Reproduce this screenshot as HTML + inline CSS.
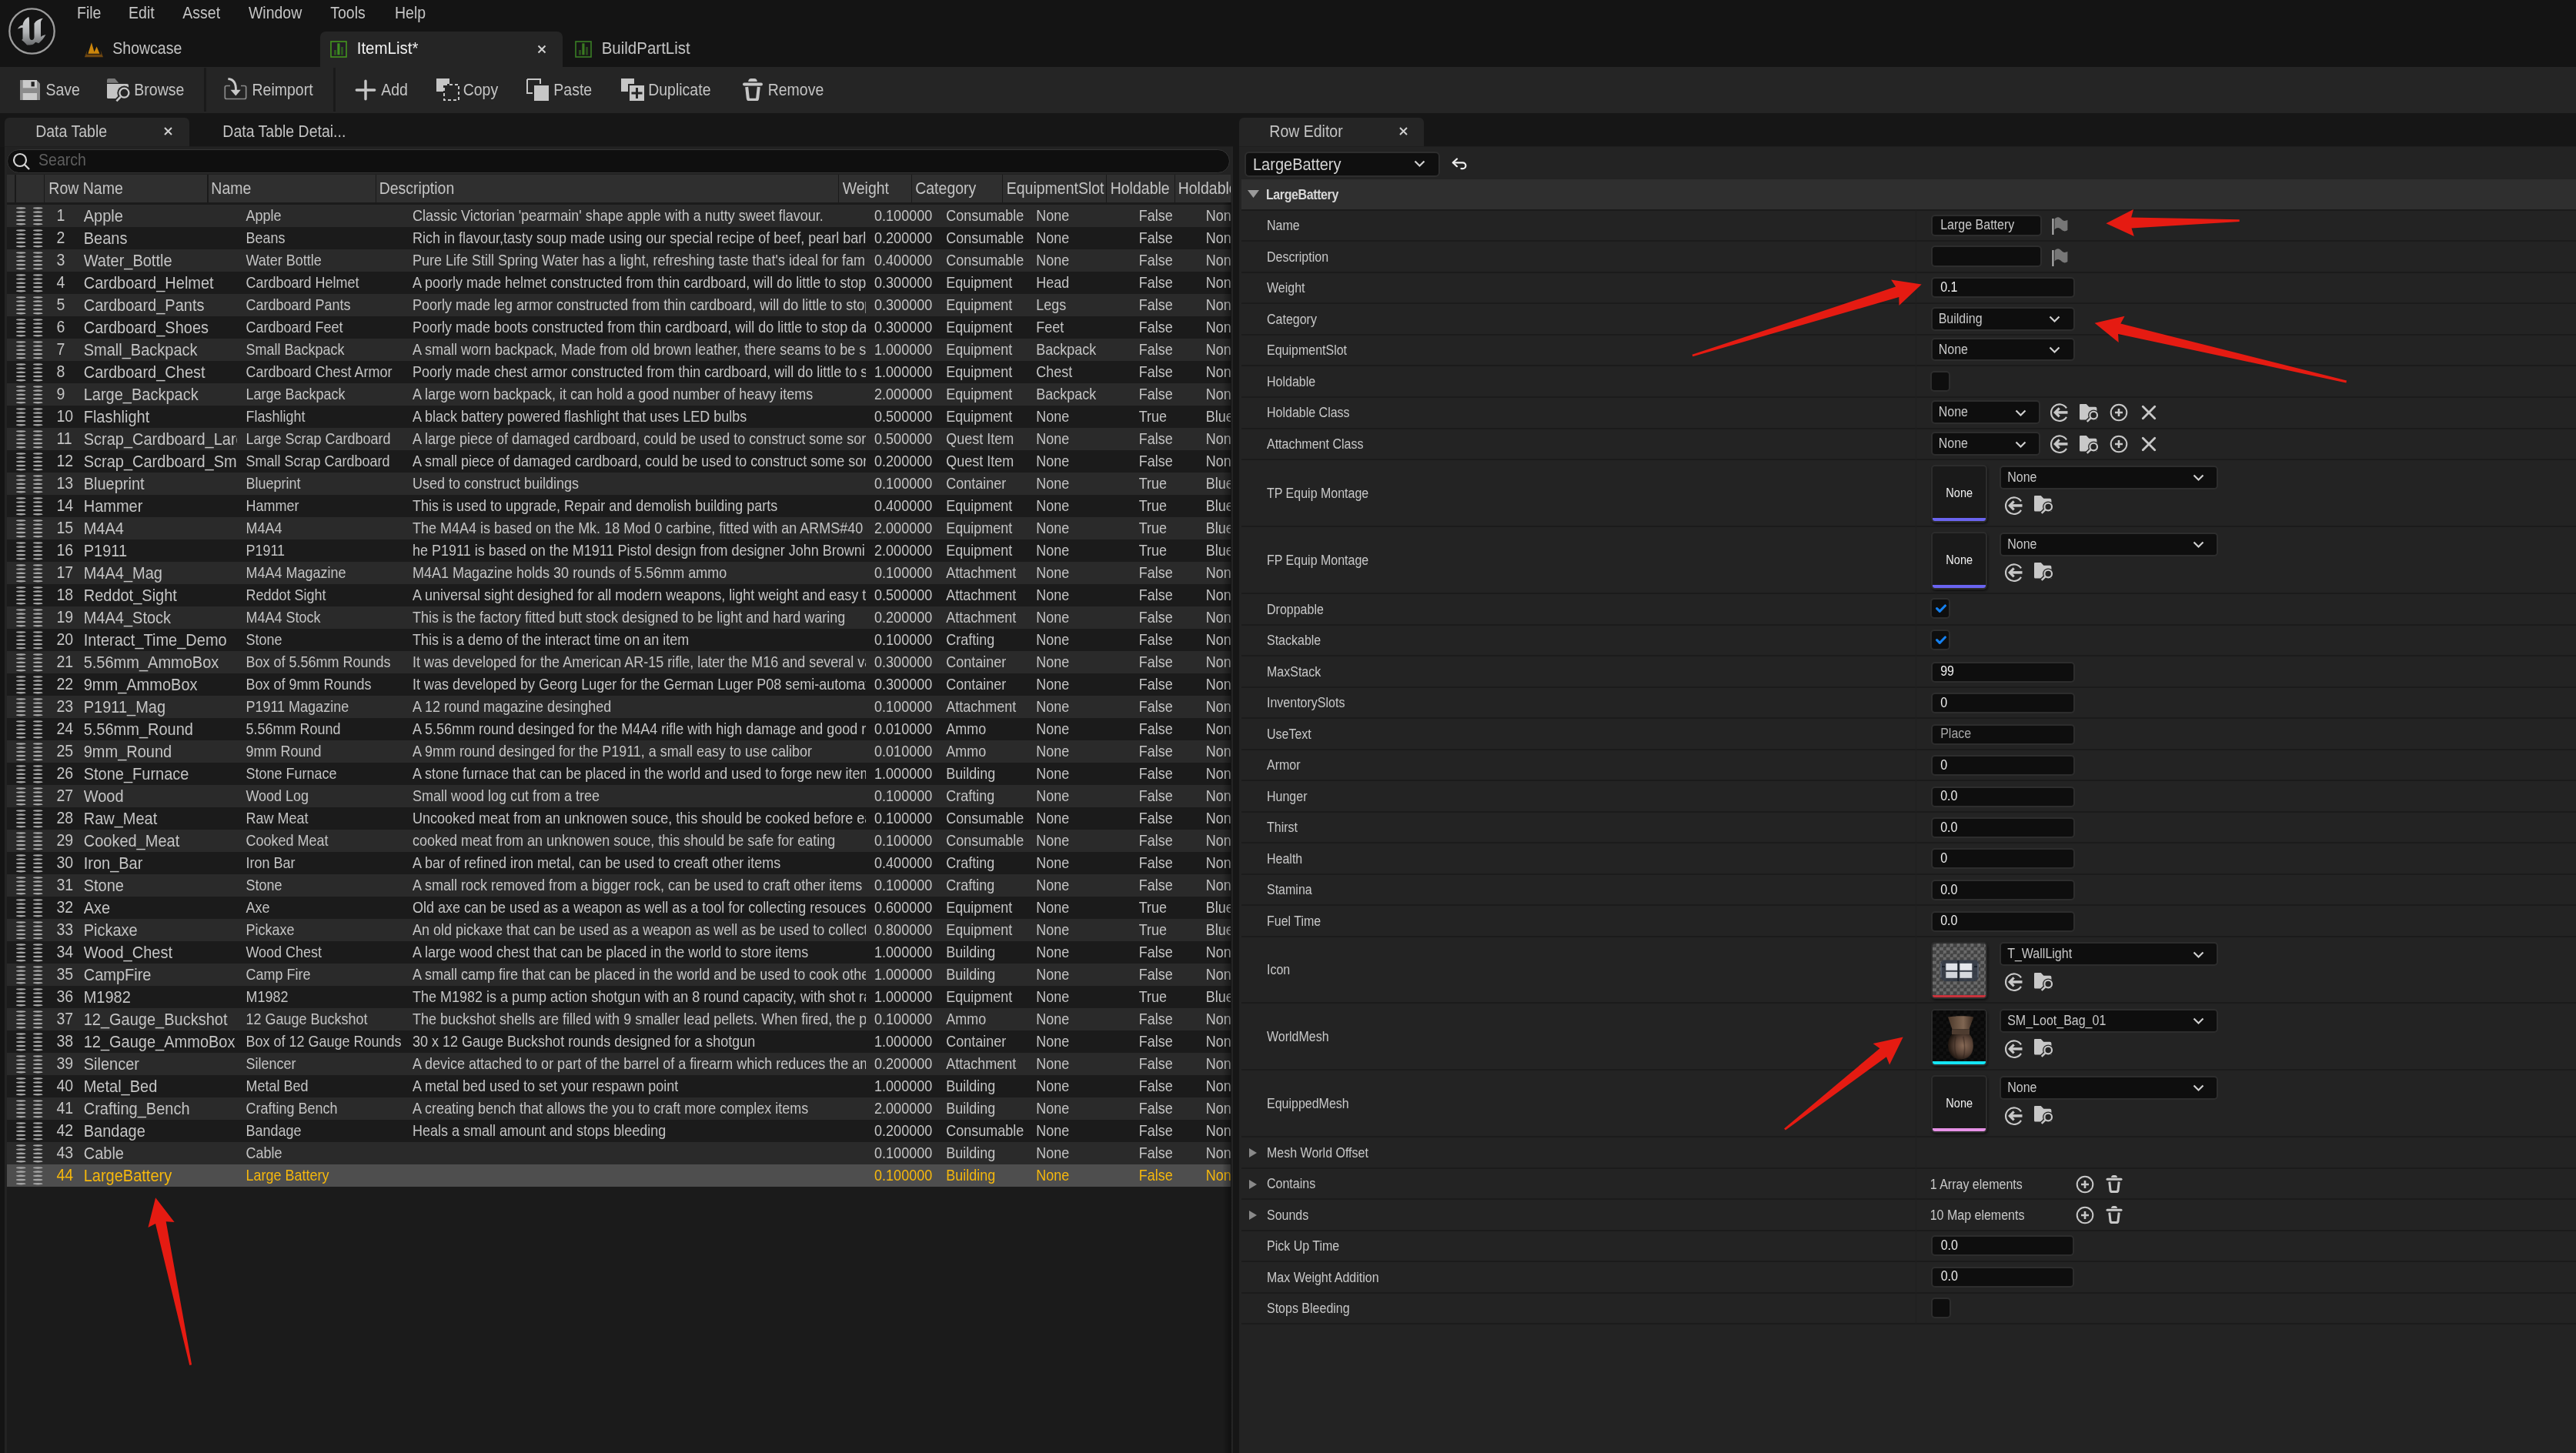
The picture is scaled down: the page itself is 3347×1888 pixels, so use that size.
<!DOCTYPE html>
<html><head><meta charset="utf-8"><title>ItemList - Data Table</title>
<style>
html,body{margin:0;padding:0;}
body{width:3347px;height:1888px;overflow:hidden;background:#141414;position:relative;font-family:"Liberation Sans", sans-serif;}
body div, body svg{position:absolute;box-sizing:content-box;}
.t{white-space:nowrap;line-height:1;}
body{will-change:transform;}
</style></head><body>
<div style="left:0px;top:0px;width:3347px;height:86px;background:#141414;"></div><svg style="left:10px;top:9px;" width="63" height="63" viewBox="0 0 63 63"><circle cx="31.5" cy="31.5" r="29.2" fill="none" stroke="#9c9c9c" stroke-width="2.3"/>
<defs><linearGradient id="ug" x1="0" y1="0" x2="0" y2="1"><stop offset="0" stop-color="#cfd0d2"/><stop offset="0.55" stop-color="#b0b2b4"/><stop offset="1" stop-color="#6a6c6e"/></linearGradient></defs>
<path fill="url(#ug)" d="M12.8 28.7 C15 25 17.5 23.5 19.5 23.8 C20 19 23 15 27.4 12.9 C27.8 14.5 28 16 28 17.3 L28.3 38.5 C28.3 41.5 29.8 43 31.3 43 C33 43 34.5 41.5 34.5 39 L34.5 21.4 C37 17.5 41 15.5 45.9 14.7 C44 16.5 43 18.5 43 20.3 L43 39 C45 37.5 47.5 36.5 49.4 36.1 C47 40.5 44 44.5 40.3 47.2 L36.2 45.7 C35 47 33.5 48.5 32.1 48.9 C30 49.5 27.5 49.5 25.1 49.5 C22.5 47 20.5 44.5 18.1 43.1 C19 42.5 19.5 41.8 19.5 41.3 L19.5 27 C17.5 27 15 27.5 12.8 28.7 Z"/></svg><div class="t" style="left:100.00px;top:8.29px;font-size:19.5px;color:#c4c4c4;font-weight:400;transform:scaleY(1.1);transform-origin:0 15.31px;">File</div><div class="t" style="left:167.10px;top:8.29px;font-size:19.5px;color:#c4c4c4;font-weight:400;transform:scaleY(1.1);transform-origin:0 15.31px;">Edit</div><div class="t" style="left:237.30px;top:8.29px;font-size:19.5px;color:#c4c4c4;font-weight:400;transform:scaleY(1.1);transform-origin:0 15.31px;">Asset</div><div class="t" style="left:322.90px;top:8.29px;font-size:19.5px;color:#c4c4c4;font-weight:400;transform:scaleY(1.1);transform-origin:0 15.31px;">Window</div><div class="t" style="left:429.20px;top:8.29px;font-size:19.5px;color:#c4c4c4;font-weight:400;transform:scaleY(1.1);transform-origin:0 15.31px;">Tools</div><div class="t" style="left:513.00px;top:8.29px;font-size:19.5px;color:#c4c4c4;font-weight:400;transform:scaleY(1.1);transform-origin:0 15.31px;">Help</div><div style="left:416px;top:41px;width:315px;height:46.5px;background:#252525;border-radius:7px 7px 0 0;"></div><svg style="left:108px;top:53px;" width="28" height="24" viewBox="0 0 28 24"><path d="M10.9 2.2 L6.4 16.8 L14.5 16.8 L14.5 14.4 Z M14.5 14.4 L17.6 7.5 L21.5 16.8 L14.5 16.8 Z" fill="#cc860c"/><path d="M5.4 11.9 L1.9 21.2 L26 21.2 L22.6 11.9 L23.5 17.8 L4.4 17.8 Z" fill="#6e4610"/></svg><div class="t" style="left:146.30px;top:53.69px;font-size:19.5px;color:#c4c4c4;font-weight:400;transform:scaleY(1.1);transform-origin:0 15.31px;">Showcase</div><svg style="left:429px;top:53px;" width="22" height="22" viewBox="0 0 22 22"><rect x="1" y="1" width="20" height="20" fill="#221e26" stroke="#44951f" stroke-width="1.6"/><rect x="5" y="12" width="3" height="6.5" fill="#2e5e1e"/><rect x="9.3" y="3.3" width="3.2" height="15" fill="#3f8f22"/><rect x="14.1" y="8" width="2.8" height="10.5" fill="#2d5a20"/></svg><div class="t" style="left:463.70px;top:52.85px;font-size:20.5px;color:#f0f0f0;font-weight:400;transform:scaleY(1.1);transform-origin:0 16.15px;">ItemList*</div><svg style="left:698px;top:58px;" width="12" height="12" viewBox="0 0 12 12"><path d="M1.5 1.5 L10.5 10.5 M10.5 1.5 L1.5 10.5" stroke="#d0d0d0" stroke-width="2"/></svg><svg style="left:747px;top:53px;" width="22" height="22" viewBox="0 0 22 22"><rect x="1" y="1" width="20" height="20" fill="#161616" stroke="#3a7f25" stroke-width="1.6"/><rect x="5" y="12" width="3" height="6.5" fill="#2a4f1c"/><rect x="9.3" y="3.3" width="3.2" height="15" fill="#3a7a22"/><rect x="14.1" y="8" width="2.8" height="10.5" fill="#2a4f1c"/></svg><div class="t" style="left:781.70px;top:52.85px;font-size:20.5px;color:#c4c4c4;font-weight:400;transform:scaleY(1.1);transform-origin:0 16.15px;">BuildPartList</div><div style="left:0px;top:86.5px;width:3347px;height:60.5px;background:#252525;"></div><div style="left:264.7px;top:88px;width:3px;height:57px;background:#1a1a1a;"></div><div style="left:433px;top:88px;width:3px;height:57px;background:#1a1a1a;"></div><svg style="left:26px;top:104px;" width="26" height="26" viewBox="0 0 26 26"><path d="M0 0 H21.5 L26 4.5 V26 H0 Z" fill="#8c8c8c"/><rect x="3.7" y="0" width="18.3" height="10.3" fill="#cbcbcb"/><rect x="14.5" y="2.2" width="4.3" height="6.2" fill="#222"/><rect x="3.7" y="17" width="18.3" height="9" fill="#cbcbcb"/></svg><div class="t" style="left:59.50px;top:107.69px;font-size:19.5px;color:#c4c4c4;font-weight:400;transform:scaleY(1.1);transform-origin:0 15.31px;">Save</div><svg style="left:139px;top:101px;" width="32" height="32" viewBox="0 0 32 32"><path d="M0 3 Q0 1 2 1 H10.2 L15.2 6.7 H0 Z" fill="#7a7a7a"/><path d="M0 8.1 H26 Q28 8.1 28 10 V27 H1.5 Q0 27 0 25.5 Z" fill="#c4c4c4"/><circle cx="22.4" cy="19.7" r="9.1" fill="#252525"/><path d="M17.2 25.4 L12.4 30.4" stroke="#252525" stroke-width="6.5"/><circle cx="22.4" cy="19.7" r="6" fill="none" stroke="#c8c8c8" stroke-width="2.3"/><path d="M17.6 24.8 L12.4 30.4" stroke="#c8c8c8" stroke-width="2.6"/></svg><div class="t" style="left:174.30px;top:107.69px;font-size:19.5px;color:#c4c4c4;font-weight:400;transform:scaleY(1.1);transform-origin:0 15.31px;">Browse</div><svg style="left:291px;top:101px;" width="31" height="30" viewBox="0 0 31 30"><path d="M8 10.5 H3.3 Q1.3 10.5 1.3 12.5 V25.5 Q1.3 27.5 3.3 27.5 H26.7 Q28.7 27.5 28.7 25.5 V12.5 Q28.7 10.5 26.7 10.5 H22" fill="none" stroke="#8a8a8a" stroke-width="1.7"/><path d="M5.4 1.5 C12 2 15.8 6.5 15.4 16.5" fill="none" stroke="#c8c8c8" stroke-width="2.8"/><path d="M8.5 15.7 L15.3 23.4 L21.8 15.7 Z" fill="#c8c8c8"/></svg><div class="t" style="left:327.50px;top:107.69px;font-size:19.5px;color:#c4c4c4;font-weight:400;transform:scaleY(1.1);transform-origin:0 15.31px;">Reimport</div><svg style="left:461px;top:103px;" width="28" height="28" viewBox="0 0 28 28"><path d="M14 2.3 V25.7 M2.3 14 H25.7" stroke="#c6c6c6" stroke-width="3.4" stroke-linecap="round"/></svg><div class="t" style="left:495.20px;top:107.69px;font-size:19.5px;color:#c4c4c4;font-weight:400;transform:scaleY(1.1);transform-origin:0 15.31px;">Add</div><svg style="left:567px;top:102px;" width="31" height="30" viewBox="0 0 31 30"><path d="M0 0 H17 V7 H9 V17 H0 Z" fill="#c6c6c6"/><rect x="10" y="8" width="19" height="20" fill="none" stroke="#c6c6c6" stroke-width="2" stroke-dasharray="4 3"/></svg><div class="t" style="left:601.70px;top:107.69px;font-size:19.5px;color:#c4c4c4;font-weight:400;transform:scaleY(1.1);transform-origin:0 15.31px;">Copy</div><svg style="left:684px;top:102px;" width="31" height="30" viewBox="0 0 31 30"><path d="M1 1 H18 V7 M1 1 V19 H8" fill="none" stroke="#c6c6c6" stroke-width="2"/><rect x="10" y="9" width="19" height="20" fill="#c6c6c6"/></svg><div class="t" style="left:719.30px;top:107.69px;font-size:19.5px;color:#c4c4c4;font-weight:400;transform:scaleY(1.1);transform-origin:0 15.31px;">Paste</div><svg style="left:807px;top:102px;" width="31" height="30" viewBox="0 0 31 30"><path d="M0 0 H17 V7 H9 V17 H0 Z" fill="#c6c6c6"/><rect x="11" y="9" width="19" height="20" fill="#c6c6c6"/><path d="M20.5 12 V26 M13.5 19 H27.5" stroke="#252525" stroke-width="3"/></svg><div class="t" style="left:842.20px;top:107.69px;font-size:19.5px;color:#c4c4c4;font-weight:400;transform:scaleY(1.1);transform-origin:0 15.31px;">Duplicate</div><svg style="left:964px;top:101px;" width="28" height="30" viewBox="0 0 28 30"><path d="M8.2 5 Q8.5 1 12 1 H16 Q19.5 1 19.8 5 Z" fill="#c6c6c6"/><path d="M3 8.5 H25" stroke="#c6c6c6" stroke-width="4" stroke-linecap="round"/><path d="M6.2 12 L7.8 26.5 Q8 28.7 10.2 28.7 H17.8 Q20 28.7 20.2 26.5 L21.8 12" fill="none" stroke="#c6c6c6" stroke-width="4" stroke-linejoin="round"/></svg><div class="t" style="left:997.70px;top:107.69px;font-size:19.5px;color:#c4c4c4;font-weight:400;transform:scaleY(1.1);transform-origin:0 15.31px;">Remove</div><div style="left:0px;top:147px;width:3347px;height:44px;background:#161616;"></div><div style="left:6px;top:191px;width:1596px;height:1697px;background:#222222;"></div><div style="left:6px;top:191px;width:3.3px;height:1697px;background:#232323;"></div><div style="left:6px;top:153px;width:240px;height:37px;background:#252525;border-radius:6px 6px 0 0;"></div><div class="t" style="left:46.20px;top:161.69px;font-size:19.5px;color:#c4c4c4;font-weight:400;transform:scaleY(1.1);transform-origin:0 15.31px;">Data Table</div><svg style="left:213px;top:165px;" width="11" height="11" viewBox="0 0 11 11"><path d="M1 1 L10 10 M10 1 L1 10" stroke="#d0d0d0" stroke-width="2"/></svg><div class="t" style="left:289.30px;top:161.69px;font-size:19.5px;color:#c4c4c4;font-weight:400;transform:scaleY(1.1);transform-origin:0 15.31px;">Data Table Detai...</div><div style="left:6px;top:190px;width:1596px;height:1.3px;background:#1e1e1e;"></div><div style="left:9px;top:194.3px;width:1586.6px;height:28.8px;background:#0f0f0f;border:1.6px solid #343434;border-radius:16px;"></div><svg style="left:16px;top:198px;" width="24" height="24" viewBox="0 0 24 24"><circle cx="10" cy="10" r="8" fill="none" stroke="#d4d4d4" stroke-width="2.2"/><path d="M15.5 15.5 L22 22" stroke="#d4d4d4" stroke-width="2.4"/></svg><div class="t" style="left:50.10px;top:199.39px;font-size:19.5px;color:#5e5e5e;font-weight:400;transform:scaleY(1.1);transform-origin:0 15.31px;">Search</div><div style="left:9.3px;top:227px;width:1589.5px;height:1661px;background:#1b1b1b;"></div><div style="left:1600.3px;top:191px;width:1.8px;height:1697px;background:#242424;"></div><div style="left:1602px;top:147px;width:8px;height:1741px;background:#161616;"></div><div style="left:9.3px;top:227px;width:1589.5px;height:36px;background:#2f2f2f;"></div><div style="left:19.4px;top:227px;width:1.3px;height:36px;background:#1a1a1a;"></div><div style="left:56.9px;top:227px;width:1.3px;height:36px;background:#1a1a1a;"></div><div style="left:269.4px;top:227px;width:1.3px;height:36px;background:#1a1a1a;"></div><div style="left:487.79999999999995px;top:227px;width:1.3px;height:36px;background:#1a1a1a;"></div><div style="left:1089.0px;top:227px;width:1.3px;height:36px;background:#1a1a1a;"></div><div style="left:1183.8000000000002px;top:227px;width:1.3px;height:36px;background:#1a1a1a;"></div><div style="left:1302.1000000000001px;top:227px;width:1.3px;height:36px;background:#1a1a1a;"></div><div style="left:1437.2px;top:227px;width:1.3px;height:36px;background:#1a1a1a;"></div><div style="left:1525.8000000000002px;top:227px;width:1.3px;height:36px;background:#1a1a1a;"></div><div class="t" style="left:63.30px;top:235.89px;font-size:19.5px;color:#c4c4c4;font-weight:400;transform:scaleY(1.1);transform-origin:0 15.31px;">Row Name</div><div class="t" style="left:274.30px;top:235.89px;font-size:19.5px;color:#c4c4c4;font-weight:400;transform:scaleY(1.1);transform-origin:0 15.31px;">Name</div><div class="t" style="left:492.70px;top:235.89px;font-size:19.5px;color:#c4c4c4;font-weight:400;transform:scaleY(1.1);transform-origin:0 15.31px;">Description</div><div class="t" style="left:1094.70px;top:235.89px;font-size:19.5px;color:#c4c4c4;font-weight:400;transform:scaleY(1.1);transform-origin:0 15.31px;">Weight</div><div class="t" style="left:1189.20px;top:235.89px;font-size:19.5px;color:#c4c4c4;font-weight:400;transform:scaleY(1.1);transform-origin:0 15.31px;">Category</div><div class="t" style="left:1307.70px;top:235.89px;font-size:19.5px;color:#c4c4c4;font-weight:400;transform:scaleY(1.1);transform-origin:0 15.31px;">EquipmentSlot</div><div class="t" style="left:1442.70px;top:235.89px;font-size:19.5px;color:#c4c4c4;font-weight:400;transform:scaleY(1.1);transform-origin:0 15.31px;">Holdable</div><div class="t" style="left:1530.70px;top:235.89px;font-size:19.5px;color:#c4c4c4;font-weight:400;width:67.90px;height:25.4px;overflow:hidden;transform:scaleY(1.1);transform-origin:0 15.31px;">Holdable</div><div style="left:9.3px;top:266.0px;width:1589.5px;height:29.0px;background:#2a2a2a;"></div><svg style="left:21.3px;top:269.0px;" width="13" height="27" viewBox="0 0 13 27"><ellipse cx="6.25" cy="1.4" rx="6.3" ry="1.25" fill="#a6a6a6"/><ellipse cx="6.25" cy="6.6" rx="6.3" ry="1.25" fill="#a6a6a6"/><ellipse cx="6.25" cy="11.8" rx="6.3" ry="1.25" fill="#a6a6a6"/><ellipse cx="6.25" cy="17.0" rx="6.3" ry="1.25" fill="#a6a6a6"/><ellipse cx="6.25" cy="22.2" rx="6.3" ry="1.25" fill="#a6a6a6"/></svg><svg style="left:42.9px;top:269.0px;" width="13" height="27" viewBox="0 0 13 27"><ellipse cx="6.25" cy="1.4" rx="6.3" ry="1.25" fill="#a6a6a6"/><ellipse cx="6.25" cy="6.6" rx="6.3" ry="1.25" fill="#a6a6a6"/><ellipse cx="6.25" cy="11.8" rx="6.3" ry="1.25" fill="#a6a6a6"/><ellipse cx="6.25" cy="17.0" rx="6.3" ry="1.25" fill="#a6a6a6"/><ellipse cx="6.25" cy="22.2" rx="6.3" ry="1.25" fill="#a6a6a6"/></svg><div class="t" style="left:73.40px;top:271.09px;font-size:19.5px;color:#c4c4c4;font-weight:400;transform:scaleY(1.1);transform-origin:0 15.31px;">1</div><div class="t" style="left:108.70px;top:270.67px;font-size:20px;color:#c4c4c4;font-weight:400;width:199.60px;height:26.0px;overflow:hidden;transform:scaleY(1.1);transform-origin:0 15.73px;">Apple</div><div class="t" style="left:319.40px;top:272.36px;font-size:18px;color:#c4c4c4;font-weight:400;width:210.60px;height:23.4px;overflow:hidden;transform:scaleY(1.1);transform-origin:0 14.04px;">Apple</div><div class="t" style="left:536.00px;top:272.36px;font-size:18px;color:#c4c4c4;font-weight:400;width:589.00px;height:23.4px;overflow:hidden;transform:scaleY(1.1);transform-origin:0 14.04px;">Classic Victorian &#x27;pearmain&#x27; shape apple with a nutty sweet flavour.</div><div class="t" style="left:1136.10px;top:272.36px;font-size:18px;color:#c4c4c4;font-weight:400;transform:scaleY(1.1);transform-origin:0 14.04px;">0.100000</div><div class="t" style="left:1229.20px;top:272.36px;font-size:18px;color:#c4c4c4;font-weight:400;transform:scaleY(1.1);transform-origin:0 14.04px;">Consumable</div><div class="t" style="left:1346.20px;top:272.36px;font-size:18px;color:#c4c4c4;font-weight:400;transform:scaleY(1.1);transform-origin:0 14.04px;">None</div><div class="t" style="left:1479.70px;top:272.36px;font-size:18px;color:#c4c4c4;font-weight:400;transform:scaleY(1.1);transform-origin:0 14.04px;">False</div><div class="t" style="left:1566.70px;top:272.36px;font-size:18px;color:#c4c4c4;font-weight:400;width:31.90px;height:23.4px;overflow:hidden;transform:scaleY(1.1);transform-origin:0 14.04px;">None</div><div style="left:9.3px;top:295.0px;width:1589.5px;height:29.0px;background:#1b1b1b;"></div><svg style="left:21.3px;top:298.0px;" width="13" height="27" viewBox="0 0 13 27"><ellipse cx="6.25" cy="1.4" rx="6.3" ry="1.25" fill="#a6a6a6"/><ellipse cx="6.25" cy="6.6" rx="6.3" ry="1.25" fill="#a6a6a6"/><ellipse cx="6.25" cy="11.8" rx="6.3" ry="1.25" fill="#a6a6a6"/><ellipse cx="6.25" cy="17.0" rx="6.3" ry="1.25" fill="#a6a6a6"/><ellipse cx="6.25" cy="22.2" rx="6.3" ry="1.25" fill="#a6a6a6"/></svg><svg style="left:42.9px;top:298.0px;" width="13" height="27" viewBox="0 0 13 27"><ellipse cx="6.25" cy="1.4" rx="6.3" ry="1.25" fill="#a6a6a6"/><ellipse cx="6.25" cy="6.6" rx="6.3" ry="1.25" fill="#a6a6a6"/><ellipse cx="6.25" cy="11.8" rx="6.3" ry="1.25" fill="#a6a6a6"/><ellipse cx="6.25" cy="17.0" rx="6.3" ry="1.25" fill="#a6a6a6"/><ellipse cx="6.25" cy="22.2" rx="6.3" ry="1.25" fill="#a6a6a6"/></svg><div class="t" style="left:73.40px;top:300.09px;font-size:19.5px;color:#c4c4c4;font-weight:400;transform:scaleY(1.1);transform-origin:0 15.31px;">2</div><div class="t" style="left:108.70px;top:299.67px;font-size:20px;color:#c4c4c4;font-weight:400;width:199.60px;height:26.0px;overflow:hidden;transform:scaleY(1.1);transform-origin:0 15.73px;">Beans</div><div class="t" style="left:319.40px;top:301.36px;font-size:18px;color:#c4c4c4;font-weight:400;width:210.60px;height:23.4px;overflow:hidden;transform:scaleY(1.1);transform-origin:0 14.04px;">Beans</div><div class="t" style="left:536.00px;top:301.36px;font-size:18px;color:#c4c4c4;font-weight:400;width:589.00px;height:23.4px;overflow:hidden;transform:scaleY(1.1);transform-origin:0 14.04px;">Rich in flavour,tasty soup made using our special recipe of beef, pearl barley and vegetables</div><div class="t" style="left:1136.10px;top:301.36px;font-size:18px;color:#c4c4c4;font-weight:400;transform:scaleY(1.1);transform-origin:0 14.04px;">0.200000</div><div class="t" style="left:1229.20px;top:301.36px;font-size:18px;color:#c4c4c4;font-weight:400;transform:scaleY(1.1);transform-origin:0 14.04px;">Consumable</div><div class="t" style="left:1346.20px;top:301.36px;font-size:18px;color:#c4c4c4;font-weight:400;transform:scaleY(1.1);transform-origin:0 14.04px;">None</div><div class="t" style="left:1479.70px;top:301.36px;font-size:18px;color:#c4c4c4;font-weight:400;transform:scaleY(1.1);transform-origin:0 14.04px;">False</div><div class="t" style="left:1566.70px;top:301.36px;font-size:18px;color:#c4c4c4;font-weight:400;width:31.90px;height:23.4px;overflow:hidden;transform:scaleY(1.1);transform-origin:0 14.04px;">None</div><div style="left:9.3px;top:324.0px;width:1589.5px;height:29.0px;background:#2a2a2a;"></div><svg style="left:21.3px;top:327.0px;" width="13" height="27" viewBox="0 0 13 27"><ellipse cx="6.25" cy="1.4" rx="6.3" ry="1.25" fill="#a6a6a6"/><ellipse cx="6.25" cy="6.6" rx="6.3" ry="1.25" fill="#a6a6a6"/><ellipse cx="6.25" cy="11.8" rx="6.3" ry="1.25" fill="#a6a6a6"/><ellipse cx="6.25" cy="17.0" rx="6.3" ry="1.25" fill="#a6a6a6"/><ellipse cx="6.25" cy="22.2" rx="6.3" ry="1.25" fill="#a6a6a6"/></svg><svg style="left:42.9px;top:327.0px;" width="13" height="27" viewBox="0 0 13 27"><ellipse cx="6.25" cy="1.4" rx="6.3" ry="1.25" fill="#a6a6a6"/><ellipse cx="6.25" cy="6.6" rx="6.3" ry="1.25" fill="#a6a6a6"/><ellipse cx="6.25" cy="11.8" rx="6.3" ry="1.25" fill="#a6a6a6"/><ellipse cx="6.25" cy="17.0" rx="6.3" ry="1.25" fill="#a6a6a6"/><ellipse cx="6.25" cy="22.2" rx="6.3" ry="1.25" fill="#a6a6a6"/></svg><div class="t" style="left:73.40px;top:329.09px;font-size:19.5px;color:#c4c4c4;font-weight:400;transform:scaleY(1.1);transform-origin:0 15.31px;">3</div><div class="t" style="left:108.70px;top:328.67px;font-size:20px;color:#c4c4c4;font-weight:400;width:199.60px;height:26.0px;overflow:hidden;transform:scaleY(1.1);transform-origin:0 15.73px;">Water_Bottle</div><div class="t" style="left:319.40px;top:330.36px;font-size:18px;color:#c4c4c4;font-weight:400;width:210.60px;height:23.4px;overflow:hidden;transform:scaleY(1.1);transform-origin:0 14.04px;">Water Bottle</div><div class="t" style="left:536.00px;top:330.36px;font-size:18px;color:#c4c4c4;font-weight:400;width:589.00px;height:23.4px;overflow:hidden;transform:scaleY(1.1);transform-origin:0 14.04px;">Pure Life Still Spring Water has a light, refreshing taste that&#x27;s ideal for families</div><div class="t" style="left:1136.10px;top:330.36px;font-size:18px;color:#c4c4c4;font-weight:400;transform:scaleY(1.1);transform-origin:0 14.04px;">0.400000</div><div class="t" style="left:1229.20px;top:330.36px;font-size:18px;color:#c4c4c4;font-weight:400;transform:scaleY(1.1);transform-origin:0 14.04px;">Consumable</div><div class="t" style="left:1346.20px;top:330.36px;font-size:18px;color:#c4c4c4;font-weight:400;transform:scaleY(1.1);transform-origin:0 14.04px;">None</div><div class="t" style="left:1479.70px;top:330.36px;font-size:18px;color:#c4c4c4;font-weight:400;transform:scaleY(1.1);transform-origin:0 14.04px;">False</div><div class="t" style="left:1566.70px;top:330.36px;font-size:18px;color:#c4c4c4;font-weight:400;width:31.90px;height:23.4px;overflow:hidden;transform:scaleY(1.1);transform-origin:0 14.04px;">None</div><div style="left:9.3px;top:353.0px;width:1589.5px;height:29.0px;background:#1b1b1b;"></div><svg style="left:21.3px;top:356.0px;" width="13" height="27" viewBox="0 0 13 27"><ellipse cx="6.25" cy="1.4" rx="6.3" ry="1.25" fill="#a6a6a6"/><ellipse cx="6.25" cy="6.6" rx="6.3" ry="1.25" fill="#a6a6a6"/><ellipse cx="6.25" cy="11.8" rx="6.3" ry="1.25" fill="#a6a6a6"/><ellipse cx="6.25" cy="17.0" rx="6.3" ry="1.25" fill="#a6a6a6"/><ellipse cx="6.25" cy="22.2" rx="6.3" ry="1.25" fill="#a6a6a6"/></svg><svg style="left:42.9px;top:356.0px;" width="13" height="27" viewBox="0 0 13 27"><ellipse cx="6.25" cy="1.4" rx="6.3" ry="1.25" fill="#a6a6a6"/><ellipse cx="6.25" cy="6.6" rx="6.3" ry="1.25" fill="#a6a6a6"/><ellipse cx="6.25" cy="11.8" rx="6.3" ry="1.25" fill="#a6a6a6"/><ellipse cx="6.25" cy="17.0" rx="6.3" ry="1.25" fill="#a6a6a6"/><ellipse cx="6.25" cy="22.2" rx="6.3" ry="1.25" fill="#a6a6a6"/></svg><div class="t" style="left:73.40px;top:358.09px;font-size:19.5px;color:#c4c4c4;font-weight:400;transform:scaleY(1.1);transform-origin:0 15.31px;">4</div><div class="t" style="left:108.70px;top:357.67px;font-size:20px;color:#c4c4c4;font-weight:400;width:199.60px;height:26.0px;overflow:hidden;transform:scaleY(1.1);transform-origin:0 15.73px;">Cardboard_Helmet</div><div class="t" style="left:319.40px;top:359.36px;font-size:18px;color:#c4c4c4;font-weight:400;width:210.60px;height:23.4px;overflow:hidden;transform:scaleY(1.1);transform-origin:0 14.04px;">Cardboard Helmet</div><div class="t" style="left:536.00px;top:359.36px;font-size:18px;color:#c4c4c4;font-weight:400;width:589.00px;height:23.4px;overflow:hidden;transform:scaleY(1.1);transform-origin:0 14.04px;">A poorly made helmet constructed from thin cardboard, will do little to stop damage</div><div class="t" style="left:1136.10px;top:359.36px;font-size:18px;color:#c4c4c4;font-weight:400;transform:scaleY(1.1);transform-origin:0 14.04px;">0.300000</div><div class="t" style="left:1229.20px;top:359.36px;font-size:18px;color:#c4c4c4;font-weight:400;transform:scaleY(1.1);transform-origin:0 14.04px;">Equipment</div><div class="t" style="left:1346.20px;top:359.36px;font-size:18px;color:#c4c4c4;font-weight:400;transform:scaleY(1.1);transform-origin:0 14.04px;">Head</div><div class="t" style="left:1479.70px;top:359.36px;font-size:18px;color:#c4c4c4;font-weight:400;transform:scaleY(1.1);transform-origin:0 14.04px;">False</div><div class="t" style="left:1566.70px;top:359.36px;font-size:18px;color:#c4c4c4;font-weight:400;width:31.90px;height:23.4px;overflow:hidden;transform:scaleY(1.1);transform-origin:0 14.04px;">None</div><div style="left:9.3px;top:382.0px;width:1589.5px;height:29.0px;background:#2a2a2a;"></div><svg style="left:21.3px;top:385.0px;" width="13" height="27" viewBox="0 0 13 27"><ellipse cx="6.25" cy="1.4" rx="6.3" ry="1.25" fill="#a6a6a6"/><ellipse cx="6.25" cy="6.6" rx="6.3" ry="1.25" fill="#a6a6a6"/><ellipse cx="6.25" cy="11.8" rx="6.3" ry="1.25" fill="#a6a6a6"/><ellipse cx="6.25" cy="17.0" rx="6.3" ry="1.25" fill="#a6a6a6"/><ellipse cx="6.25" cy="22.2" rx="6.3" ry="1.25" fill="#a6a6a6"/></svg><svg style="left:42.9px;top:385.0px;" width="13" height="27" viewBox="0 0 13 27"><ellipse cx="6.25" cy="1.4" rx="6.3" ry="1.25" fill="#a6a6a6"/><ellipse cx="6.25" cy="6.6" rx="6.3" ry="1.25" fill="#a6a6a6"/><ellipse cx="6.25" cy="11.8" rx="6.3" ry="1.25" fill="#a6a6a6"/><ellipse cx="6.25" cy="17.0" rx="6.3" ry="1.25" fill="#a6a6a6"/><ellipse cx="6.25" cy="22.2" rx="6.3" ry="1.25" fill="#a6a6a6"/></svg><div class="t" style="left:73.40px;top:387.09px;font-size:19.5px;color:#c4c4c4;font-weight:400;transform:scaleY(1.1);transform-origin:0 15.31px;">5</div><div class="t" style="left:108.70px;top:386.67px;font-size:20px;color:#c4c4c4;font-weight:400;width:199.60px;height:26.0px;overflow:hidden;transform:scaleY(1.1);transform-origin:0 15.73px;">Cardboard_Pants</div><div class="t" style="left:319.40px;top:388.36px;font-size:18px;color:#c4c4c4;font-weight:400;width:210.60px;height:23.4px;overflow:hidden;transform:scaleY(1.1);transform-origin:0 14.04px;">Cardboard Pants</div><div class="t" style="left:536.00px;top:388.36px;font-size:18px;color:#c4c4c4;font-weight:400;width:589.00px;height:23.4px;overflow:hidden;transform:scaleY(1.1);transform-origin:0 14.04px;">Poorly made leg armor constructed from thin cardboard, will do little to stop damage</div><div class="t" style="left:1136.10px;top:388.36px;font-size:18px;color:#c4c4c4;font-weight:400;transform:scaleY(1.1);transform-origin:0 14.04px;">0.300000</div><div class="t" style="left:1229.20px;top:388.36px;font-size:18px;color:#c4c4c4;font-weight:400;transform:scaleY(1.1);transform-origin:0 14.04px;">Equipment</div><div class="t" style="left:1346.20px;top:388.36px;font-size:18px;color:#c4c4c4;font-weight:400;transform:scaleY(1.1);transform-origin:0 14.04px;">Legs</div><div class="t" style="left:1479.70px;top:388.36px;font-size:18px;color:#c4c4c4;font-weight:400;transform:scaleY(1.1);transform-origin:0 14.04px;">False</div><div class="t" style="left:1566.70px;top:388.36px;font-size:18px;color:#c4c4c4;font-weight:400;width:31.90px;height:23.4px;overflow:hidden;transform:scaleY(1.1);transform-origin:0 14.04px;">None</div><div style="left:9.3px;top:411.0px;width:1589.5px;height:29.0px;background:#1b1b1b;"></div><svg style="left:21.3px;top:414.0px;" width="13" height="27" viewBox="0 0 13 27"><ellipse cx="6.25" cy="1.4" rx="6.3" ry="1.25" fill="#a6a6a6"/><ellipse cx="6.25" cy="6.6" rx="6.3" ry="1.25" fill="#a6a6a6"/><ellipse cx="6.25" cy="11.8" rx="6.3" ry="1.25" fill="#a6a6a6"/><ellipse cx="6.25" cy="17.0" rx="6.3" ry="1.25" fill="#a6a6a6"/><ellipse cx="6.25" cy="22.2" rx="6.3" ry="1.25" fill="#a6a6a6"/></svg><svg style="left:42.9px;top:414.0px;" width="13" height="27" viewBox="0 0 13 27"><ellipse cx="6.25" cy="1.4" rx="6.3" ry="1.25" fill="#a6a6a6"/><ellipse cx="6.25" cy="6.6" rx="6.3" ry="1.25" fill="#a6a6a6"/><ellipse cx="6.25" cy="11.8" rx="6.3" ry="1.25" fill="#a6a6a6"/><ellipse cx="6.25" cy="17.0" rx="6.3" ry="1.25" fill="#a6a6a6"/><ellipse cx="6.25" cy="22.2" rx="6.3" ry="1.25" fill="#a6a6a6"/></svg><div class="t" style="left:73.40px;top:416.09px;font-size:19.5px;color:#c4c4c4;font-weight:400;transform:scaleY(1.1);transform-origin:0 15.31px;">6</div><div class="t" style="left:108.70px;top:415.67px;font-size:20px;color:#c4c4c4;font-weight:400;width:199.60px;height:26.0px;overflow:hidden;transform:scaleY(1.1);transform-origin:0 15.73px;">Cardboard_Shoes</div><div class="t" style="left:319.40px;top:417.36px;font-size:18px;color:#c4c4c4;font-weight:400;width:210.60px;height:23.4px;overflow:hidden;transform:scaleY(1.1);transform-origin:0 14.04px;">Cardboard Feet</div><div class="t" style="left:536.00px;top:417.36px;font-size:18px;color:#c4c4c4;font-weight:400;width:589.00px;height:23.4px;overflow:hidden;transform:scaleY(1.1);transform-origin:0 14.04px;">Poorly made boots constructed from thin cardboard, will do little to stop damage</div><div class="t" style="left:1136.10px;top:417.36px;font-size:18px;color:#c4c4c4;font-weight:400;transform:scaleY(1.1);transform-origin:0 14.04px;">0.300000</div><div class="t" style="left:1229.20px;top:417.36px;font-size:18px;color:#c4c4c4;font-weight:400;transform:scaleY(1.1);transform-origin:0 14.04px;">Equipment</div><div class="t" style="left:1346.20px;top:417.36px;font-size:18px;color:#c4c4c4;font-weight:400;transform:scaleY(1.1);transform-origin:0 14.04px;">Feet</div><div class="t" style="left:1479.70px;top:417.36px;font-size:18px;color:#c4c4c4;font-weight:400;transform:scaleY(1.1);transform-origin:0 14.04px;">False</div><div class="t" style="left:1566.70px;top:417.36px;font-size:18px;color:#c4c4c4;font-weight:400;width:31.90px;height:23.4px;overflow:hidden;transform:scaleY(1.1);transform-origin:0 14.04px;">None</div><div style="left:9.3px;top:440.0px;width:1589.5px;height:29.0px;background:#2a2a2a;"></div><svg style="left:21.3px;top:443.0px;" width="13" height="27" viewBox="0 0 13 27"><ellipse cx="6.25" cy="1.4" rx="6.3" ry="1.25" fill="#a6a6a6"/><ellipse cx="6.25" cy="6.6" rx="6.3" ry="1.25" fill="#a6a6a6"/><ellipse cx="6.25" cy="11.8" rx="6.3" ry="1.25" fill="#a6a6a6"/><ellipse cx="6.25" cy="17.0" rx="6.3" ry="1.25" fill="#a6a6a6"/><ellipse cx="6.25" cy="22.2" rx="6.3" ry="1.25" fill="#a6a6a6"/></svg><svg style="left:42.9px;top:443.0px;" width="13" height="27" viewBox="0 0 13 27"><ellipse cx="6.25" cy="1.4" rx="6.3" ry="1.25" fill="#a6a6a6"/><ellipse cx="6.25" cy="6.6" rx="6.3" ry="1.25" fill="#a6a6a6"/><ellipse cx="6.25" cy="11.8" rx="6.3" ry="1.25" fill="#a6a6a6"/><ellipse cx="6.25" cy="17.0" rx="6.3" ry="1.25" fill="#a6a6a6"/><ellipse cx="6.25" cy="22.2" rx="6.3" ry="1.25" fill="#a6a6a6"/></svg><div class="t" style="left:73.40px;top:445.09px;font-size:19.5px;color:#c4c4c4;font-weight:400;transform:scaleY(1.1);transform-origin:0 15.31px;">7</div><div class="t" style="left:108.70px;top:444.67px;font-size:20px;color:#c4c4c4;font-weight:400;width:199.60px;height:26.0px;overflow:hidden;transform:scaleY(1.1);transform-origin:0 15.73px;">Small_Backpack</div><div class="t" style="left:319.40px;top:446.36px;font-size:18px;color:#c4c4c4;font-weight:400;width:210.60px;height:23.4px;overflow:hidden;transform:scaleY(1.1);transform-origin:0 14.04px;">Small Backpack</div><div class="t" style="left:536.00px;top:446.36px;font-size:18px;color:#c4c4c4;font-weight:400;width:589.00px;height:23.4px;overflow:hidden;transform:scaleY(1.1);transform-origin:0 14.04px;">A small worn backpack, Made from old brown leather, there seams to be space</div><div class="t" style="left:1136.10px;top:446.36px;font-size:18px;color:#c4c4c4;font-weight:400;transform:scaleY(1.1);transform-origin:0 14.04px;">1.000000</div><div class="t" style="left:1229.20px;top:446.36px;font-size:18px;color:#c4c4c4;font-weight:400;transform:scaleY(1.1);transform-origin:0 14.04px;">Equipment</div><div class="t" style="left:1346.20px;top:446.36px;font-size:18px;color:#c4c4c4;font-weight:400;transform:scaleY(1.1);transform-origin:0 14.04px;">Backpack</div><div class="t" style="left:1479.70px;top:446.36px;font-size:18px;color:#c4c4c4;font-weight:400;transform:scaleY(1.1);transform-origin:0 14.04px;">False</div><div class="t" style="left:1566.70px;top:446.36px;font-size:18px;color:#c4c4c4;font-weight:400;width:31.90px;height:23.4px;overflow:hidden;transform:scaleY(1.1);transform-origin:0 14.04px;">None</div><div style="left:9.3px;top:469.0px;width:1589.5px;height:29.0px;background:#1b1b1b;"></div><svg style="left:21.3px;top:472.0px;" width="13" height="27" viewBox="0 0 13 27"><ellipse cx="6.25" cy="1.4" rx="6.3" ry="1.25" fill="#a6a6a6"/><ellipse cx="6.25" cy="6.6" rx="6.3" ry="1.25" fill="#a6a6a6"/><ellipse cx="6.25" cy="11.8" rx="6.3" ry="1.25" fill="#a6a6a6"/><ellipse cx="6.25" cy="17.0" rx="6.3" ry="1.25" fill="#a6a6a6"/><ellipse cx="6.25" cy="22.2" rx="6.3" ry="1.25" fill="#a6a6a6"/></svg><svg style="left:42.9px;top:472.0px;" width="13" height="27" viewBox="0 0 13 27"><ellipse cx="6.25" cy="1.4" rx="6.3" ry="1.25" fill="#a6a6a6"/><ellipse cx="6.25" cy="6.6" rx="6.3" ry="1.25" fill="#a6a6a6"/><ellipse cx="6.25" cy="11.8" rx="6.3" ry="1.25" fill="#a6a6a6"/><ellipse cx="6.25" cy="17.0" rx="6.3" ry="1.25" fill="#a6a6a6"/><ellipse cx="6.25" cy="22.2" rx="6.3" ry="1.25" fill="#a6a6a6"/></svg><div class="t" style="left:73.40px;top:474.09px;font-size:19.5px;color:#c4c4c4;font-weight:400;transform:scaleY(1.1);transform-origin:0 15.31px;">8</div><div class="t" style="left:108.70px;top:473.67px;font-size:20px;color:#c4c4c4;font-weight:400;width:199.60px;height:26.0px;overflow:hidden;transform:scaleY(1.1);transform-origin:0 15.73px;">Cardboard_Chest</div><div class="t" style="left:319.40px;top:475.36px;font-size:18px;color:#c4c4c4;font-weight:400;width:210.60px;height:23.4px;overflow:hidden;transform:scaleY(1.1);transform-origin:0 14.04px;">Cardboard Chest Armor</div><div class="t" style="left:536.00px;top:475.36px;font-size:18px;color:#c4c4c4;font-weight:400;width:589.00px;height:23.4px;overflow:hidden;transform:scaleY(1.1);transform-origin:0 14.04px;">Poorly made chest armor constructed from thin cardboard, will do little to stop</div><div class="t" style="left:1136.10px;top:475.36px;font-size:18px;color:#c4c4c4;font-weight:400;transform:scaleY(1.1);transform-origin:0 14.04px;">1.000000</div><div class="t" style="left:1229.20px;top:475.36px;font-size:18px;color:#c4c4c4;font-weight:400;transform:scaleY(1.1);transform-origin:0 14.04px;">Equipment</div><div class="t" style="left:1346.20px;top:475.36px;font-size:18px;color:#c4c4c4;font-weight:400;transform:scaleY(1.1);transform-origin:0 14.04px;">Chest</div><div class="t" style="left:1479.70px;top:475.36px;font-size:18px;color:#c4c4c4;font-weight:400;transform:scaleY(1.1);transform-origin:0 14.04px;">False</div><div class="t" style="left:1566.70px;top:475.36px;font-size:18px;color:#c4c4c4;font-weight:400;width:31.90px;height:23.4px;overflow:hidden;transform:scaleY(1.1);transform-origin:0 14.04px;">None</div><div style="left:9.3px;top:498.0px;width:1589.5px;height:29.0px;background:#2a2a2a;"></div><svg style="left:21.3px;top:501.0px;" width="13" height="27" viewBox="0 0 13 27"><ellipse cx="6.25" cy="1.4" rx="6.3" ry="1.25" fill="#a6a6a6"/><ellipse cx="6.25" cy="6.6" rx="6.3" ry="1.25" fill="#a6a6a6"/><ellipse cx="6.25" cy="11.8" rx="6.3" ry="1.25" fill="#a6a6a6"/><ellipse cx="6.25" cy="17.0" rx="6.3" ry="1.25" fill="#a6a6a6"/><ellipse cx="6.25" cy="22.2" rx="6.3" ry="1.25" fill="#a6a6a6"/></svg><svg style="left:42.9px;top:501.0px;" width="13" height="27" viewBox="0 0 13 27"><ellipse cx="6.25" cy="1.4" rx="6.3" ry="1.25" fill="#a6a6a6"/><ellipse cx="6.25" cy="6.6" rx="6.3" ry="1.25" fill="#a6a6a6"/><ellipse cx="6.25" cy="11.8" rx="6.3" ry="1.25" fill="#a6a6a6"/><ellipse cx="6.25" cy="17.0" rx="6.3" ry="1.25" fill="#a6a6a6"/><ellipse cx="6.25" cy="22.2" rx="6.3" ry="1.25" fill="#a6a6a6"/></svg><div class="t" style="left:73.40px;top:503.09px;font-size:19.5px;color:#c4c4c4;font-weight:400;transform:scaleY(1.1);transform-origin:0 15.31px;">9</div><div class="t" style="left:108.70px;top:502.67px;font-size:20px;color:#c4c4c4;font-weight:400;width:199.60px;height:26.0px;overflow:hidden;transform:scaleY(1.1);transform-origin:0 15.73px;">Large_Backpack</div><div class="t" style="left:319.40px;top:504.36px;font-size:18px;color:#c4c4c4;font-weight:400;width:210.60px;height:23.4px;overflow:hidden;transform:scaleY(1.1);transform-origin:0 14.04px;">Large Backpack</div><div class="t" style="left:536.00px;top:504.36px;font-size:18px;color:#c4c4c4;font-weight:400;width:589.00px;height:23.4px;overflow:hidden;transform:scaleY(1.1);transform-origin:0 14.04px;">A large worn backpack, it can hold a good number of heavy items</div><div class="t" style="left:1136.10px;top:504.36px;font-size:18px;color:#c4c4c4;font-weight:400;transform:scaleY(1.1);transform-origin:0 14.04px;">2.000000</div><div class="t" style="left:1229.20px;top:504.36px;font-size:18px;color:#c4c4c4;font-weight:400;transform:scaleY(1.1);transform-origin:0 14.04px;">Equipment</div><div class="t" style="left:1346.20px;top:504.36px;font-size:18px;color:#c4c4c4;font-weight:400;transform:scaleY(1.1);transform-origin:0 14.04px;">Backpack</div><div class="t" style="left:1479.70px;top:504.36px;font-size:18px;color:#c4c4c4;font-weight:400;transform:scaleY(1.1);transform-origin:0 14.04px;">False</div><div class="t" style="left:1566.70px;top:504.36px;font-size:18px;color:#c4c4c4;font-weight:400;width:31.90px;height:23.4px;overflow:hidden;transform:scaleY(1.1);transform-origin:0 14.04px;">None</div><div style="left:9.3px;top:527.0px;width:1589.5px;height:29.0px;background:#1b1b1b;"></div><svg style="left:21.3px;top:530.0px;" width="13" height="27" viewBox="0 0 13 27"><ellipse cx="6.25" cy="1.4" rx="6.3" ry="1.25" fill="#a6a6a6"/><ellipse cx="6.25" cy="6.6" rx="6.3" ry="1.25" fill="#a6a6a6"/><ellipse cx="6.25" cy="11.8" rx="6.3" ry="1.25" fill="#a6a6a6"/><ellipse cx="6.25" cy="17.0" rx="6.3" ry="1.25" fill="#a6a6a6"/><ellipse cx="6.25" cy="22.2" rx="6.3" ry="1.25" fill="#a6a6a6"/></svg><svg style="left:42.9px;top:530.0px;" width="13" height="27" viewBox="0 0 13 27"><ellipse cx="6.25" cy="1.4" rx="6.3" ry="1.25" fill="#a6a6a6"/><ellipse cx="6.25" cy="6.6" rx="6.3" ry="1.25" fill="#a6a6a6"/><ellipse cx="6.25" cy="11.8" rx="6.3" ry="1.25" fill="#a6a6a6"/><ellipse cx="6.25" cy="17.0" rx="6.3" ry="1.25" fill="#a6a6a6"/><ellipse cx="6.25" cy="22.2" rx="6.3" ry="1.25" fill="#a6a6a6"/></svg><div class="t" style="left:73.40px;top:532.09px;font-size:19.5px;color:#c4c4c4;font-weight:400;transform:scaleY(1.1);transform-origin:0 15.31px;">10</div><div class="t" style="left:108.70px;top:531.67px;font-size:20px;color:#c4c4c4;font-weight:400;width:199.60px;height:26.0px;overflow:hidden;transform:scaleY(1.1);transform-origin:0 15.73px;">Flashlight</div><div class="t" style="left:319.40px;top:533.36px;font-size:18px;color:#c4c4c4;font-weight:400;width:210.60px;height:23.4px;overflow:hidden;transform:scaleY(1.1);transform-origin:0 14.04px;">Flashlight</div><div class="t" style="left:536.00px;top:533.36px;font-size:18px;color:#c4c4c4;font-weight:400;width:589.00px;height:23.4px;overflow:hidden;transform:scaleY(1.1);transform-origin:0 14.04px;">A black battery powered flashlight that uses LED bulbs</div><div class="t" style="left:1136.10px;top:533.36px;font-size:18px;color:#c4c4c4;font-weight:400;transform:scaleY(1.1);transform-origin:0 14.04px;">0.500000</div><div class="t" style="left:1229.20px;top:533.36px;font-size:18px;color:#c4c4c4;font-weight:400;transform:scaleY(1.1);transform-origin:0 14.04px;">Equipment</div><div class="t" style="left:1346.20px;top:533.36px;font-size:18px;color:#c4c4c4;font-weight:400;transform:scaleY(1.1);transform-origin:0 14.04px;">None</div><div class="t" style="left:1479.70px;top:533.36px;font-size:18px;color:#c4c4c4;font-weight:400;transform:scaleY(1.1);transform-origin:0 14.04px;">True</div><div class="t" style="left:1566.70px;top:533.36px;font-size:18px;color:#c4c4c4;font-weight:400;width:31.90px;height:23.4px;overflow:hidden;transform:scaleY(1.1);transform-origin:0 14.04px;">Blueprint</div><div style="left:9.3px;top:556.0px;width:1589.5px;height:29.0px;background:#2a2a2a;"></div><svg style="left:21.3px;top:559.0px;" width="13" height="27" viewBox="0 0 13 27"><ellipse cx="6.25" cy="1.4" rx="6.3" ry="1.25" fill="#a6a6a6"/><ellipse cx="6.25" cy="6.6" rx="6.3" ry="1.25" fill="#a6a6a6"/><ellipse cx="6.25" cy="11.8" rx="6.3" ry="1.25" fill="#a6a6a6"/><ellipse cx="6.25" cy="17.0" rx="6.3" ry="1.25" fill="#a6a6a6"/><ellipse cx="6.25" cy="22.2" rx="6.3" ry="1.25" fill="#a6a6a6"/></svg><svg style="left:42.9px;top:559.0px;" width="13" height="27" viewBox="0 0 13 27"><ellipse cx="6.25" cy="1.4" rx="6.3" ry="1.25" fill="#a6a6a6"/><ellipse cx="6.25" cy="6.6" rx="6.3" ry="1.25" fill="#a6a6a6"/><ellipse cx="6.25" cy="11.8" rx="6.3" ry="1.25" fill="#a6a6a6"/><ellipse cx="6.25" cy="17.0" rx="6.3" ry="1.25" fill="#a6a6a6"/><ellipse cx="6.25" cy="22.2" rx="6.3" ry="1.25" fill="#a6a6a6"/></svg><div class="t" style="left:73.40px;top:561.09px;font-size:19.5px;color:#c4c4c4;font-weight:400;transform:scaleY(1.1);transform-origin:0 15.31px;">11</div><div class="t" style="left:108.70px;top:560.67px;font-size:20px;color:#c4c4c4;font-weight:400;width:199.60px;height:26.0px;overflow:hidden;transform:scaleY(1.1);transform-origin:0 15.73px;">Scrap_Cardboard_Large</div><div class="t" style="left:319.40px;top:562.36px;font-size:18px;color:#c4c4c4;font-weight:400;width:210.60px;height:23.4px;overflow:hidden;transform:scaleY(1.1);transform-origin:0 14.04px;">Large Scrap Cardboard</div><div class="t" style="left:536.00px;top:562.36px;font-size:18px;color:#c4c4c4;font-weight:400;width:589.00px;height:23.4px;overflow:hidden;transform:scaleY(1.1);transform-origin:0 14.04px;">A large piece of damaged cardboard, could be used to construct some sort of</div><div class="t" style="left:1136.10px;top:562.36px;font-size:18px;color:#c4c4c4;font-weight:400;transform:scaleY(1.1);transform-origin:0 14.04px;">0.500000</div><div class="t" style="left:1229.20px;top:562.36px;font-size:18px;color:#c4c4c4;font-weight:400;transform:scaleY(1.1);transform-origin:0 14.04px;">Quest Item</div><div class="t" style="left:1346.20px;top:562.36px;font-size:18px;color:#c4c4c4;font-weight:400;transform:scaleY(1.1);transform-origin:0 14.04px;">None</div><div class="t" style="left:1479.70px;top:562.36px;font-size:18px;color:#c4c4c4;font-weight:400;transform:scaleY(1.1);transform-origin:0 14.04px;">False</div><div class="t" style="left:1566.70px;top:562.36px;font-size:18px;color:#c4c4c4;font-weight:400;width:31.90px;height:23.4px;overflow:hidden;transform:scaleY(1.1);transform-origin:0 14.04px;">None</div><div style="left:9.3px;top:585.0px;width:1589.5px;height:29.0px;background:#1b1b1b;"></div><svg style="left:21.3px;top:588.0px;" width="13" height="27" viewBox="0 0 13 27"><ellipse cx="6.25" cy="1.4" rx="6.3" ry="1.25" fill="#a6a6a6"/><ellipse cx="6.25" cy="6.6" rx="6.3" ry="1.25" fill="#a6a6a6"/><ellipse cx="6.25" cy="11.8" rx="6.3" ry="1.25" fill="#a6a6a6"/><ellipse cx="6.25" cy="17.0" rx="6.3" ry="1.25" fill="#a6a6a6"/><ellipse cx="6.25" cy="22.2" rx="6.3" ry="1.25" fill="#a6a6a6"/></svg><svg style="left:42.9px;top:588.0px;" width="13" height="27" viewBox="0 0 13 27"><ellipse cx="6.25" cy="1.4" rx="6.3" ry="1.25" fill="#a6a6a6"/><ellipse cx="6.25" cy="6.6" rx="6.3" ry="1.25" fill="#a6a6a6"/><ellipse cx="6.25" cy="11.8" rx="6.3" ry="1.25" fill="#a6a6a6"/><ellipse cx="6.25" cy="17.0" rx="6.3" ry="1.25" fill="#a6a6a6"/><ellipse cx="6.25" cy="22.2" rx="6.3" ry="1.25" fill="#a6a6a6"/></svg><div class="t" style="left:73.40px;top:590.09px;font-size:19.5px;color:#c4c4c4;font-weight:400;transform:scaleY(1.1);transform-origin:0 15.31px;">12</div><div class="t" style="left:108.70px;top:589.67px;font-size:20px;color:#c4c4c4;font-weight:400;width:199.60px;height:26.0px;overflow:hidden;transform:scaleY(1.1);transform-origin:0 15.73px;">Scrap_Cardboard_Small</div><div class="t" style="left:319.40px;top:591.36px;font-size:18px;color:#c4c4c4;font-weight:400;width:210.60px;height:23.4px;overflow:hidden;transform:scaleY(1.1);transform-origin:0 14.04px;">Small Scrap Cardboard</div><div class="t" style="left:536.00px;top:591.36px;font-size:18px;color:#c4c4c4;font-weight:400;width:589.00px;height:23.4px;overflow:hidden;transform:scaleY(1.1);transform-origin:0 14.04px;">A small piece of damaged cardboard, could be used to construct some sort of</div><div class="t" style="left:1136.10px;top:591.36px;font-size:18px;color:#c4c4c4;font-weight:400;transform:scaleY(1.1);transform-origin:0 14.04px;">0.200000</div><div class="t" style="left:1229.20px;top:591.36px;font-size:18px;color:#c4c4c4;font-weight:400;transform:scaleY(1.1);transform-origin:0 14.04px;">Quest Item</div><div class="t" style="left:1346.20px;top:591.36px;font-size:18px;color:#c4c4c4;font-weight:400;transform:scaleY(1.1);transform-origin:0 14.04px;">None</div><div class="t" style="left:1479.70px;top:591.36px;font-size:18px;color:#c4c4c4;font-weight:400;transform:scaleY(1.1);transform-origin:0 14.04px;">False</div><div class="t" style="left:1566.70px;top:591.36px;font-size:18px;color:#c4c4c4;font-weight:400;width:31.90px;height:23.4px;overflow:hidden;transform:scaleY(1.1);transform-origin:0 14.04px;">None</div><div style="left:9.3px;top:614.0px;width:1589.5px;height:29.0px;background:#2a2a2a;"></div><svg style="left:21.3px;top:617.0px;" width="13" height="27" viewBox="0 0 13 27"><ellipse cx="6.25" cy="1.4" rx="6.3" ry="1.25" fill="#a6a6a6"/><ellipse cx="6.25" cy="6.6" rx="6.3" ry="1.25" fill="#a6a6a6"/><ellipse cx="6.25" cy="11.8" rx="6.3" ry="1.25" fill="#a6a6a6"/><ellipse cx="6.25" cy="17.0" rx="6.3" ry="1.25" fill="#a6a6a6"/><ellipse cx="6.25" cy="22.2" rx="6.3" ry="1.25" fill="#a6a6a6"/></svg><svg style="left:42.9px;top:617.0px;" width="13" height="27" viewBox="0 0 13 27"><ellipse cx="6.25" cy="1.4" rx="6.3" ry="1.25" fill="#a6a6a6"/><ellipse cx="6.25" cy="6.6" rx="6.3" ry="1.25" fill="#a6a6a6"/><ellipse cx="6.25" cy="11.8" rx="6.3" ry="1.25" fill="#a6a6a6"/><ellipse cx="6.25" cy="17.0" rx="6.3" ry="1.25" fill="#a6a6a6"/><ellipse cx="6.25" cy="22.2" rx="6.3" ry="1.25" fill="#a6a6a6"/></svg><div class="t" style="left:73.40px;top:619.09px;font-size:19.5px;color:#c4c4c4;font-weight:400;transform:scaleY(1.1);transform-origin:0 15.31px;">13</div><div class="t" style="left:108.70px;top:618.67px;font-size:20px;color:#c4c4c4;font-weight:400;width:199.60px;height:26.0px;overflow:hidden;transform:scaleY(1.1);transform-origin:0 15.73px;">Blueprint</div><div class="t" style="left:319.40px;top:620.36px;font-size:18px;color:#c4c4c4;font-weight:400;width:210.60px;height:23.4px;overflow:hidden;transform:scaleY(1.1);transform-origin:0 14.04px;">Blueprint</div><div class="t" style="left:536.00px;top:620.36px;font-size:18px;color:#c4c4c4;font-weight:400;width:589.00px;height:23.4px;overflow:hidden;transform:scaleY(1.1);transform-origin:0 14.04px;">Used to construct buildings</div><div class="t" style="left:1136.10px;top:620.36px;font-size:18px;color:#c4c4c4;font-weight:400;transform:scaleY(1.1);transform-origin:0 14.04px;">0.100000</div><div class="t" style="left:1229.20px;top:620.36px;font-size:18px;color:#c4c4c4;font-weight:400;transform:scaleY(1.1);transform-origin:0 14.04px;">Container</div><div class="t" style="left:1346.20px;top:620.36px;font-size:18px;color:#c4c4c4;font-weight:400;transform:scaleY(1.1);transform-origin:0 14.04px;">None</div><div class="t" style="left:1479.70px;top:620.36px;font-size:18px;color:#c4c4c4;font-weight:400;transform:scaleY(1.1);transform-origin:0 14.04px;">True</div><div class="t" style="left:1566.70px;top:620.36px;font-size:18px;color:#c4c4c4;font-weight:400;width:31.90px;height:23.4px;overflow:hidden;transform:scaleY(1.1);transform-origin:0 14.04px;">Blueprint</div><div style="left:9.3px;top:643.0px;width:1589.5px;height:29.0px;background:#1b1b1b;"></div><svg style="left:21.3px;top:646.0px;" width="13" height="27" viewBox="0 0 13 27"><ellipse cx="6.25" cy="1.4" rx="6.3" ry="1.25" fill="#a6a6a6"/><ellipse cx="6.25" cy="6.6" rx="6.3" ry="1.25" fill="#a6a6a6"/><ellipse cx="6.25" cy="11.8" rx="6.3" ry="1.25" fill="#a6a6a6"/><ellipse cx="6.25" cy="17.0" rx="6.3" ry="1.25" fill="#a6a6a6"/><ellipse cx="6.25" cy="22.2" rx="6.3" ry="1.25" fill="#a6a6a6"/></svg><svg style="left:42.9px;top:646.0px;" width="13" height="27" viewBox="0 0 13 27"><ellipse cx="6.25" cy="1.4" rx="6.3" ry="1.25" fill="#a6a6a6"/><ellipse cx="6.25" cy="6.6" rx="6.3" ry="1.25" fill="#a6a6a6"/><ellipse cx="6.25" cy="11.8" rx="6.3" ry="1.25" fill="#a6a6a6"/><ellipse cx="6.25" cy="17.0" rx="6.3" ry="1.25" fill="#a6a6a6"/><ellipse cx="6.25" cy="22.2" rx="6.3" ry="1.25" fill="#a6a6a6"/></svg><div class="t" style="left:73.40px;top:648.09px;font-size:19.5px;color:#c4c4c4;font-weight:400;transform:scaleY(1.1);transform-origin:0 15.31px;">14</div><div class="t" style="left:108.70px;top:647.67px;font-size:20px;color:#c4c4c4;font-weight:400;width:199.60px;height:26.0px;overflow:hidden;transform:scaleY(1.1);transform-origin:0 15.73px;">Hammer</div><div class="t" style="left:319.40px;top:649.36px;font-size:18px;color:#c4c4c4;font-weight:400;width:210.60px;height:23.4px;overflow:hidden;transform:scaleY(1.1);transform-origin:0 14.04px;">Hammer</div><div class="t" style="left:536.00px;top:649.36px;font-size:18px;color:#c4c4c4;font-weight:400;width:589.00px;height:23.4px;overflow:hidden;transform:scaleY(1.1);transform-origin:0 14.04px;">This is used to upgrade, Repair and demolish building parts</div><div class="t" style="left:1136.10px;top:649.36px;font-size:18px;color:#c4c4c4;font-weight:400;transform:scaleY(1.1);transform-origin:0 14.04px;">0.400000</div><div class="t" style="left:1229.20px;top:649.36px;font-size:18px;color:#c4c4c4;font-weight:400;transform:scaleY(1.1);transform-origin:0 14.04px;">Equipment</div><div class="t" style="left:1346.20px;top:649.36px;font-size:18px;color:#c4c4c4;font-weight:400;transform:scaleY(1.1);transform-origin:0 14.04px;">None</div><div class="t" style="left:1479.70px;top:649.36px;font-size:18px;color:#c4c4c4;font-weight:400;transform:scaleY(1.1);transform-origin:0 14.04px;">True</div><div class="t" style="left:1566.70px;top:649.36px;font-size:18px;color:#c4c4c4;font-weight:400;width:31.90px;height:23.4px;overflow:hidden;transform:scaleY(1.1);transform-origin:0 14.04px;">Blueprint</div><div style="left:9.3px;top:672.0px;width:1589.5px;height:29.0px;background:#2a2a2a;"></div><svg style="left:21.3px;top:675.0px;" width="13" height="27" viewBox="0 0 13 27"><ellipse cx="6.25" cy="1.4" rx="6.3" ry="1.25" fill="#a6a6a6"/><ellipse cx="6.25" cy="6.6" rx="6.3" ry="1.25" fill="#a6a6a6"/><ellipse cx="6.25" cy="11.8" rx="6.3" ry="1.25" fill="#a6a6a6"/><ellipse cx="6.25" cy="17.0" rx="6.3" ry="1.25" fill="#a6a6a6"/><ellipse cx="6.25" cy="22.2" rx="6.3" ry="1.25" fill="#a6a6a6"/></svg><svg style="left:42.9px;top:675.0px;" width="13" height="27" viewBox="0 0 13 27"><ellipse cx="6.25" cy="1.4" rx="6.3" ry="1.25" fill="#a6a6a6"/><ellipse cx="6.25" cy="6.6" rx="6.3" ry="1.25" fill="#a6a6a6"/><ellipse cx="6.25" cy="11.8" rx="6.3" ry="1.25" fill="#a6a6a6"/><ellipse cx="6.25" cy="17.0" rx="6.3" ry="1.25" fill="#a6a6a6"/><ellipse cx="6.25" cy="22.2" rx="6.3" ry="1.25" fill="#a6a6a6"/></svg><div class="t" style="left:73.40px;top:677.09px;font-size:19.5px;color:#c4c4c4;font-weight:400;transform:scaleY(1.1);transform-origin:0 15.31px;">15</div><div class="t" style="left:108.70px;top:676.67px;font-size:20px;color:#c4c4c4;font-weight:400;width:199.60px;height:26.0px;overflow:hidden;transform:scaleY(1.1);transform-origin:0 15.73px;">M4A4</div><div class="t" style="left:319.40px;top:678.36px;font-size:18px;color:#c4c4c4;font-weight:400;width:210.60px;height:23.4px;overflow:hidden;transform:scaleY(1.1);transform-origin:0 14.04px;">M4A4</div><div class="t" style="left:536.00px;top:678.36px;font-size:18px;color:#c4c4c4;font-weight:400;width:589.00px;height:23.4px;overflow:hidden;transform:scaleY(1.1);transform-origin:0 14.04px;">The M4A4 is based on the Mk. 18 Mod 0 carbine, fitted with an ARMS#40 flip</div><div class="t" style="left:1136.10px;top:678.36px;font-size:18px;color:#c4c4c4;font-weight:400;transform:scaleY(1.1);transform-origin:0 14.04px;">2.000000</div><div class="t" style="left:1229.20px;top:678.36px;font-size:18px;color:#c4c4c4;font-weight:400;transform:scaleY(1.1);transform-origin:0 14.04px;">Equipment</div><div class="t" style="left:1346.20px;top:678.36px;font-size:18px;color:#c4c4c4;font-weight:400;transform:scaleY(1.1);transform-origin:0 14.04px;">None</div><div class="t" style="left:1479.70px;top:678.36px;font-size:18px;color:#c4c4c4;font-weight:400;transform:scaleY(1.1);transform-origin:0 14.04px;">True</div><div class="t" style="left:1566.70px;top:678.36px;font-size:18px;color:#c4c4c4;font-weight:400;width:31.90px;height:23.4px;overflow:hidden;transform:scaleY(1.1);transform-origin:0 14.04px;">Blueprint</div><div style="left:9.3px;top:701.0px;width:1589.5px;height:29.0px;background:#1b1b1b;"></div><svg style="left:21.3px;top:704.0px;" width="13" height="27" viewBox="0 0 13 27"><ellipse cx="6.25" cy="1.4" rx="6.3" ry="1.25" fill="#a6a6a6"/><ellipse cx="6.25" cy="6.6" rx="6.3" ry="1.25" fill="#a6a6a6"/><ellipse cx="6.25" cy="11.8" rx="6.3" ry="1.25" fill="#a6a6a6"/><ellipse cx="6.25" cy="17.0" rx="6.3" ry="1.25" fill="#a6a6a6"/><ellipse cx="6.25" cy="22.2" rx="6.3" ry="1.25" fill="#a6a6a6"/></svg><svg style="left:42.9px;top:704.0px;" width="13" height="27" viewBox="0 0 13 27"><ellipse cx="6.25" cy="1.4" rx="6.3" ry="1.25" fill="#a6a6a6"/><ellipse cx="6.25" cy="6.6" rx="6.3" ry="1.25" fill="#a6a6a6"/><ellipse cx="6.25" cy="11.8" rx="6.3" ry="1.25" fill="#a6a6a6"/><ellipse cx="6.25" cy="17.0" rx="6.3" ry="1.25" fill="#a6a6a6"/><ellipse cx="6.25" cy="22.2" rx="6.3" ry="1.25" fill="#a6a6a6"/></svg><div class="t" style="left:73.40px;top:706.09px;font-size:19.5px;color:#c4c4c4;font-weight:400;transform:scaleY(1.1);transform-origin:0 15.31px;">16</div><div class="t" style="left:108.70px;top:705.67px;font-size:20px;color:#c4c4c4;font-weight:400;width:199.60px;height:26.0px;overflow:hidden;transform:scaleY(1.1);transform-origin:0 15.73px;">P1911</div><div class="t" style="left:319.40px;top:707.36px;font-size:18px;color:#c4c4c4;font-weight:400;width:210.60px;height:23.4px;overflow:hidden;transform:scaleY(1.1);transform-origin:0 14.04px;">P1911</div><div class="t" style="left:536.00px;top:707.36px;font-size:18px;color:#c4c4c4;font-weight:400;width:589.00px;height:23.4px;overflow:hidden;transform:scaleY(1.1);transform-origin:0 14.04px;">he P1911 is based on the M1911 Pistol design from designer John Browning</div><div class="t" style="left:1136.10px;top:707.36px;font-size:18px;color:#c4c4c4;font-weight:400;transform:scaleY(1.1);transform-origin:0 14.04px;">2.000000</div><div class="t" style="left:1229.20px;top:707.36px;font-size:18px;color:#c4c4c4;font-weight:400;transform:scaleY(1.1);transform-origin:0 14.04px;">Equipment</div><div class="t" style="left:1346.20px;top:707.36px;font-size:18px;color:#c4c4c4;font-weight:400;transform:scaleY(1.1);transform-origin:0 14.04px;">None</div><div class="t" style="left:1479.70px;top:707.36px;font-size:18px;color:#c4c4c4;font-weight:400;transform:scaleY(1.1);transform-origin:0 14.04px;">True</div><div class="t" style="left:1566.70px;top:707.36px;font-size:18px;color:#c4c4c4;font-weight:400;width:31.90px;height:23.4px;overflow:hidden;transform:scaleY(1.1);transform-origin:0 14.04px;">Blueprint</div><div style="left:9.3px;top:730.0px;width:1589.5px;height:29.0px;background:#2a2a2a;"></div><svg style="left:21.3px;top:733.0px;" width="13" height="27" viewBox="0 0 13 27"><ellipse cx="6.25" cy="1.4" rx="6.3" ry="1.25" fill="#a6a6a6"/><ellipse cx="6.25" cy="6.6" rx="6.3" ry="1.25" fill="#a6a6a6"/><ellipse cx="6.25" cy="11.8" rx="6.3" ry="1.25" fill="#a6a6a6"/><ellipse cx="6.25" cy="17.0" rx="6.3" ry="1.25" fill="#a6a6a6"/><ellipse cx="6.25" cy="22.2" rx="6.3" ry="1.25" fill="#a6a6a6"/></svg><svg style="left:42.9px;top:733.0px;" width="13" height="27" viewBox="0 0 13 27"><ellipse cx="6.25" cy="1.4" rx="6.3" ry="1.25" fill="#a6a6a6"/><ellipse cx="6.25" cy="6.6" rx="6.3" ry="1.25" fill="#a6a6a6"/><ellipse cx="6.25" cy="11.8" rx="6.3" ry="1.25" fill="#a6a6a6"/><ellipse cx="6.25" cy="17.0" rx="6.3" ry="1.25" fill="#a6a6a6"/><ellipse cx="6.25" cy="22.2" rx="6.3" ry="1.25" fill="#a6a6a6"/></svg><div class="t" style="left:73.40px;top:735.09px;font-size:19.5px;color:#c4c4c4;font-weight:400;transform:scaleY(1.1);transform-origin:0 15.31px;">17</div><div class="t" style="left:108.70px;top:734.67px;font-size:20px;color:#c4c4c4;font-weight:400;width:199.60px;height:26.0px;overflow:hidden;transform:scaleY(1.1);transform-origin:0 15.73px;">M4A4_Mag</div><div class="t" style="left:319.40px;top:736.36px;font-size:18px;color:#c4c4c4;font-weight:400;width:210.60px;height:23.4px;overflow:hidden;transform:scaleY(1.1);transform-origin:0 14.04px;">M4A4 Magazine</div><div class="t" style="left:536.00px;top:736.36px;font-size:18px;color:#c4c4c4;font-weight:400;width:589.00px;height:23.4px;overflow:hidden;transform:scaleY(1.1);transform-origin:0 14.04px;">M4A1 Magazine holds 30 rounds of 5.56mm ammo</div><div class="t" style="left:1136.10px;top:736.36px;font-size:18px;color:#c4c4c4;font-weight:400;transform:scaleY(1.1);transform-origin:0 14.04px;">0.100000</div><div class="t" style="left:1229.20px;top:736.36px;font-size:18px;color:#c4c4c4;font-weight:400;transform:scaleY(1.1);transform-origin:0 14.04px;">Attachment</div><div class="t" style="left:1346.20px;top:736.36px;font-size:18px;color:#c4c4c4;font-weight:400;transform:scaleY(1.1);transform-origin:0 14.04px;">None</div><div class="t" style="left:1479.70px;top:736.36px;font-size:18px;color:#c4c4c4;font-weight:400;transform:scaleY(1.1);transform-origin:0 14.04px;">False</div><div class="t" style="left:1566.70px;top:736.36px;font-size:18px;color:#c4c4c4;font-weight:400;width:31.90px;height:23.4px;overflow:hidden;transform:scaleY(1.1);transform-origin:0 14.04px;">None</div><div style="left:9.3px;top:759.0px;width:1589.5px;height:29.0px;background:#1b1b1b;"></div><svg style="left:21.3px;top:762.0px;" width="13" height="27" viewBox="0 0 13 27"><ellipse cx="6.25" cy="1.4" rx="6.3" ry="1.25" fill="#a6a6a6"/><ellipse cx="6.25" cy="6.6" rx="6.3" ry="1.25" fill="#a6a6a6"/><ellipse cx="6.25" cy="11.8" rx="6.3" ry="1.25" fill="#a6a6a6"/><ellipse cx="6.25" cy="17.0" rx="6.3" ry="1.25" fill="#a6a6a6"/><ellipse cx="6.25" cy="22.2" rx="6.3" ry="1.25" fill="#a6a6a6"/></svg><svg style="left:42.9px;top:762.0px;" width="13" height="27" viewBox="0 0 13 27"><ellipse cx="6.25" cy="1.4" rx="6.3" ry="1.25" fill="#a6a6a6"/><ellipse cx="6.25" cy="6.6" rx="6.3" ry="1.25" fill="#a6a6a6"/><ellipse cx="6.25" cy="11.8" rx="6.3" ry="1.25" fill="#a6a6a6"/><ellipse cx="6.25" cy="17.0" rx="6.3" ry="1.25" fill="#a6a6a6"/><ellipse cx="6.25" cy="22.2" rx="6.3" ry="1.25" fill="#a6a6a6"/></svg><div class="t" style="left:73.40px;top:764.09px;font-size:19.5px;color:#c4c4c4;font-weight:400;transform:scaleY(1.1);transform-origin:0 15.31px;">18</div><div class="t" style="left:108.70px;top:763.67px;font-size:20px;color:#c4c4c4;font-weight:400;width:199.60px;height:26.0px;overflow:hidden;transform:scaleY(1.1);transform-origin:0 15.73px;">Reddot_Sight</div><div class="t" style="left:319.40px;top:765.36px;font-size:18px;color:#c4c4c4;font-weight:400;width:210.60px;height:23.4px;overflow:hidden;transform:scaleY(1.1);transform-origin:0 14.04px;">Reddot Sight</div><div class="t" style="left:536.00px;top:765.36px;font-size:18px;color:#c4c4c4;font-weight:400;width:589.00px;height:23.4px;overflow:hidden;transform:scaleY(1.1);transform-origin:0 14.04px;">A universal sight desighed for all modern weapons, light weight and easy to use</div><div class="t" style="left:1136.10px;top:765.36px;font-size:18px;color:#c4c4c4;font-weight:400;transform:scaleY(1.1);transform-origin:0 14.04px;">0.500000</div><div class="t" style="left:1229.20px;top:765.36px;font-size:18px;color:#c4c4c4;font-weight:400;transform:scaleY(1.1);transform-origin:0 14.04px;">Attachment</div><div class="t" style="left:1346.20px;top:765.36px;font-size:18px;color:#c4c4c4;font-weight:400;transform:scaleY(1.1);transform-origin:0 14.04px;">None</div><div class="t" style="left:1479.70px;top:765.36px;font-size:18px;color:#c4c4c4;font-weight:400;transform:scaleY(1.1);transform-origin:0 14.04px;">False</div><div class="t" style="left:1566.70px;top:765.36px;font-size:18px;color:#c4c4c4;font-weight:400;width:31.90px;height:23.4px;overflow:hidden;transform:scaleY(1.1);transform-origin:0 14.04px;">None</div><div style="left:9.3px;top:788.0px;width:1589.5px;height:29.0px;background:#2a2a2a;"></div><svg style="left:21.3px;top:791.0px;" width="13" height="27" viewBox="0 0 13 27"><ellipse cx="6.25" cy="1.4" rx="6.3" ry="1.25" fill="#a6a6a6"/><ellipse cx="6.25" cy="6.6" rx="6.3" ry="1.25" fill="#a6a6a6"/><ellipse cx="6.25" cy="11.8" rx="6.3" ry="1.25" fill="#a6a6a6"/><ellipse cx="6.25" cy="17.0" rx="6.3" ry="1.25" fill="#a6a6a6"/><ellipse cx="6.25" cy="22.2" rx="6.3" ry="1.25" fill="#a6a6a6"/></svg><svg style="left:42.9px;top:791.0px;" width="13" height="27" viewBox="0 0 13 27"><ellipse cx="6.25" cy="1.4" rx="6.3" ry="1.25" fill="#a6a6a6"/><ellipse cx="6.25" cy="6.6" rx="6.3" ry="1.25" fill="#a6a6a6"/><ellipse cx="6.25" cy="11.8" rx="6.3" ry="1.25" fill="#a6a6a6"/><ellipse cx="6.25" cy="17.0" rx="6.3" ry="1.25" fill="#a6a6a6"/><ellipse cx="6.25" cy="22.2" rx="6.3" ry="1.25" fill="#a6a6a6"/></svg><div class="t" style="left:73.40px;top:793.09px;font-size:19.5px;color:#c4c4c4;font-weight:400;transform:scaleY(1.1);transform-origin:0 15.31px;">19</div><div class="t" style="left:108.70px;top:792.67px;font-size:20px;color:#c4c4c4;font-weight:400;width:199.60px;height:26.0px;overflow:hidden;transform:scaleY(1.1);transform-origin:0 15.73px;">M4A4_Stock</div><div class="t" style="left:319.40px;top:794.36px;font-size:18px;color:#c4c4c4;font-weight:400;width:210.60px;height:23.4px;overflow:hidden;transform:scaleY(1.1);transform-origin:0 14.04px;">M4A4 Stock</div><div class="t" style="left:536.00px;top:794.36px;font-size:18px;color:#c4c4c4;font-weight:400;width:589.00px;height:23.4px;overflow:hidden;transform:scaleY(1.1);transform-origin:0 14.04px;">This is the factory fitted butt stock designed to be light and hard waring</div><div class="t" style="left:1136.10px;top:794.36px;font-size:18px;color:#c4c4c4;font-weight:400;transform:scaleY(1.1);transform-origin:0 14.04px;">0.200000</div><div class="t" style="left:1229.20px;top:794.36px;font-size:18px;color:#c4c4c4;font-weight:400;transform:scaleY(1.1);transform-origin:0 14.04px;">Attachment</div><div class="t" style="left:1346.20px;top:794.36px;font-size:18px;color:#c4c4c4;font-weight:400;transform:scaleY(1.1);transform-origin:0 14.04px;">None</div><div class="t" style="left:1479.70px;top:794.36px;font-size:18px;color:#c4c4c4;font-weight:400;transform:scaleY(1.1);transform-origin:0 14.04px;">False</div><div class="t" style="left:1566.70px;top:794.36px;font-size:18px;color:#c4c4c4;font-weight:400;width:31.90px;height:23.4px;overflow:hidden;transform:scaleY(1.1);transform-origin:0 14.04px;">None</div><div style="left:9.3px;top:817.0px;width:1589.5px;height:29.0px;background:#1b1b1b;"></div><svg style="left:21.3px;top:820.0px;" width="13" height="27" viewBox="0 0 13 27"><ellipse cx="6.25" cy="1.4" rx="6.3" ry="1.25" fill="#a6a6a6"/><ellipse cx="6.25" cy="6.6" rx="6.3" ry="1.25" fill="#a6a6a6"/><ellipse cx="6.25" cy="11.8" rx="6.3" ry="1.25" fill="#a6a6a6"/><ellipse cx="6.25" cy="17.0" rx="6.3" ry="1.25" fill="#a6a6a6"/><ellipse cx="6.25" cy="22.2" rx="6.3" ry="1.25" fill="#a6a6a6"/></svg><svg style="left:42.9px;top:820.0px;" width="13" height="27" viewBox="0 0 13 27"><ellipse cx="6.25" cy="1.4" rx="6.3" ry="1.25" fill="#a6a6a6"/><ellipse cx="6.25" cy="6.6" rx="6.3" ry="1.25" fill="#a6a6a6"/><ellipse cx="6.25" cy="11.8" rx="6.3" ry="1.25" fill="#a6a6a6"/><ellipse cx="6.25" cy="17.0" rx="6.3" ry="1.25" fill="#a6a6a6"/><ellipse cx="6.25" cy="22.2" rx="6.3" ry="1.25" fill="#a6a6a6"/></svg><div class="t" style="left:73.40px;top:822.09px;font-size:19.5px;color:#c4c4c4;font-weight:400;transform:scaleY(1.1);transform-origin:0 15.31px;">20</div><div class="t" style="left:108.70px;top:821.67px;font-size:20px;color:#c4c4c4;font-weight:400;width:199.60px;height:26.0px;overflow:hidden;transform:scaleY(1.1);transform-origin:0 15.73px;">Interact_Time_Demo</div><div class="t" style="left:319.40px;top:823.36px;font-size:18px;color:#c4c4c4;font-weight:400;width:210.60px;height:23.4px;overflow:hidden;transform:scaleY(1.1);transform-origin:0 14.04px;">Stone</div><div class="t" style="left:536.00px;top:823.36px;font-size:18px;color:#c4c4c4;font-weight:400;width:589.00px;height:23.4px;overflow:hidden;transform:scaleY(1.1);transform-origin:0 14.04px;">This is a demo of the interact time on an item</div><div class="t" style="left:1136.10px;top:823.36px;font-size:18px;color:#c4c4c4;font-weight:400;transform:scaleY(1.1);transform-origin:0 14.04px;">0.100000</div><div class="t" style="left:1229.20px;top:823.36px;font-size:18px;color:#c4c4c4;font-weight:400;transform:scaleY(1.1);transform-origin:0 14.04px;">Crafting</div><div class="t" style="left:1346.20px;top:823.36px;font-size:18px;color:#c4c4c4;font-weight:400;transform:scaleY(1.1);transform-origin:0 14.04px;">None</div><div class="t" style="left:1479.70px;top:823.36px;font-size:18px;color:#c4c4c4;font-weight:400;transform:scaleY(1.1);transform-origin:0 14.04px;">False</div><div class="t" style="left:1566.70px;top:823.36px;font-size:18px;color:#c4c4c4;font-weight:400;width:31.90px;height:23.4px;overflow:hidden;transform:scaleY(1.1);transform-origin:0 14.04px;">None</div><div style="left:9.3px;top:846.0px;width:1589.5px;height:29.0px;background:#2a2a2a;"></div><svg style="left:21.3px;top:849.0px;" width="13" height="27" viewBox="0 0 13 27"><ellipse cx="6.25" cy="1.4" rx="6.3" ry="1.25" fill="#a6a6a6"/><ellipse cx="6.25" cy="6.6" rx="6.3" ry="1.25" fill="#a6a6a6"/><ellipse cx="6.25" cy="11.8" rx="6.3" ry="1.25" fill="#a6a6a6"/><ellipse cx="6.25" cy="17.0" rx="6.3" ry="1.25" fill="#a6a6a6"/><ellipse cx="6.25" cy="22.2" rx="6.3" ry="1.25" fill="#a6a6a6"/></svg><svg style="left:42.9px;top:849.0px;" width="13" height="27" viewBox="0 0 13 27"><ellipse cx="6.25" cy="1.4" rx="6.3" ry="1.25" fill="#a6a6a6"/><ellipse cx="6.25" cy="6.6" rx="6.3" ry="1.25" fill="#a6a6a6"/><ellipse cx="6.25" cy="11.8" rx="6.3" ry="1.25" fill="#a6a6a6"/><ellipse cx="6.25" cy="17.0" rx="6.3" ry="1.25" fill="#a6a6a6"/><ellipse cx="6.25" cy="22.2" rx="6.3" ry="1.25" fill="#a6a6a6"/></svg><div class="t" style="left:73.40px;top:851.09px;font-size:19.5px;color:#c4c4c4;font-weight:400;transform:scaleY(1.1);transform-origin:0 15.31px;">21</div><div class="t" style="left:108.70px;top:850.67px;font-size:20px;color:#c4c4c4;font-weight:400;width:199.60px;height:26.0px;overflow:hidden;transform:scaleY(1.1);transform-origin:0 15.73px;">5.56mm_AmmoBox</div><div class="t" style="left:319.40px;top:852.36px;font-size:18px;color:#c4c4c4;font-weight:400;width:210.60px;height:23.4px;overflow:hidden;transform:scaleY(1.1);transform-origin:0 14.04px;">Box of 5.56mm Rounds</div><div class="t" style="left:536.00px;top:852.36px;font-size:18px;color:#c4c4c4;font-weight:400;width:589.00px;height:23.4px;overflow:hidden;transform:scaleY(1.1);transform-origin:0 14.04px;">It was developed for the American AR-15 rifle, later the M16 and several variants</div><div class="t" style="left:1136.10px;top:852.36px;font-size:18px;color:#c4c4c4;font-weight:400;transform:scaleY(1.1);transform-origin:0 14.04px;">0.300000</div><div class="t" style="left:1229.20px;top:852.36px;font-size:18px;color:#c4c4c4;font-weight:400;transform:scaleY(1.1);transform-origin:0 14.04px;">Container</div><div class="t" style="left:1346.20px;top:852.36px;font-size:18px;color:#c4c4c4;font-weight:400;transform:scaleY(1.1);transform-origin:0 14.04px;">None</div><div class="t" style="left:1479.70px;top:852.36px;font-size:18px;color:#c4c4c4;font-weight:400;transform:scaleY(1.1);transform-origin:0 14.04px;">False</div><div class="t" style="left:1566.70px;top:852.36px;font-size:18px;color:#c4c4c4;font-weight:400;width:31.90px;height:23.4px;overflow:hidden;transform:scaleY(1.1);transform-origin:0 14.04px;">None</div><div style="left:9.3px;top:875.0px;width:1589.5px;height:29.0px;background:#1b1b1b;"></div><svg style="left:21.3px;top:878.0px;" width="13" height="27" viewBox="0 0 13 27"><ellipse cx="6.25" cy="1.4" rx="6.3" ry="1.25" fill="#a6a6a6"/><ellipse cx="6.25" cy="6.6" rx="6.3" ry="1.25" fill="#a6a6a6"/><ellipse cx="6.25" cy="11.8" rx="6.3" ry="1.25" fill="#a6a6a6"/><ellipse cx="6.25" cy="17.0" rx="6.3" ry="1.25" fill="#a6a6a6"/><ellipse cx="6.25" cy="22.2" rx="6.3" ry="1.25" fill="#a6a6a6"/></svg><svg style="left:42.9px;top:878.0px;" width="13" height="27" viewBox="0 0 13 27"><ellipse cx="6.25" cy="1.4" rx="6.3" ry="1.25" fill="#a6a6a6"/><ellipse cx="6.25" cy="6.6" rx="6.3" ry="1.25" fill="#a6a6a6"/><ellipse cx="6.25" cy="11.8" rx="6.3" ry="1.25" fill="#a6a6a6"/><ellipse cx="6.25" cy="17.0" rx="6.3" ry="1.25" fill="#a6a6a6"/><ellipse cx="6.25" cy="22.2" rx="6.3" ry="1.25" fill="#a6a6a6"/></svg><div class="t" style="left:73.40px;top:880.09px;font-size:19.5px;color:#c4c4c4;font-weight:400;transform:scaleY(1.1);transform-origin:0 15.31px;">22</div><div class="t" style="left:108.70px;top:879.67px;font-size:20px;color:#c4c4c4;font-weight:400;width:199.60px;height:26.0px;overflow:hidden;transform:scaleY(1.1);transform-origin:0 15.73px;">9mm_AmmoBox</div><div class="t" style="left:319.40px;top:881.36px;font-size:18px;color:#c4c4c4;font-weight:400;width:210.60px;height:23.4px;overflow:hidden;transform:scaleY(1.1);transform-origin:0 14.04px;">Box of 9mm Rounds</div><div class="t" style="left:536.00px;top:881.36px;font-size:18px;color:#c4c4c4;font-weight:400;width:589.00px;height:23.4px;overflow:hidden;transform:scaleY(1.1);transform-origin:0 14.04px;">It was developed by Georg Luger for the German Luger P08 semi-automatic pistol</div><div class="t" style="left:1136.10px;top:881.36px;font-size:18px;color:#c4c4c4;font-weight:400;transform:scaleY(1.1);transform-origin:0 14.04px;">0.300000</div><div class="t" style="left:1229.20px;top:881.36px;font-size:18px;color:#c4c4c4;font-weight:400;transform:scaleY(1.1);transform-origin:0 14.04px;">Container</div><div class="t" style="left:1346.20px;top:881.36px;font-size:18px;color:#c4c4c4;font-weight:400;transform:scaleY(1.1);transform-origin:0 14.04px;">None</div><div class="t" style="left:1479.70px;top:881.36px;font-size:18px;color:#c4c4c4;font-weight:400;transform:scaleY(1.1);transform-origin:0 14.04px;">False</div><div class="t" style="left:1566.70px;top:881.36px;font-size:18px;color:#c4c4c4;font-weight:400;width:31.90px;height:23.4px;overflow:hidden;transform:scaleY(1.1);transform-origin:0 14.04px;">None</div><div style="left:9.3px;top:904.0px;width:1589.5px;height:29.0px;background:#2a2a2a;"></div><svg style="left:21.3px;top:907.0px;" width="13" height="27" viewBox="0 0 13 27"><ellipse cx="6.25" cy="1.4" rx="6.3" ry="1.25" fill="#a6a6a6"/><ellipse cx="6.25" cy="6.6" rx="6.3" ry="1.25" fill="#a6a6a6"/><ellipse cx="6.25" cy="11.8" rx="6.3" ry="1.25" fill="#a6a6a6"/><ellipse cx="6.25" cy="17.0" rx="6.3" ry="1.25" fill="#a6a6a6"/><ellipse cx="6.25" cy="22.2" rx="6.3" ry="1.25" fill="#a6a6a6"/></svg><svg style="left:42.9px;top:907.0px;" width="13" height="27" viewBox="0 0 13 27"><ellipse cx="6.25" cy="1.4" rx="6.3" ry="1.25" fill="#a6a6a6"/><ellipse cx="6.25" cy="6.6" rx="6.3" ry="1.25" fill="#a6a6a6"/><ellipse cx="6.25" cy="11.8" rx="6.3" ry="1.25" fill="#a6a6a6"/><ellipse cx="6.25" cy="17.0" rx="6.3" ry="1.25" fill="#a6a6a6"/><ellipse cx="6.25" cy="22.2" rx="6.3" ry="1.25" fill="#a6a6a6"/></svg><div class="t" style="left:73.40px;top:909.09px;font-size:19.5px;color:#c4c4c4;font-weight:400;transform:scaleY(1.1);transform-origin:0 15.31px;">23</div><div class="t" style="left:108.70px;top:908.67px;font-size:20px;color:#c4c4c4;font-weight:400;width:199.60px;height:26.0px;overflow:hidden;transform:scaleY(1.1);transform-origin:0 15.73px;">P1911_Mag</div><div class="t" style="left:319.40px;top:910.36px;font-size:18px;color:#c4c4c4;font-weight:400;width:210.60px;height:23.4px;overflow:hidden;transform:scaleY(1.1);transform-origin:0 14.04px;">P1911 Magazine</div><div class="t" style="left:536.00px;top:910.36px;font-size:18px;color:#c4c4c4;font-weight:400;width:589.00px;height:23.4px;overflow:hidden;transform:scaleY(1.1);transform-origin:0 14.04px;">A 12 round magazine desinghed</div><div class="t" style="left:1136.10px;top:910.36px;font-size:18px;color:#c4c4c4;font-weight:400;transform:scaleY(1.1);transform-origin:0 14.04px;">0.100000</div><div class="t" style="left:1229.20px;top:910.36px;font-size:18px;color:#c4c4c4;font-weight:400;transform:scaleY(1.1);transform-origin:0 14.04px;">Attachment</div><div class="t" style="left:1346.20px;top:910.36px;font-size:18px;color:#c4c4c4;font-weight:400;transform:scaleY(1.1);transform-origin:0 14.04px;">None</div><div class="t" style="left:1479.70px;top:910.36px;font-size:18px;color:#c4c4c4;font-weight:400;transform:scaleY(1.1);transform-origin:0 14.04px;">False</div><div class="t" style="left:1566.70px;top:910.36px;font-size:18px;color:#c4c4c4;font-weight:400;width:31.90px;height:23.4px;overflow:hidden;transform:scaleY(1.1);transform-origin:0 14.04px;">None</div><div style="left:9.3px;top:933.0px;width:1589.5px;height:29.0px;background:#1b1b1b;"></div><svg style="left:21.3px;top:936.0px;" width="13" height="27" viewBox="0 0 13 27"><ellipse cx="6.25" cy="1.4" rx="6.3" ry="1.25" fill="#a6a6a6"/><ellipse cx="6.25" cy="6.6" rx="6.3" ry="1.25" fill="#a6a6a6"/><ellipse cx="6.25" cy="11.8" rx="6.3" ry="1.25" fill="#a6a6a6"/><ellipse cx="6.25" cy="17.0" rx="6.3" ry="1.25" fill="#a6a6a6"/><ellipse cx="6.25" cy="22.2" rx="6.3" ry="1.25" fill="#a6a6a6"/></svg><svg style="left:42.9px;top:936.0px;" width="13" height="27" viewBox="0 0 13 27"><ellipse cx="6.25" cy="1.4" rx="6.3" ry="1.25" fill="#a6a6a6"/><ellipse cx="6.25" cy="6.6" rx="6.3" ry="1.25" fill="#a6a6a6"/><ellipse cx="6.25" cy="11.8" rx="6.3" ry="1.25" fill="#a6a6a6"/><ellipse cx="6.25" cy="17.0" rx="6.3" ry="1.25" fill="#a6a6a6"/><ellipse cx="6.25" cy="22.2" rx="6.3" ry="1.25" fill="#a6a6a6"/></svg><div class="t" style="left:73.40px;top:938.09px;font-size:19.5px;color:#c4c4c4;font-weight:400;transform:scaleY(1.1);transform-origin:0 15.31px;">24</div><div class="t" style="left:108.70px;top:937.67px;font-size:20px;color:#c4c4c4;font-weight:400;width:199.60px;height:26.0px;overflow:hidden;transform:scaleY(1.1);transform-origin:0 15.73px;">5.56mm_Round</div><div class="t" style="left:319.40px;top:939.36px;font-size:18px;color:#c4c4c4;font-weight:400;width:210.60px;height:23.4px;overflow:hidden;transform:scaleY(1.1);transform-origin:0 14.04px;">5.56mm Round</div><div class="t" style="left:536.00px;top:939.36px;font-size:18px;color:#c4c4c4;font-weight:400;width:589.00px;height:23.4px;overflow:hidden;transform:scaleY(1.1);transform-origin:0 14.04px;">A 5.56mm round desinged for the M4A4 rifle with high damage and good range</div><div class="t" style="left:1136.10px;top:939.36px;font-size:18px;color:#c4c4c4;font-weight:400;transform:scaleY(1.1);transform-origin:0 14.04px;">0.010000</div><div class="t" style="left:1229.20px;top:939.36px;font-size:18px;color:#c4c4c4;font-weight:400;transform:scaleY(1.1);transform-origin:0 14.04px;">Ammo</div><div class="t" style="left:1346.20px;top:939.36px;font-size:18px;color:#c4c4c4;font-weight:400;transform:scaleY(1.1);transform-origin:0 14.04px;">None</div><div class="t" style="left:1479.70px;top:939.36px;font-size:18px;color:#c4c4c4;font-weight:400;transform:scaleY(1.1);transform-origin:0 14.04px;">False</div><div class="t" style="left:1566.70px;top:939.36px;font-size:18px;color:#c4c4c4;font-weight:400;width:31.90px;height:23.4px;overflow:hidden;transform:scaleY(1.1);transform-origin:0 14.04px;">None</div><div style="left:9.3px;top:962.0px;width:1589.5px;height:29.0px;background:#2a2a2a;"></div><svg style="left:21.3px;top:965.0px;" width="13" height="27" viewBox="0 0 13 27"><ellipse cx="6.25" cy="1.4" rx="6.3" ry="1.25" fill="#a6a6a6"/><ellipse cx="6.25" cy="6.6" rx="6.3" ry="1.25" fill="#a6a6a6"/><ellipse cx="6.25" cy="11.8" rx="6.3" ry="1.25" fill="#a6a6a6"/><ellipse cx="6.25" cy="17.0" rx="6.3" ry="1.25" fill="#a6a6a6"/><ellipse cx="6.25" cy="22.2" rx="6.3" ry="1.25" fill="#a6a6a6"/></svg><svg style="left:42.9px;top:965.0px;" width="13" height="27" viewBox="0 0 13 27"><ellipse cx="6.25" cy="1.4" rx="6.3" ry="1.25" fill="#a6a6a6"/><ellipse cx="6.25" cy="6.6" rx="6.3" ry="1.25" fill="#a6a6a6"/><ellipse cx="6.25" cy="11.8" rx="6.3" ry="1.25" fill="#a6a6a6"/><ellipse cx="6.25" cy="17.0" rx="6.3" ry="1.25" fill="#a6a6a6"/><ellipse cx="6.25" cy="22.2" rx="6.3" ry="1.25" fill="#a6a6a6"/></svg><div class="t" style="left:73.40px;top:967.09px;font-size:19.5px;color:#c4c4c4;font-weight:400;transform:scaleY(1.1);transform-origin:0 15.31px;">25</div><div class="t" style="left:108.70px;top:966.67px;font-size:20px;color:#c4c4c4;font-weight:400;width:199.60px;height:26.0px;overflow:hidden;transform:scaleY(1.1);transform-origin:0 15.73px;">9mm_Round</div><div class="t" style="left:319.40px;top:968.36px;font-size:18px;color:#c4c4c4;font-weight:400;width:210.60px;height:23.4px;overflow:hidden;transform:scaleY(1.1);transform-origin:0 14.04px;">9mm Round</div><div class="t" style="left:536.00px;top:968.36px;font-size:18px;color:#c4c4c4;font-weight:400;width:589.00px;height:23.4px;overflow:hidden;transform:scaleY(1.1);transform-origin:0 14.04px;">A 9mm round desinged for the P1911, a small easy to use calibor</div><div class="t" style="left:1136.10px;top:968.36px;font-size:18px;color:#c4c4c4;font-weight:400;transform:scaleY(1.1);transform-origin:0 14.04px;">0.010000</div><div class="t" style="left:1229.20px;top:968.36px;font-size:18px;color:#c4c4c4;font-weight:400;transform:scaleY(1.1);transform-origin:0 14.04px;">Ammo</div><div class="t" style="left:1346.20px;top:968.36px;font-size:18px;color:#c4c4c4;font-weight:400;transform:scaleY(1.1);transform-origin:0 14.04px;">None</div><div class="t" style="left:1479.70px;top:968.36px;font-size:18px;color:#c4c4c4;font-weight:400;transform:scaleY(1.1);transform-origin:0 14.04px;">False</div><div class="t" style="left:1566.70px;top:968.36px;font-size:18px;color:#c4c4c4;font-weight:400;width:31.90px;height:23.4px;overflow:hidden;transform:scaleY(1.1);transform-origin:0 14.04px;">None</div><div style="left:9.3px;top:991.0px;width:1589.5px;height:29.0px;background:#1b1b1b;"></div><svg style="left:21.3px;top:994.0px;" width="13" height="27" viewBox="0 0 13 27"><ellipse cx="6.25" cy="1.4" rx="6.3" ry="1.25" fill="#a6a6a6"/><ellipse cx="6.25" cy="6.6" rx="6.3" ry="1.25" fill="#a6a6a6"/><ellipse cx="6.25" cy="11.8" rx="6.3" ry="1.25" fill="#a6a6a6"/><ellipse cx="6.25" cy="17.0" rx="6.3" ry="1.25" fill="#a6a6a6"/><ellipse cx="6.25" cy="22.2" rx="6.3" ry="1.25" fill="#a6a6a6"/></svg><svg style="left:42.9px;top:994.0px;" width="13" height="27" viewBox="0 0 13 27"><ellipse cx="6.25" cy="1.4" rx="6.3" ry="1.25" fill="#a6a6a6"/><ellipse cx="6.25" cy="6.6" rx="6.3" ry="1.25" fill="#a6a6a6"/><ellipse cx="6.25" cy="11.8" rx="6.3" ry="1.25" fill="#a6a6a6"/><ellipse cx="6.25" cy="17.0" rx="6.3" ry="1.25" fill="#a6a6a6"/><ellipse cx="6.25" cy="22.2" rx="6.3" ry="1.25" fill="#a6a6a6"/></svg><div class="t" style="left:73.40px;top:996.09px;font-size:19.5px;color:#c4c4c4;font-weight:400;transform:scaleY(1.1);transform-origin:0 15.31px;">26</div><div class="t" style="left:108.70px;top:995.67px;font-size:20px;color:#c4c4c4;font-weight:400;width:199.60px;height:26.0px;overflow:hidden;transform:scaleY(1.1);transform-origin:0 15.73px;">Stone_Furnace</div><div class="t" style="left:319.40px;top:997.36px;font-size:18px;color:#c4c4c4;font-weight:400;width:210.60px;height:23.4px;overflow:hidden;transform:scaleY(1.1);transform-origin:0 14.04px;">Stone Furnace</div><div class="t" style="left:536.00px;top:997.36px;font-size:18px;color:#c4c4c4;font-weight:400;width:589.00px;height:23.4px;overflow:hidden;transform:scaleY(1.1);transform-origin:0 14.04px;">A stone furnace that can be placed in the world and used to forge new items</div><div class="t" style="left:1136.10px;top:997.36px;font-size:18px;color:#c4c4c4;font-weight:400;transform:scaleY(1.1);transform-origin:0 14.04px;">1.000000</div><div class="t" style="left:1229.20px;top:997.36px;font-size:18px;color:#c4c4c4;font-weight:400;transform:scaleY(1.1);transform-origin:0 14.04px;">Building</div><div class="t" style="left:1346.20px;top:997.36px;font-size:18px;color:#c4c4c4;font-weight:400;transform:scaleY(1.1);transform-origin:0 14.04px;">None</div><div class="t" style="left:1479.70px;top:997.36px;font-size:18px;color:#c4c4c4;font-weight:400;transform:scaleY(1.1);transform-origin:0 14.04px;">False</div><div class="t" style="left:1566.70px;top:997.36px;font-size:18px;color:#c4c4c4;font-weight:400;width:31.90px;height:23.4px;overflow:hidden;transform:scaleY(1.1);transform-origin:0 14.04px;">None</div><div style="left:9.3px;top:1020.0px;width:1589.5px;height:29.0px;background:#2a2a2a;"></div><svg style="left:21.3px;top:1023.0px;" width="13" height="27" viewBox="0 0 13 27"><ellipse cx="6.25" cy="1.4" rx="6.3" ry="1.25" fill="#a6a6a6"/><ellipse cx="6.25" cy="6.6" rx="6.3" ry="1.25" fill="#a6a6a6"/><ellipse cx="6.25" cy="11.8" rx="6.3" ry="1.25" fill="#a6a6a6"/><ellipse cx="6.25" cy="17.0" rx="6.3" ry="1.25" fill="#a6a6a6"/><ellipse cx="6.25" cy="22.2" rx="6.3" ry="1.25" fill="#a6a6a6"/></svg><svg style="left:42.9px;top:1023.0px;" width="13" height="27" viewBox="0 0 13 27"><ellipse cx="6.25" cy="1.4" rx="6.3" ry="1.25" fill="#a6a6a6"/><ellipse cx="6.25" cy="6.6" rx="6.3" ry="1.25" fill="#a6a6a6"/><ellipse cx="6.25" cy="11.8" rx="6.3" ry="1.25" fill="#a6a6a6"/><ellipse cx="6.25" cy="17.0" rx="6.3" ry="1.25" fill="#a6a6a6"/><ellipse cx="6.25" cy="22.2" rx="6.3" ry="1.25" fill="#a6a6a6"/></svg><div class="t" style="left:73.40px;top:1025.09px;font-size:19.5px;color:#c4c4c4;font-weight:400;transform:scaleY(1.1);transform-origin:0 15.31px;">27</div><div class="t" style="left:108.70px;top:1024.67px;font-size:20px;color:#c4c4c4;font-weight:400;width:199.60px;height:26.0px;overflow:hidden;transform:scaleY(1.1);transform-origin:0 15.73px;">Wood</div><div class="t" style="left:319.40px;top:1026.36px;font-size:18px;color:#c4c4c4;font-weight:400;width:210.60px;height:23.4px;overflow:hidden;transform:scaleY(1.1);transform-origin:0 14.04px;">Wood Log</div><div class="t" style="left:536.00px;top:1026.36px;font-size:18px;color:#c4c4c4;font-weight:400;width:589.00px;height:23.4px;overflow:hidden;transform:scaleY(1.1);transform-origin:0 14.04px;">Small wood log cut from a tree</div><div class="t" style="left:1136.10px;top:1026.36px;font-size:18px;color:#c4c4c4;font-weight:400;transform:scaleY(1.1);transform-origin:0 14.04px;">0.100000</div><div class="t" style="left:1229.20px;top:1026.36px;font-size:18px;color:#c4c4c4;font-weight:400;transform:scaleY(1.1);transform-origin:0 14.04px;">Crafting</div><div class="t" style="left:1346.20px;top:1026.36px;font-size:18px;color:#c4c4c4;font-weight:400;transform:scaleY(1.1);transform-origin:0 14.04px;">None</div><div class="t" style="left:1479.70px;top:1026.36px;font-size:18px;color:#c4c4c4;font-weight:400;transform:scaleY(1.1);transform-origin:0 14.04px;">False</div><div class="t" style="left:1566.70px;top:1026.36px;font-size:18px;color:#c4c4c4;font-weight:400;width:31.90px;height:23.4px;overflow:hidden;transform:scaleY(1.1);transform-origin:0 14.04px;">None</div><div style="left:9.3px;top:1049.0px;width:1589.5px;height:29.0px;background:#1b1b1b;"></div><svg style="left:21.3px;top:1052.0px;" width="13" height="27" viewBox="0 0 13 27"><ellipse cx="6.25" cy="1.4" rx="6.3" ry="1.25" fill="#a6a6a6"/><ellipse cx="6.25" cy="6.6" rx="6.3" ry="1.25" fill="#a6a6a6"/><ellipse cx="6.25" cy="11.8" rx="6.3" ry="1.25" fill="#a6a6a6"/><ellipse cx="6.25" cy="17.0" rx="6.3" ry="1.25" fill="#a6a6a6"/><ellipse cx="6.25" cy="22.2" rx="6.3" ry="1.25" fill="#a6a6a6"/></svg><svg style="left:42.9px;top:1052.0px;" width="13" height="27" viewBox="0 0 13 27"><ellipse cx="6.25" cy="1.4" rx="6.3" ry="1.25" fill="#a6a6a6"/><ellipse cx="6.25" cy="6.6" rx="6.3" ry="1.25" fill="#a6a6a6"/><ellipse cx="6.25" cy="11.8" rx="6.3" ry="1.25" fill="#a6a6a6"/><ellipse cx="6.25" cy="17.0" rx="6.3" ry="1.25" fill="#a6a6a6"/><ellipse cx="6.25" cy="22.2" rx="6.3" ry="1.25" fill="#a6a6a6"/></svg><div class="t" style="left:73.40px;top:1054.09px;font-size:19.5px;color:#c4c4c4;font-weight:400;transform:scaleY(1.1);transform-origin:0 15.31px;">28</div><div class="t" style="left:108.70px;top:1053.67px;font-size:20px;color:#c4c4c4;font-weight:400;width:199.60px;height:26.0px;overflow:hidden;transform:scaleY(1.1);transform-origin:0 15.73px;">Raw_Meat</div><div class="t" style="left:319.40px;top:1055.36px;font-size:18px;color:#c4c4c4;font-weight:400;width:210.60px;height:23.4px;overflow:hidden;transform:scaleY(1.1);transform-origin:0 14.04px;">Raw Meat</div><div class="t" style="left:536.00px;top:1055.36px;font-size:18px;color:#c4c4c4;font-weight:400;width:589.00px;height:23.4px;overflow:hidden;transform:scaleY(1.1);transform-origin:0 14.04px;">Uncooked meat from an unknowen souce, this should be cooked before eating</div><div class="t" style="left:1136.10px;top:1055.36px;font-size:18px;color:#c4c4c4;font-weight:400;transform:scaleY(1.1);transform-origin:0 14.04px;">0.100000</div><div class="t" style="left:1229.20px;top:1055.36px;font-size:18px;color:#c4c4c4;font-weight:400;transform:scaleY(1.1);transform-origin:0 14.04px;">Consumable</div><div class="t" style="left:1346.20px;top:1055.36px;font-size:18px;color:#c4c4c4;font-weight:400;transform:scaleY(1.1);transform-origin:0 14.04px;">None</div><div class="t" style="left:1479.70px;top:1055.36px;font-size:18px;color:#c4c4c4;font-weight:400;transform:scaleY(1.1);transform-origin:0 14.04px;">False</div><div class="t" style="left:1566.70px;top:1055.36px;font-size:18px;color:#c4c4c4;font-weight:400;width:31.90px;height:23.4px;overflow:hidden;transform:scaleY(1.1);transform-origin:0 14.04px;">None</div><div style="left:9.3px;top:1078.0px;width:1589.5px;height:29.0px;background:#2a2a2a;"></div><svg style="left:21.3px;top:1081.0px;" width="13" height="27" viewBox="0 0 13 27"><ellipse cx="6.25" cy="1.4" rx="6.3" ry="1.25" fill="#a6a6a6"/><ellipse cx="6.25" cy="6.6" rx="6.3" ry="1.25" fill="#a6a6a6"/><ellipse cx="6.25" cy="11.8" rx="6.3" ry="1.25" fill="#a6a6a6"/><ellipse cx="6.25" cy="17.0" rx="6.3" ry="1.25" fill="#a6a6a6"/><ellipse cx="6.25" cy="22.2" rx="6.3" ry="1.25" fill="#a6a6a6"/></svg><svg style="left:42.9px;top:1081.0px;" width="13" height="27" viewBox="0 0 13 27"><ellipse cx="6.25" cy="1.4" rx="6.3" ry="1.25" fill="#a6a6a6"/><ellipse cx="6.25" cy="6.6" rx="6.3" ry="1.25" fill="#a6a6a6"/><ellipse cx="6.25" cy="11.8" rx="6.3" ry="1.25" fill="#a6a6a6"/><ellipse cx="6.25" cy="17.0" rx="6.3" ry="1.25" fill="#a6a6a6"/><ellipse cx="6.25" cy="22.2" rx="6.3" ry="1.25" fill="#a6a6a6"/></svg><div class="t" style="left:73.40px;top:1083.09px;font-size:19.5px;color:#c4c4c4;font-weight:400;transform:scaleY(1.1);transform-origin:0 15.31px;">29</div><div class="t" style="left:108.70px;top:1082.67px;font-size:20px;color:#c4c4c4;font-weight:400;width:199.60px;height:26.0px;overflow:hidden;transform:scaleY(1.1);transform-origin:0 15.73px;">Cooked_Meat</div><div class="t" style="left:319.40px;top:1084.36px;font-size:18px;color:#c4c4c4;font-weight:400;width:210.60px;height:23.4px;overflow:hidden;transform:scaleY(1.1);transform-origin:0 14.04px;">Cooked Meat</div><div class="t" style="left:536.00px;top:1084.36px;font-size:18px;color:#c4c4c4;font-weight:400;width:589.00px;height:23.4px;overflow:hidden;transform:scaleY(1.1);transform-origin:0 14.04px;">cooked meat from an unknowen souce, this should be safe for eating</div><div class="t" style="left:1136.10px;top:1084.36px;font-size:18px;color:#c4c4c4;font-weight:400;transform:scaleY(1.1);transform-origin:0 14.04px;">0.100000</div><div class="t" style="left:1229.20px;top:1084.36px;font-size:18px;color:#c4c4c4;font-weight:400;transform:scaleY(1.1);transform-origin:0 14.04px;">Consumable</div><div class="t" style="left:1346.20px;top:1084.36px;font-size:18px;color:#c4c4c4;font-weight:400;transform:scaleY(1.1);transform-origin:0 14.04px;">None</div><div class="t" style="left:1479.70px;top:1084.36px;font-size:18px;color:#c4c4c4;font-weight:400;transform:scaleY(1.1);transform-origin:0 14.04px;">False</div><div class="t" style="left:1566.70px;top:1084.36px;font-size:18px;color:#c4c4c4;font-weight:400;width:31.90px;height:23.4px;overflow:hidden;transform:scaleY(1.1);transform-origin:0 14.04px;">None</div><div style="left:9.3px;top:1107.0px;width:1589.5px;height:29.0px;background:#1b1b1b;"></div><svg style="left:21.3px;top:1110.0px;" width="13" height="27" viewBox="0 0 13 27"><ellipse cx="6.25" cy="1.4" rx="6.3" ry="1.25" fill="#a6a6a6"/><ellipse cx="6.25" cy="6.6" rx="6.3" ry="1.25" fill="#a6a6a6"/><ellipse cx="6.25" cy="11.8" rx="6.3" ry="1.25" fill="#a6a6a6"/><ellipse cx="6.25" cy="17.0" rx="6.3" ry="1.25" fill="#a6a6a6"/><ellipse cx="6.25" cy="22.2" rx="6.3" ry="1.25" fill="#a6a6a6"/></svg><svg style="left:42.9px;top:1110.0px;" width="13" height="27" viewBox="0 0 13 27"><ellipse cx="6.25" cy="1.4" rx="6.3" ry="1.25" fill="#a6a6a6"/><ellipse cx="6.25" cy="6.6" rx="6.3" ry="1.25" fill="#a6a6a6"/><ellipse cx="6.25" cy="11.8" rx="6.3" ry="1.25" fill="#a6a6a6"/><ellipse cx="6.25" cy="17.0" rx="6.3" ry="1.25" fill="#a6a6a6"/><ellipse cx="6.25" cy="22.2" rx="6.3" ry="1.25" fill="#a6a6a6"/></svg><div class="t" style="left:73.40px;top:1112.09px;font-size:19.5px;color:#c4c4c4;font-weight:400;transform:scaleY(1.1);transform-origin:0 15.31px;">30</div><div class="t" style="left:108.70px;top:1111.67px;font-size:20px;color:#c4c4c4;font-weight:400;width:199.60px;height:26.0px;overflow:hidden;transform:scaleY(1.1);transform-origin:0 15.73px;">Iron_Bar</div><div class="t" style="left:319.40px;top:1113.36px;font-size:18px;color:#c4c4c4;font-weight:400;width:210.60px;height:23.4px;overflow:hidden;transform:scaleY(1.1);transform-origin:0 14.04px;">Iron Bar</div><div class="t" style="left:536.00px;top:1113.36px;font-size:18px;color:#c4c4c4;font-weight:400;width:589.00px;height:23.4px;overflow:hidden;transform:scaleY(1.1);transform-origin:0 14.04px;">A bar of refined iron metal, can be used to creaft other items</div><div class="t" style="left:1136.10px;top:1113.36px;font-size:18px;color:#c4c4c4;font-weight:400;transform:scaleY(1.1);transform-origin:0 14.04px;">0.400000</div><div class="t" style="left:1229.20px;top:1113.36px;font-size:18px;color:#c4c4c4;font-weight:400;transform:scaleY(1.1);transform-origin:0 14.04px;">Crafting</div><div class="t" style="left:1346.20px;top:1113.36px;font-size:18px;color:#c4c4c4;font-weight:400;transform:scaleY(1.1);transform-origin:0 14.04px;">None</div><div class="t" style="left:1479.70px;top:1113.36px;font-size:18px;color:#c4c4c4;font-weight:400;transform:scaleY(1.1);transform-origin:0 14.04px;">False</div><div class="t" style="left:1566.70px;top:1113.36px;font-size:18px;color:#c4c4c4;font-weight:400;width:31.90px;height:23.4px;overflow:hidden;transform:scaleY(1.1);transform-origin:0 14.04px;">None</div><div style="left:9.3px;top:1136.0px;width:1589.5px;height:29.0px;background:#2a2a2a;"></div><svg style="left:21.3px;top:1139.0px;" width="13" height="27" viewBox="0 0 13 27"><ellipse cx="6.25" cy="1.4" rx="6.3" ry="1.25" fill="#a6a6a6"/><ellipse cx="6.25" cy="6.6" rx="6.3" ry="1.25" fill="#a6a6a6"/><ellipse cx="6.25" cy="11.8" rx="6.3" ry="1.25" fill="#a6a6a6"/><ellipse cx="6.25" cy="17.0" rx="6.3" ry="1.25" fill="#a6a6a6"/><ellipse cx="6.25" cy="22.2" rx="6.3" ry="1.25" fill="#a6a6a6"/></svg><svg style="left:42.9px;top:1139.0px;" width="13" height="27" viewBox="0 0 13 27"><ellipse cx="6.25" cy="1.4" rx="6.3" ry="1.25" fill="#a6a6a6"/><ellipse cx="6.25" cy="6.6" rx="6.3" ry="1.25" fill="#a6a6a6"/><ellipse cx="6.25" cy="11.8" rx="6.3" ry="1.25" fill="#a6a6a6"/><ellipse cx="6.25" cy="17.0" rx="6.3" ry="1.25" fill="#a6a6a6"/><ellipse cx="6.25" cy="22.2" rx="6.3" ry="1.25" fill="#a6a6a6"/></svg><div class="t" style="left:73.40px;top:1141.09px;font-size:19.5px;color:#c4c4c4;font-weight:400;transform:scaleY(1.1);transform-origin:0 15.31px;">31</div><div class="t" style="left:108.70px;top:1140.67px;font-size:20px;color:#c4c4c4;font-weight:400;width:199.60px;height:26.0px;overflow:hidden;transform:scaleY(1.1);transform-origin:0 15.73px;">Stone</div><div class="t" style="left:319.40px;top:1142.36px;font-size:18px;color:#c4c4c4;font-weight:400;width:210.60px;height:23.4px;overflow:hidden;transform:scaleY(1.1);transform-origin:0 14.04px;">Stone</div><div class="t" style="left:536.00px;top:1142.36px;font-size:18px;color:#c4c4c4;font-weight:400;width:589.00px;height:23.4px;overflow:hidden;transform:scaleY(1.1);transform-origin:0 14.04px;">A small rock removed from a bigger rock, can be used to craft other items</div><div class="t" style="left:1136.10px;top:1142.36px;font-size:18px;color:#c4c4c4;font-weight:400;transform:scaleY(1.1);transform-origin:0 14.04px;">0.100000</div><div class="t" style="left:1229.20px;top:1142.36px;font-size:18px;color:#c4c4c4;font-weight:400;transform:scaleY(1.1);transform-origin:0 14.04px;">Crafting</div><div class="t" style="left:1346.20px;top:1142.36px;font-size:18px;color:#c4c4c4;font-weight:400;transform:scaleY(1.1);transform-origin:0 14.04px;">None</div><div class="t" style="left:1479.70px;top:1142.36px;font-size:18px;color:#c4c4c4;font-weight:400;transform:scaleY(1.1);transform-origin:0 14.04px;">False</div><div class="t" style="left:1566.70px;top:1142.36px;font-size:18px;color:#c4c4c4;font-weight:400;width:31.90px;height:23.4px;overflow:hidden;transform:scaleY(1.1);transform-origin:0 14.04px;">None</div><div style="left:9.3px;top:1165.0px;width:1589.5px;height:29.0px;background:#1b1b1b;"></div><svg style="left:21.3px;top:1168.0px;" width="13" height="27" viewBox="0 0 13 27"><ellipse cx="6.25" cy="1.4" rx="6.3" ry="1.25" fill="#a6a6a6"/><ellipse cx="6.25" cy="6.6" rx="6.3" ry="1.25" fill="#a6a6a6"/><ellipse cx="6.25" cy="11.8" rx="6.3" ry="1.25" fill="#a6a6a6"/><ellipse cx="6.25" cy="17.0" rx="6.3" ry="1.25" fill="#a6a6a6"/><ellipse cx="6.25" cy="22.2" rx="6.3" ry="1.25" fill="#a6a6a6"/></svg><svg style="left:42.9px;top:1168.0px;" width="13" height="27" viewBox="0 0 13 27"><ellipse cx="6.25" cy="1.4" rx="6.3" ry="1.25" fill="#a6a6a6"/><ellipse cx="6.25" cy="6.6" rx="6.3" ry="1.25" fill="#a6a6a6"/><ellipse cx="6.25" cy="11.8" rx="6.3" ry="1.25" fill="#a6a6a6"/><ellipse cx="6.25" cy="17.0" rx="6.3" ry="1.25" fill="#a6a6a6"/><ellipse cx="6.25" cy="22.2" rx="6.3" ry="1.25" fill="#a6a6a6"/></svg><div class="t" style="left:73.40px;top:1170.09px;font-size:19.5px;color:#c4c4c4;font-weight:400;transform:scaleY(1.1);transform-origin:0 15.31px;">32</div><div class="t" style="left:108.70px;top:1169.67px;font-size:20px;color:#c4c4c4;font-weight:400;width:199.60px;height:26.0px;overflow:hidden;transform:scaleY(1.1);transform-origin:0 15.73px;">Axe</div><div class="t" style="left:319.40px;top:1171.36px;font-size:18px;color:#c4c4c4;font-weight:400;width:210.60px;height:23.4px;overflow:hidden;transform:scaleY(1.1);transform-origin:0 14.04px;">Axe</div><div class="t" style="left:536.00px;top:1171.36px;font-size:18px;color:#c4c4c4;font-weight:400;width:589.00px;height:23.4px;overflow:hidden;transform:scaleY(1.1);transform-origin:0 14.04px;">Old axe can be used as a weapon as well as a tool for collecting resouces</div><div class="t" style="left:1136.10px;top:1171.36px;font-size:18px;color:#c4c4c4;font-weight:400;transform:scaleY(1.1);transform-origin:0 14.04px;">0.600000</div><div class="t" style="left:1229.20px;top:1171.36px;font-size:18px;color:#c4c4c4;font-weight:400;transform:scaleY(1.1);transform-origin:0 14.04px;">Equipment</div><div class="t" style="left:1346.20px;top:1171.36px;font-size:18px;color:#c4c4c4;font-weight:400;transform:scaleY(1.1);transform-origin:0 14.04px;">None</div><div class="t" style="left:1479.70px;top:1171.36px;font-size:18px;color:#c4c4c4;font-weight:400;transform:scaleY(1.1);transform-origin:0 14.04px;">True</div><div class="t" style="left:1566.70px;top:1171.36px;font-size:18px;color:#c4c4c4;font-weight:400;width:31.90px;height:23.4px;overflow:hidden;transform:scaleY(1.1);transform-origin:0 14.04px;">Blueprint</div><div style="left:9.3px;top:1194.0px;width:1589.5px;height:29.0px;background:#2a2a2a;"></div><svg style="left:21.3px;top:1197.0px;" width="13" height="27" viewBox="0 0 13 27"><ellipse cx="6.25" cy="1.4" rx="6.3" ry="1.25" fill="#a6a6a6"/><ellipse cx="6.25" cy="6.6" rx="6.3" ry="1.25" fill="#a6a6a6"/><ellipse cx="6.25" cy="11.8" rx="6.3" ry="1.25" fill="#a6a6a6"/><ellipse cx="6.25" cy="17.0" rx="6.3" ry="1.25" fill="#a6a6a6"/><ellipse cx="6.25" cy="22.2" rx="6.3" ry="1.25" fill="#a6a6a6"/></svg><svg style="left:42.9px;top:1197.0px;" width="13" height="27" viewBox="0 0 13 27"><ellipse cx="6.25" cy="1.4" rx="6.3" ry="1.25" fill="#a6a6a6"/><ellipse cx="6.25" cy="6.6" rx="6.3" ry="1.25" fill="#a6a6a6"/><ellipse cx="6.25" cy="11.8" rx="6.3" ry="1.25" fill="#a6a6a6"/><ellipse cx="6.25" cy="17.0" rx="6.3" ry="1.25" fill="#a6a6a6"/><ellipse cx="6.25" cy="22.2" rx="6.3" ry="1.25" fill="#a6a6a6"/></svg><div class="t" style="left:73.40px;top:1199.09px;font-size:19.5px;color:#c4c4c4;font-weight:400;transform:scaleY(1.1);transform-origin:0 15.31px;">33</div><div class="t" style="left:108.70px;top:1198.67px;font-size:20px;color:#c4c4c4;font-weight:400;width:199.60px;height:26.0px;overflow:hidden;transform:scaleY(1.1);transform-origin:0 15.73px;">Pickaxe</div><div class="t" style="left:319.40px;top:1200.36px;font-size:18px;color:#c4c4c4;font-weight:400;width:210.60px;height:23.4px;overflow:hidden;transform:scaleY(1.1);transform-origin:0 14.04px;">Pickaxe</div><div class="t" style="left:536.00px;top:1200.36px;font-size:18px;color:#c4c4c4;font-weight:400;width:589.00px;height:23.4px;overflow:hidden;transform:scaleY(1.1);transform-origin:0 14.04px;">An old pickaxe that can be used as a weapon as well as be used to collect resources</div><div class="t" style="left:1136.10px;top:1200.36px;font-size:18px;color:#c4c4c4;font-weight:400;transform:scaleY(1.1);transform-origin:0 14.04px;">0.800000</div><div class="t" style="left:1229.20px;top:1200.36px;font-size:18px;color:#c4c4c4;font-weight:400;transform:scaleY(1.1);transform-origin:0 14.04px;">Equipment</div><div class="t" style="left:1346.20px;top:1200.36px;font-size:18px;color:#c4c4c4;font-weight:400;transform:scaleY(1.1);transform-origin:0 14.04px;">None</div><div class="t" style="left:1479.70px;top:1200.36px;font-size:18px;color:#c4c4c4;font-weight:400;transform:scaleY(1.1);transform-origin:0 14.04px;">True</div><div class="t" style="left:1566.70px;top:1200.36px;font-size:18px;color:#c4c4c4;font-weight:400;width:31.90px;height:23.4px;overflow:hidden;transform:scaleY(1.1);transform-origin:0 14.04px;">Blueprint</div><div style="left:9.3px;top:1223.0px;width:1589.5px;height:29.0px;background:#1b1b1b;"></div><svg style="left:21.3px;top:1226.0px;" width="13" height="27" viewBox="0 0 13 27"><ellipse cx="6.25" cy="1.4" rx="6.3" ry="1.25" fill="#a6a6a6"/><ellipse cx="6.25" cy="6.6" rx="6.3" ry="1.25" fill="#a6a6a6"/><ellipse cx="6.25" cy="11.8" rx="6.3" ry="1.25" fill="#a6a6a6"/><ellipse cx="6.25" cy="17.0" rx="6.3" ry="1.25" fill="#a6a6a6"/><ellipse cx="6.25" cy="22.2" rx="6.3" ry="1.25" fill="#a6a6a6"/></svg><svg style="left:42.9px;top:1226.0px;" width="13" height="27" viewBox="0 0 13 27"><ellipse cx="6.25" cy="1.4" rx="6.3" ry="1.25" fill="#a6a6a6"/><ellipse cx="6.25" cy="6.6" rx="6.3" ry="1.25" fill="#a6a6a6"/><ellipse cx="6.25" cy="11.8" rx="6.3" ry="1.25" fill="#a6a6a6"/><ellipse cx="6.25" cy="17.0" rx="6.3" ry="1.25" fill="#a6a6a6"/><ellipse cx="6.25" cy="22.2" rx="6.3" ry="1.25" fill="#a6a6a6"/></svg><div class="t" style="left:73.40px;top:1228.09px;font-size:19.5px;color:#c4c4c4;font-weight:400;transform:scaleY(1.1);transform-origin:0 15.31px;">34</div><div class="t" style="left:108.70px;top:1227.67px;font-size:20px;color:#c4c4c4;font-weight:400;width:199.60px;height:26.0px;overflow:hidden;transform:scaleY(1.1);transform-origin:0 15.73px;">Wood_Chest</div><div class="t" style="left:319.40px;top:1229.36px;font-size:18px;color:#c4c4c4;font-weight:400;width:210.60px;height:23.4px;overflow:hidden;transform:scaleY(1.1);transform-origin:0 14.04px;">Wood Chest</div><div class="t" style="left:536.00px;top:1229.36px;font-size:18px;color:#c4c4c4;font-weight:400;width:589.00px;height:23.4px;overflow:hidden;transform:scaleY(1.1);transform-origin:0 14.04px;">A large wood chest that can be placed in the world to store items</div><div class="t" style="left:1136.10px;top:1229.36px;font-size:18px;color:#c4c4c4;font-weight:400;transform:scaleY(1.1);transform-origin:0 14.04px;">1.000000</div><div class="t" style="left:1229.20px;top:1229.36px;font-size:18px;color:#c4c4c4;font-weight:400;transform:scaleY(1.1);transform-origin:0 14.04px;">Building</div><div class="t" style="left:1346.20px;top:1229.36px;font-size:18px;color:#c4c4c4;font-weight:400;transform:scaleY(1.1);transform-origin:0 14.04px;">None</div><div class="t" style="left:1479.70px;top:1229.36px;font-size:18px;color:#c4c4c4;font-weight:400;transform:scaleY(1.1);transform-origin:0 14.04px;">False</div><div class="t" style="left:1566.70px;top:1229.36px;font-size:18px;color:#c4c4c4;font-weight:400;width:31.90px;height:23.4px;overflow:hidden;transform:scaleY(1.1);transform-origin:0 14.04px;">None</div><div style="left:9.3px;top:1252.0px;width:1589.5px;height:29.0px;background:#2a2a2a;"></div><svg style="left:21.3px;top:1255.0px;" width="13" height="27" viewBox="0 0 13 27"><ellipse cx="6.25" cy="1.4" rx="6.3" ry="1.25" fill="#a6a6a6"/><ellipse cx="6.25" cy="6.6" rx="6.3" ry="1.25" fill="#a6a6a6"/><ellipse cx="6.25" cy="11.8" rx="6.3" ry="1.25" fill="#a6a6a6"/><ellipse cx="6.25" cy="17.0" rx="6.3" ry="1.25" fill="#a6a6a6"/><ellipse cx="6.25" cy="22.2" rx="6.3" ry="1.25" fill="#a6a6a6"/></svg><svg style="left:42.9px;top:1255.0px;" width="13" height="27" viewBox="0 0 13 27"><ellipse cx="6.25" cy="1.4" rx="6.3" ry="1.25" fill="#a6a6a6"/><ellipse cx="6.25" cy="6.6" rx="6.3" ry="1.25" fill="#a6a6a6"/><ellipse cx="6.25" cy="11.8" rx="6.3" ry="1.25" fill="#a6a6a6"/><ellipse cx="6.25" cy="17.0" rx="6.3" ry="1.25" fill="#a6a6a6"/><ellipse cx="6.25" cy="22.2" rx="6.3" ry="1.25" fill="#a6a6a6"/></svg><div class="t" style="left:73.40px;top:1257.09px;font-size:19.5px;color:#c4c4c4;font-weight:400;transform:scaleY(1.1);transform-origin:0 15.31px;">35</div><div class="t" style="left:108.70px;top:1256.67px;font-size:20px;color:#c4c4c4;font-weight:400;width:199.60px;height:26.0px;overflow:hidden;transform:scaleY(1.1);transform-origin:0 15.73px;">CampFire</div><div class="t" style="left:319.40px;top:1258.36px;font-size:18px;color:#c4c4c4;font-weight:400;width:210.60px;height:23.4px;overflow:hidden;transform:scaleY(1.1);transform-origin:0 14.04px;">Camp Fire</div><div class="t" style="left:536.00px;top:1258.36px;font-size:18px;color:#c4c4c4;font-weight:400;width:589.00px;height:23.4px;overflow:hidden;transform:scaleY(1.1);transform-origin:0 14.04px;">A small camp fire that can be placed in the world and be used to cook other</div><div class="t" style="left:1136.10px;top:1258.36px;font-size:18px;color:#c4c4c4;font-weight:400;transform:scaleY(1.1);transform-origin:0 14.04px;">1.000000</div><div class="t" style="left:1229.20px;top:1258.36px;font-size:18px;color:#c4c4c4;font-weight:400;transform:scaleY(1.1);transform-origin:0 14.04px;">Building</div><div class="t" style="left:1346.20px;top:1258.36px;font-size:18px;color:#c4c4c4;font-weight:400;transform:scaleY(1.1);transform-origin:0 14.04px;">None</div><div class="t" style="left:1479.70px;top:1258.36px;font-size:18px;color:#c4c4c4;font-weight:400;transform:scaleY(1.1);transform-origin:0 14.04px;">False</div><div class="t" style="left:1566.70px;top:1258.36px;font-size:18px;color:#c4c4c4;font-weight:400;width:31.90px;height:23.4px;overflow:hidden;transform:scaleY(1.1);transform-origin:0 14.04px;">None</div><div style="left:9.3px;top:1281.0px;width:1589.5px;height:29.0px;background:#1b1b1b;"></div><svg style="left:21.3px;top:1284.0px;" width="13" height="27" viewBox="0 0 13 27"><ellipse cx="6.25" cy="1.4" rx="6.3" ry="1.25" fill="#a6a6a6"/><ellipse cx="6.25" cy="6.6" rx="6.3" ry="1.25" fill="#a6a6a6"/><ellipse cx="6.25" cy="11.8" rx="6.3" ry="1.25" fill="#a6a6a6"/><ellipse cx="6.25" cy="17.0" rx="6.3" ry="1.25" fill="#a6a6a6"/><ellipse cx="6.25" cy="22.2" rx="6.3" ry="1.25" fill="#a6a6a6"/></svg><svg style="left:42.9px;top:1284.0px;" width="13" height="27" viewBox="0 0 13 27"><ellipse cx="6.25" cy="1.4" rx="6.3" ry="1.25" fill="#a6a6a6"/><ellipse cx="6.25" cy="6.6" rx="6.3" ry="1.25" fill="#a6a6a6"/><ellipse cx="6.25" cy="11.8" rx="6.3" ry="1.25" fill="#a6a6a6"/><ellipse cx="6.25" cy="17.0" rx="6.3" ry="1.25" fill="#a6a6a6"/><ellipse cx="6.25" cy="22.2" rx="6.3" ry="1.25" fill="#a6a6a6"/></svg><div class="t" style="left:73.40px;top:1286.09px;font-size:19.5px;color:#c4c4c4;font-weight:400;transform:scaleY(1.1);transform-origin:0 15.31px;">36</div><div class="t" style="left:108.70px;top:1285.67px;font-size:20px;color:#c4c4c4;font-weight:400;width:199.60px;height:26.0px;overflow:hidden;transform:scaleY(1.1);transform-origin:0 15.73px;">M1982</div><div class="t" style="left:319.40px;top:1287.36px;font-size:18px;color:#c4c4c4;font-weight:400;width:210.60px;height:23.4px;overflow:hidden;transform:scaleY(1.1);transform-origin:0 14.04px;">M1982</div><div class="t" style="left:536.00px;top:1287.36px;font-size:18px;color:#c4c4c4;font-weight:400;width:589.00px;height:23.4px;overflow:hidden;transform:scaleY(1.1);transform-origin:0 14.04px;">The M1982 is a pump action shotgun with an 8 round capacity, with shot range</div><div class="t" style="left:1136.10px;top:1287.36px;font-size:18px;color:#c4c4c4;font-weight:400;transform:scaleY(1.1);transform-origin:0 14.04px;">1.000000</div><div class="t" style="left:1229.20px;top:1287.36px;font-size:18px;color:#c4c4c4;font-weight:400;transform:scaleY(1.1);transform-origin:0 14.04px;">Equipment</div><div class="t" style="left:1346.20px;top:1287.36px;font-size:18px;color:#c4c4c4;font-weight:400;transform:scaleY(1.1);transform-origin:0 14.04px;">None</div><div class="t" style="left:1479.70px;top:1287.36px;font-size:18px;color:#c4c4c4;font-weight:400;transform:scaleY(1.1);transform-origin:0 14.04px;">True</div><div class="t" style="left:1566.70px;top:1287.36px;font-size:18px;color:#c4c4c4;font-weight:400;width:31.90px;height:23.4px;overflow:hidden;transform:scaleY(1.1);transform-origin:0 14.04px;">Blueprint</div><div style="left:9.3px;top:1310.0px;width:1589.5px;height:29.0px;background:#2a2a2a;"></div><svg style="left:21.3px;top:1313.0px;" width="13" height="27" viewBox="0 0 13 27"><ellipse cx="6.25" cy="1.4" rx="6.3" ry="1.25" fill="#a6a6a6"/><ellipse cx="6.25" cy="6.6" rx="6.3" ry="1.25" fill="#a6a6a6"/><ellipse cx="6.25" cy="11.8" rx="6.3" ry="1.25" fill="#a6a6a6"/><ellipse cx="6.25" cy="17.0" rx="6.3" ry="1.25" fill="#a6a6a6"/><ellipse cx="6.25" cy="22.2" rx="6.3" ry="1.25" fill="#a6a6a6"/></svg><svg style="left:42.9px;top:1313.0px;" width="13" height="27" viewBox="0 0 13 27"><ellipse cx="6.25" cy="1.4" rx="6.3" ry="1.25" fill="#a6a6a6"/><ellipse cx="6.25" cy="6.6" rx="6.3" ry="1.25" fill="#a6a6a6"/><ellipse cx="6.25" cy="11.8" rx="6.3" ry="1.25" fill="#a6a6a6"/><ellipse cx="6.25" cy="17.0" rx="6.3" ry="1.25" fill="#a6a6a6"/><ellipse cx="6.25" cy="22.2" rx="6.3" ry="1.25" fill="#a6a6a6"/></svg><div class="t" style="left:73.40px;top:1315.09px;font-size:19.5px;color:#c4c4c4;font-weight:400;transform:scaleY(1.1);transform-origin:0 15.31px;">37</div><div class="t" style="left:108.70px;top:1314.67px;font-size:20px;color:#c4c4c4;font-weight:400;width:199.60px;height:26.0px;overflow:hidden;transform:scaleY(1.1);transform-origin:0 15.73px;">12_Gauge_Buckshot</div><div class="t" style="left:319.40px;top:1316.36px;font-size:18px;color:#c4c4c4;font-weight:400;width:210.60px;height:23.4px;overflow:hidden;transform:scaleY(1.1);transform-origin:0 14.04px;">12 Gauge Buckshot</div><div class="t" style="left:536.00px;top:1316.36px;font-size:18px;color:#c4c4c4;font-weight:400;width:589.00px;height:23.4px;overflow:hidden;transform:scaleY(1.1);transform-origin:0 14.04px;">The buckshot shells are filled with 9 smaller lead pellets. When fired, the pellets</div><div class="t" style="left:1136.10px;top:1316.36px;font-size:18px;color:#c4c4c4;font-weight:400;transform:scaleY(1.1);transform-origin:0 14.04px;">0.100000</div><div class="t" style="left:1229.20px;top:1316.36px;font-size:18px;color:#c4c4c4;font-weight:400;transform:scaleY(1.1);transform-origin:0 14.04px;">Ammo</div><div class="t" style="left:1346.20px;top:1316.36px;font-size:18px;color:#c4c4c4;font-weight:400;transform:scaleY(1.1);transform-origin:0 14.04px;">None</div><div class="t" style="left:1479.70px;top:1316.36px;font-size:18px;color:#c4c4c4;font-weight:400;transform:scaleY(1.1);transform-origin:0 14.04px;">False</div><div class="t" style="left:1566.70px;top:1316.36px;font-size:18px;color:#c4c4c4;font-weight:400;width:31.90px;height:23.4px;overflow:hidden;transform:scaleY(1.1);transform-origin:0 14.04px;">None</div><div style="left:9.3px;top:1339.0px;width:1589.5px;height:29.0px;background:#1b1b1b;"></div><svg style="left:21.3px;top:1342.0px;" width="13" height="27" viewBox="0 0 13 27"><ellipse cx="6.25" cy="1.4" rx="6.3" ry="1.25" fill="#a6a6a6"/><ellipse cx="6.25" cy="6.6" rx="6.3" ry="1.25" fill="#a6a6a6"/><ellipse cx="6.25" cy="11.8" rx="6.3" ry="1.25" fill="#a6a6a6"/><ellipse cx="6.25" cy="17.0" rx="6.3" ry="1.25" fill="#a6a6a6"/><ellipse cx="6.25" cy="22.2" rx="6.3" ry="1.25" fill="#a6a6a6"/></svg><svg style="left:42.9px;top:1342.0px;" width="13" height="27" viewBox="0 0 13 27"><ellipse cx="6.25" cy="1.4" rx="6.3" ry="1.25" fill="#a6a6a6"/><ellipse cx="6.25" cy="6.6" rx="6.3" ry="1.25" fill="#a6a6a6"/><ellipse cx="6.25" cy="11.8" rx="6.3" ry="1.25" fill="#a6a6a6"/><ellipse cx="6.25" cy="17.0" rx="6.3" ry="1.25" fill="#a6a6a6"/><ellipse cx="6.25" cy="22.2" rx="6.3" ry="1.25" fill="#a6a6a6"/></svg><div class="t" style="left:73.40px;top:1344.09px;font-size:19.5px;color:#c4c4c4;font-weight:400;transform:scaleY(1.1);transform-origin:0 15.31px;">38</div><div class="t" style="left:108.70px;top:1343.67px;font-size:20px;color:#c4c4c4;font-weight:400;width:199.60px;height:26.0px;overflow:hidden;transform:scaleY(1.1);transform-origin:0 15.73px;">12_Gauge_AmmoBox</div><div class="t" style="left:319.40px;top:1345.36px;font-size:18px;color:#c4c4c4;font-weight:400;width:210.60px;height:23.4px;overflow:hidden;transform:scaleY(1.1);transform-origin:0 14.04px;">Box of 12 Gauge Rounds</div><div class="t" style="left:536.00px;top:1345.36px;font-size:18px;color:#c4c4c4;font-weight:400;width:589.00px;height:23.4px;overflow:hidden;transform:scaleY(1.1);transform-origin:0 14.04px;">30 x 12 Gauge Buckshot rounds designed for a shotgun</div><div class="t" style="left:1136.10px;top:1345.36px;font-size:18px;color:#c4c4c4;font-weight:400;transform:scaleY(1.1);transform-origin:0 14.04px;">1.000000</div><div class="t" style="left:1229.20px;top:1345.36px;font-size:18px;color:#c4c4c4;font-weight:400;transform:scaleY(1.1);transform-origin:0 14.04px;">Container</div><div class="t" style="left:1346.20px;top:1345.36px;font-size:18px;color:#c4c4c4;font-weight:400;transform:scaleY(1.1);transform-origin:0 14.04px;">None</div><div class="t" style="left:1479.70px;top:1345.36px;font-size:18px;color:#c4c4c4;font-weight:400;transform:scaleY(1.1);transform-origin:0 14.04px;">False</div><div class="t" style="left:1566.70px;top:1345.36px;font-size:18px;color:#c4c4c4;font-weight:400;width:31.90px;height:23.4px;overflow:hidden;transform:scaleY(1.1);transform-origin:0 14.04px;">None</div><div style="left:9.3px;top:1368.0px;width:1589.5px;height:29.0px;background:#2a2a2a;"></div><svg style="left:21.3px;top:1371.0px;" width="13" height="27" viewBox="0 0 13 27"><ellipse cx="6.25" cy="1.4" rx="6.3" ry="1.25" fill="#a6a6a6"/><ellipse cx="6.25" cy="6.6" rx="6.3" ry="1.25" fill="#a6a6a6"/><ellipse cx="6.25" cy="11.8" rx="6.3" ry="1.25" fill="#a6a6a6"/><ellipse cx="6.25" cy="17.0" rx="6.3" ry="1.25" fill="#a6a6a6"/><ellipse cx="6.25" cy="22.2" rx="6.3" ry="1.25" fill="#a6a6a6"/></svg><svg style="left:42.9px;top:1371.0px;" width="13" height="27" viewBox="0 0 13 27"><ellipse cx="6.25" cy="1.4" rx="6.3" ry="1.25" fill="#a6a6a6"/><ellipse cx="6.25" cy="6.6" rx="6.3" ry="1.25" fill="#a6a6a6"/><ellipse cx="6.25" cy="11.8" rx="6.3" ry="1.25" fill="#a6a6a6"/><ellipse cx="6.25" cy="17.0" rx="6.3" ry="1.25" fill="#a6a6a6"/><ellipse cx="6.25" cy="22.2" rx="6.3" ry="1.25" fill="#a6a6a6"/></svg><div class="t" style="left:73.40px;top:1373.09px;font-size:19.5px;color:#c4c4c4;font-weight:400;transform:scaleY(1.1);transform-origin:0 15.31px;">39</div><div class="t" style="left:108.70px;top:1372.67px;font-size:20px;color:#c4c4c4;font-weight:400;width:199.60px;height:26.0px;overflow:hidden;transform:scaleY(1.1);transform-origin:0 15.73px;">Silencer</div><div class="t" style="left:319.40px;top:1374.36px;font-size:18px;color:#c4c4c4;font-weight:400;width:210.60px;height:23.4px;overflow:hidden;transform:scaleY(1.1);transform-origin:0 14.04px;">Silencer</div><div class="t" style="left:536.00px;top:1374.36px;font-size:18px;color:#c4c4c4;font-weight:400;width:589.00px;height:23.4px;overflow:hidden;transform:scaleY(1.1);transform-origin:0 14.04px;">A device attached to or part of the barrel of a firearm which reduces the amount</div><div class="t" style="left:1136.10px;top:1374.36px;font-size:18px;color:#c4c4c4;font-weight:400;transform:scaleY(1.1);transform-origin:0 14.04px;">0.200000</div><div class="t" style="left:1229.20px;top:1374.36px;font-size:18px;color:#c4c4c4;font-weight:400;transform:scaleY(1.1);transform-origin:0 14.04px;">Attachment</div><div class="t" style="left:1346.20px;top:1374.36px;font-size:18px;color:#c4c4c4;font-weight:400;transform:scaleY(1.1);transform-origin:0 14.04px;">None</div><div class="t" style="left:1479.70px;top:1374.36px;font-size:18px;color:#c4c4c4;font-weight:400;transform:scaleY(1.1);transform-origin:0 14.04px;">False</div><div class="t" style="left:1566.70px;top:1374.36px;font-size:18px;color:#c4c4c4;font-weight:400;width:31.90px;height:23.4px;overflow:hidden;transform:scaleY(1.1);transform-origin:0 14.04px;">None</div><div style="left:9.3px;top:1397.0px;width:1589.5px;height:29.0px;background:#1b1b1b;"></div><svg style="left:21.3px;top:1400.0px;" width="13" height="27" viewBox="0 0 13 27"><ellipse cx="6.25" cy="1.4" rx="6.3" ry="1.25" fill="#a6a6a6"/><ellipse cx="6.25" cy="6.6" rx="6.3" ry="1.25" fill="#a6a6a6"/><ellipse cx="6.25" cy="11.8" rx="6.3" ry="1.25" fill="#a6a6a6"/><ellipse cx="6.25" cy="17.0" rx="6.3" ry="1.25" fill="#a6a6a6"/><ellipse cx="6.25" cy="22.2" rx="6.3" ry="1.25" fill="#a6a6a6"/></svg><svg style="left:42.9px;top:1400.0px;" width="13" height="27" viewBox="0 0 13 27"><ellipse cx="6.25" cy="1.4" rx="6.3" ry="1.25" fill="#a6a6a6"/><ellipse cx="6.25" cy="6.6" rx="6.3" ry="1.25" fill="#a6a6a6"/><ellipse cx="6.25" cy="11.8" rx="6.3" ry="1.25" fill="#a6a6a6"/><ellipse cx="6.25" cy="17.0" rx="6.3" ry="1.25" fill="#a6a6a6"/><ellipse cx="6.25" cy="22.2" rx="6.3" ry="1.25" fill="#a6a6a6"/></svg><div class="t" style="left:73.40px;top:1402.09px;font-size:19.5px;color:#c4c4c4;font-weight:400;transform:scaleY(1.1);transform-origin:0 15.31px;">40</div><div class="t" style="left:108.70px;top:1401.67px;font-size:20px;color:#c4c4c4;font-weight:400;width:199.60px;height:26.0px;overflow:hidden;transform:scaleY(1.1);transform-origin:0 15.73px;">Metal_Bed</div><div class="t" style="left:319.40px;top:1403.36px;font-size:18px;color:#c4c4c4;font-weight:400;width:210.60px;height:23.4px;overflow:hidden;transform:scaleY(1.1);transform-origin:0 14.04px;">Metal Bed</div><div class="t" style="left:536.00px;top:1403.36px;font-size:18px;color:#c4c4c4;font-weight:400;width:589.00px;height:23.4px;overflow:hidden;transform:scaleY(1.1);transform-origin:0 14.04px;">A metal bed used to set your respawn point</div><div class="t" style="left:1136.10px;top:1403.36px;font-size:18px;color:#c4c4c4;font-weight:400;transform:scaleY(1.1);transform-origin:0 14.04px;">1.000000</div><div class="t" style="left:1229.20px;top:1403.36px;font-size:18px;color:#c4c4c4;font-weight:400;transform:scaleY(1.1);transform-origin:0 14.04px;">Building</div><div class="t" style="left:1346.20px;top:1403.36px;font-size:18px;color:#c4c4c4;font-weight:400;transform:scaleY(1.1);transform-origin:0 14.04px;">None</div><div class="t" style="left:1479.70px;top:1403.36px;font-size:18px;color:#c4c4c4;font-weight:400;transform:scaleY(1.1);transform-origin:0 14.04px;">False</div><div class="t" style="left:1566.70px;top:1403.36px;font-size:18px;color:#c4c4c4;font-weight:400;width:31.90px;height:23.4px;overflow:hidden;transform:scaleY(1.1);transform-origin:0 14.04px;">None</div><div style="left:9.3px;top:1426.0px;width:1589.5px;height:29.0px;background:#2a2a2a;"></div><svg style="left:21.3px;top:1429.0px;" width="13" height="27" viewBox="0 0 13 27"><ellipse cx="6.25" cy="1.4" rx="6.3" ry="1.25" fill="#a6a6a6"/><ellipse cx="6.25" cy="6.6" rx="6.3" ry="1.25" fill="#a6a6a6"/><ellipse cx="6.25" cy="11.8" rx="6.3" ry="1.25" fill="#a6a6a6"/><ellipse cx="6.25" cy="17.0" rx="6.3" ry="1.25" fill="#a6a6a6"/><ellipse cx="6.25" cy="22.2" rx="6.3" ry="1.25" fill="#a6a6a6"/></svg><svg style="left:42.9px;top:1429.0px;" width="13" height="27" viewBox="0 0 13 27"><ellipse cx="6.25" cy="1.4" rx="6.3" ry="1.25" fill="#a6a6a6"/><ellipse cx="6.25" cy="6.6" rx="6.3" ry="1.25" fill="#a6a6a6"/><ellipse cx="6.25" cy="11.8" rx="6.3" ry="1.25" fill="#a6a6a6"/><ellipse cx="6.25" cy="17.0" rx="6.3" ry="1.25" fill="#a6a6a6"/><ellipse cx="6.25" cy="22.2" rx="6.3" ry="1.25" fill="#a6a6a6"/></svg><div class="t" style="left:73.40px;top:1431.09px;font-size:19.5px;color:#c4c4c4;font-weight:400;transform:scaleY(1.1);transform-origin:0 15.31px;">41</div><div class="t" style="left:108.70px;top:1430.67px;font-size:20px;color:#c4c4c4;font-weight:400;width:199.60px;height:26.0px;overflow:hidden;transform:scaleY(1.1);transform-origin:0 15.73px;">Crafting_Bench</div><div class="t" style="left:319.40px;top:1432.36px;font-size:18px;color:#c4c4c4;font-weight:400;width:210.60px;height:23.4px;overflow:hidden;transform:scaleY(1.1);transform-origin:0 14.04px;">Crafting Bench</div><div class="t" style="left:536.00px;top:1432.36px;font-size:18px;color:#c4c4c4;font-weight:400;width:589.00px;height:23.4px;overflow:hidden;transform:scaleY(1.1);transform-origin:0 14.04px;">A creating bench that allows the you to craft more complex items</div><div class="t" style="left:1136.10px;top:1432.36px;font-size:18px;color:#c4c4c4;font-weight:400;transform:scaleY(1.1);transform-origin:0 14.04px;">2.000000</div><div class="t" style="left:1229.20px;top:1432.36px;font-size:18px;color:#c4c4c4;font-weight:400;transform:scaleY(1.1);transform-origin:0 14.04px;">Building</div><div class="t" style="left:1346.20px;top:1432.36px;font-size:18px;color:#c4c4c4;font-weight:400;transform:scaleY(1.1);transform-origin:0 14.04px;">None</div><div class="t" style="left:1479.70px;top:1432.36px;font-size:18px;color:#c4c4c4;font-weight:400;transform:scaleY(1.1);transform-origin:0 14.04px;">False</div><div class="t" style="left:1566.70px;top:1432.36px;font-size:18px;color:#c4c4c4;font-weight:400;width:31.90px;height:23.4px;overflow:hidden;transform:scaleY(1.1);transform-origin:0 14.04px;">None</div><div style="left:9.3px;top:1455.0px;width:1589.5px;height:29.0px;background:#1b1b1b;"></div><svg style="left:21.3px;top:1458.0px;" width="13" height="27" viewBox="0 0 13 27"><ellipse cx="6.25" cy="1.4" rx="6.3" ry="1.25" fill="#a6a6a6"/><ellipse cx="6.25" cy="6.6" rx="6.3" ry="1.25" fill="#a6a6a6"/><ellipse cx="6.25" cy="11.8" rx="6.3" ry="1.25" fill="#a6a6a6"/><ellipse cx="6.25" cy="17.0" rx="6.3" ry="1.25" fill="#a6a6a6"/><ellipse cx="6.25" cy="22.2" rx="6.3" ry="1.25" fill="#a6a6a6"/></svg><svg style="left:42.9px;top:1458.0px;" width="13" height="27" viewBox="0 0 13 27"><ellipse cx="6.25" cy="1.4" rx="6.3" ry="1.25" fill="#a6a6a6"/><ellipse cx="6.25" cy="6.6" rx="6.3" ry="1.25" fill="#a6a6a6"/><ellipse cx="6.25" cy="11.8" rx="6.3" ry="1.25" fill="#a6a6a6"/><ellipse cx="6.25" cy="17.0" rx="6.3" ry="1.25" fill="#a6a6a6"/><ellipse cx="6.25" cy="22.2" rx="6.3" ry="1.25" fill="#a6a6a6"/></svg><div class="t" style="left:73.40px;top:1460.09px;font-size:19.5px;color:#c4c4c4;font-weight:400;transform:scaleY(1.1);transform-origin:0 15.31px;">42</div><div class="t" style="left:108.70px;top:1459.67px;font-size:20px;color:#c4c4c4;font-weight:400;width:199.60px;height:26.0px;overflow:hidden;transform:scaleY(1.1);transform-origin:0 15.73px;">Bandage</div><div class="t" style="left:319.40px;top:1461.36px;font-size:18px;color:#c4c4c4;font-weight:400;width:210.60px;height:23.4px;overflow:hidden;transform:scaleY(1.1);transform-origin:0 14.04px;">Bandage</div><div class="t" style="left:536.00px;top:1461.36px;font-size:18px;color:#c4c4c4;font-weight:400;width:589.00px;height:23.4px;overflow:hidden;transform:scaleY(1.1);transform-origin:0 14.04px;">Heals a small amount and stops bleeding</div><div class="t" style="left:1136.10px;top:1461.36px;font-size:18px;color:#c4c4c4;font-weight:400;transform:scaleY(1.1);transform-origin:0 14.04px;">0.200000</div><div class="t" style="left:1229.20px;top:1461.36px;font-size:18px;color:#c4c4c4;font-weight:400;transform:scaleY(1.1);transform-origin:0 14.04px;">Consumable</div><div class="t" style="left:1346.20px;top:1461.36px;font-size:18px;color:#c4c4c4;font-weight:400;transform:scaleY(1.1);transform-origin:0 14.04px;">None</div><div class="t" style="left:1479.70px;top:1461.36px;font-size:18px;color:#c4c4c4;font-weight:400;transform:scaleY(1.1);transform-origin:0 14.04px;">False</div><div class="t" style="left:1566.70px;top:1461.36px;font-size:18px;color:#c4c4c4;font-weight:400;width:31.90px;height:23.4px;overflow:hidden;transform:scaleY(1.1);transform-origin:0 14.04px;">None</div><div style="left:9.3px;top:1484.0px;width:1589.5px;height:29.0px;background:#2a2a2a;"></div><svg style="left:21.3px;top:1487.0px;" width="13" height="27" viewBox="0 0 13 27"><ellipse cx="6.25" cy="1.4" rx="6.3" ry="1.25" fill="#a6a6a6"/><ellipse cx="6.25" cy="6.6" rx="6.3" ry="1.25" fill="#a6a6a6"/><ellipse cx="6.25" cy="11.8" rx="6.3" ry="1.25" fill="#a6a6a6"/><ellipse cx="6.25" cy="17.0" rx="6.3" ry="1.25" fill="#a6a6a6"/><ellipse cx="6.25" cy="22.2" rx="6.3" ry="1.25" fill="#a6a6a6"/></svg><svg style="left:42.9px;top:1487.0px;" width="13" height="27" viewBox="0 0 13 27"><ellipse cx="6.25" cy="1.4" rx="6.3" ry="1.25" fill="#a6a6a6"/><ellipse cx="6.25" cy="6.6" rx="6.3" ry="1.25" fill="#a6a6a6"/><ellipse cx="6.25" cy="11.8" rx="6.3" ry="1.25" fill="#a6a6a6"/><ellipse cx="6.25" cy="17.0" rx="6.3" ry="1.25" fill="#a6a6a6"/><ellipse cx="6.25" cy="22.2" rx="6.3" ry="1.25" fill="#a6a6a6"/></svg><div class="t" style="left:73.40px;top:1489.09px;font-size:19.5px;color:#c4c4c4;font-weight:400;transform:scaleY(1.1);transform-origin:0 15.31px;">43</div><div class="t" style="left:108.70px;top:1488.67px;font-size:20px;color:#c4c4c4;font-weight:400;width:199.60px;height:26.0px;overflow:hidden;transform:scaleY(1.1);transform-origin:0 15.73px;">Cable</div><div class="t" style="left:319.40px;top:1490.36px;font-size:18px;color:#c4c4c4;font-weight:400;width:210.60px;height:23.4px;overflow:hidden;transform:scaleY(1.1);transform-origin:0 14.04px;">Cable</div><div class="t" style="left:536.00px;top:1490.36px;font-size:18px;color:#c4c4c4;font-weight:400;width:589.00px;height:23.4px;overflow:hidden;transform:scaleY(1.1);transform-origin:0 14.04px;"></div><div class="t" style="left:1136.10px;top:1490.36px;font-size:18px;color:#c4c4c4;font-weight:400;transform:scaleY(1.1);transform-origin:0 14.04px;">0.100000</div><div class="t" style="left:1229.20px;top:1490.36px;font-size:18px;color:#c4c4c4;font-weight:400;transform:scaleY(1.1);transform-origin:0 14.04px;">Building</div><div class="t" style="left:1346.20px;top:1490.36px;font-size:18px;color:#c4c4c4;font-weight:400;transform:scaleY(1.1);transform-origin:0 14.04px;">None</div><div class="t" style="left:1479.70px;top:1490.36px;font-size:18px;color:#c4c4c4;font-weight:400;transform:scaleY(1.1);transform-origin:0 14.04px;">False</div><div class="t" style="left:1566.70px;top:1490.36px;font-size:18px;color:#c4c4c4;font-weight:400;width:31.90px;height:23.4px;overflow:hidden;transform:scaleY(1.1);transform-origin:0 14.04px;">None</div><div style="left:9.3px;top:1513.0px;width:1589.5px;height:29.0px;background:#4e4e4e;"></div><svg style="left:21.3px;top:1516.0px;" width="13" height="27" viewBox="0 0 13 27"><ellipse cx="6.25" cy="1.4" rx="6.3" ry="1.25" fill="#a6a6a6"/><ellipse cx="6.25" cy="6.6" rx="6.3" ry="1.25" fill="#a6a6a6"/><ellipse cx="6.25" cy="11.8" rx="6.3" ry="1.25" fill="#a6a6a6"/><ellipse cx="6.25" cy="17.0" rx="6.3" ry="1.25" fill="#a6a6a6"/><ellipse cx="6.25" cy="22.2" rx="6.3" ry="1.25" fill="#a6a6a6"/></svg><svg style="left:42.9px;top:1516.0px;" width="13" height="27" viewBox="0 0 13 27"><ellipse cx="6.25" cy="1.4" rx="6.3" ry="1.25" fill="#a6a6a6"/><ellipse cx="6.25" cy="6.6" rx="6.3" ry="1.25" fill="#a6a6a6"/><ellipse cx="6.25" cy="11.8" rx="6.3" ry="1.25" fill="#a6a6a6"/><ellipse cx="6.25" cy="17.0" rx="6.3" ry="1.25" fill="#a6a6a6"/><ellipse cx="6.25" cy="22.2" rx="6.3" ry="1.25" fill="#a6a6a6"/></svg><div class="t" style="left:73.40px;top:1518.09px;font-size:19.5px;color:#f6b80c;font-weight:400;transform:scaleY(1.1);transform-origin:0 15.31px;">44</div><div class="t" style="left:108.70px;top:1517.67px;font-size:20px;color:#f6b80c;font-weight:400;width:199.60px;height:26.0px;overflow:hidden;transform:scaleY(1.1);transform-origin:0 15.73px;">LargeBattery</div><div class="t" style="left:319.40px;top:1519.36px;font-size:18px;color:#f6b80c;font-weight:400;width:210.60px;height:23.4px;overflow:hidden;transform:scaleY(1.1);transform-origin:0 14.04px;">Large Battery</div><div class="t" style="left:536.00px;top:1519.36px;font-size:18px;color:#f6b80c;font-weight:400;width:589.00px;height:23.4px;overflow:hidden;transform:scaleY(1.1);transform-origin:0 14.04px;"></div><div class="t" style="left:1136.10px;top:1519.36px;font-size:18px;color:#f6b80c;font-weight:400;transform:scaleY(1.1);transform-origin:0 14.04px;">0.100000</div><div class="t" style="left:1229.20px;top:1519.36px;font-size:18px;color:#f6b80c;font-weight:400;transform:scaleY(1.1);transform-origin:0 14.04px;">Building</div><div class="t" style="left:1346.20px;top:1519.36px;font-size:18px;color:#f6b80c;font-weight:400;transform:scaleY(1.1);transform-origin:0 14.04px;">None</div><div class="t" style="left:1479.70px;top:1519.36px;font-size:18px;color:#f6b80c;font-weight:400;transform:scaleY(1.1);transform-origin:0 14.04px;">False</div><div class="t" style="left:1566.70px;top:1519.36px;font-size:18px;color:#f6b80c;font-weight:400;width:31.90px;height:23.4px;overflow:hidden;transform:scaleY(1.1);transform-origin:0 14.04px;">None</div><div style="left:1588px;top:263px;width:12px;height:1625px;background:linear-gradient(90deg, rgba(0,0,0,0), rgba(0,0,0,0.42));"></div><div style="left:1610px;top:191px;width:1737px;height:1697px;background:#232323;"></div><div style="left:1610px;top:153px;width:240px;height:37px;background:#252525;border-radius:6px 6px 0 0;"></div><div style="left:1610px;top:190px;width:1737px;height:1.3px;background:#1e1e1e;"></div><div class="t" style="left:1649.30px;top:161.69px;font-size:19.5px;color:#c4c4c4;font-weight:400;transform:scaleY(1.1);transform-origin:0 15.31px;">Row Editor</div><svg style="left:1818px;top:165px;" width="11" height="11" viewBox="0 0 11 11"><path d="M1 1 L10 10 M10 1 L1 10" stroke="#d0d0d0" stroke-width="2"/></svg><div style="left:1616.5px;top:197.3px;width:250px;height:28.5px;background:#0f0f0f;border:2px solid #2e2e2e;border-radius:6px;"></div><div class="t" style="left:1628.00px;top:204.27px;font-size:20px;color:#d4d4d4;font-weight:400;transform:scaleY(1.1);transform-origin:0 15.73px;">LargeBattery</div><svg style="left:1836.5px;top:207.7px;" width="15" height="10" viewBox="0 0 15 10"><path d="M1.5 1.5 L7.5 7.5 L13.5 1.5" fill="none" stroke="#d0d0d0" stroke-width="2.2"/></svg><svg style="left:1886px;top:205px;" width="20" height="17" viewBox="0 0 20 17"><path d="M7 1.5 L1.8 6.3 L7 11.2" fill="none" stroke="#f0f0f0" stroke-width="2.2" stroke-linecap="round" stroke-linejoin="round"/><path d="M2 6.3 H14.5 A3.9 3.9 0 0 1 14.5 14.1 H12.5" fill="none" stroke="#f0f0f0" stroke-width="2.2" stroke-linecap="round"/></svg><div style="left:1613px;top:233px;width:1734px;height:39px;background:#2f2f2f;"></div><svg style="left:1620.7px;top:247px;" width="15" height="10" viewBox="0 0 15 10"><path d="M0 0 H15 L7.5 10 Z" fill="#9a9a9a"/></svg><div class="t" style="left:1645.00px;top:245.86px;font-size:16px;color:#d8d8d8;font-weight:700;transform:scaleY(1.1);transform-origin:0 12.34px;letter-spacing:-0.4px;">LargeBattery</div><div style="left:1613px;top:271.5px;width:1734px;height:2px;background:#1b1b1b;"></div><div style="left:1613px;top:312.1px;width:1734px;height:2px;background:#1b1b1b;"></div><div style="left:1613px;top:352.7px;width:1734px;height:2px;background:#1b1b1b;"></div><div style="left:1613px;top:393.3px;width:1734px;height:2px;background:#1b1b1b;"></div><div style="left:1613px;top:433.9px;width:1734px;height:2px;background:#1b1b1b;"></div><div style="left:1613px;top:474.4px;width:1734px;height:2px;background:#1b1b1b;"></div><div style="left:1613px;top:514.9px;width:1734px;height:2px;background:#1b1b1b;"></div><div style="left:1613px;top:555.5px;width:1734px;height:2px;background:#1b1b1b;"></div><div style="left:1613px;top:596.2px;width:1734px;height:2px;background:#1b1b1b;"></div><div style="left:1613px;top:683.1px;width:1734px;height:2px;background:#1b1b1b;"></div><div style="left:1613px;top:770.0px;width:1734px;height:2px;background:#1b1b1b;"></div><div style="left:1613px;top:810.7px;width:1734px;height:2px;background:#1b1b1b;"></div><div style="left:1613px;top:851.4px;width:1734px;height:2px;background:#1b1b1b;"></div><div style="left:1613px;top:891.9px;width:1734px;height:2px;background:#1b1b1b;"></div><div style="left:1613px;top:932.4px;width:1734px;height:2px;background:#1b1b1b;"></div><div style="left:1613px;top:972.9px;width:1734px;height:2px;background:#1b1b1b;"></div><div style="left:1613px;top:1013.3px;width:1734px;height:2px;background:#1b1b1b;"></div><div style="left:1613px;top:1053.7px;width:1734px;height:2px;background:#1b1b1b;"></div><div style="left:1613px;top:1094.1px;width:1734px;height:2px;background:#1b1b1b;"></div><div style="left:1613px;top:1134.6px;width:1734px;height:2px;background:#1b1b1b;"></div><div style="left:1613px;top:1175.1px;width:1734px;height:2px;background:#1b1b1b;"></div><div style="left:1613px;top:1215.9px;width:1734px;height:2px;background:#1b1b1b;"></div><div style="left:1613px;top:1302.4px;width:1734px;height:2px;background:#1b1b1b;"></div><div style="left:1613px;top:1389.1px;width:1734px;height:2px;background:#1b1b1b;"></div><div style="left:1613px;top:1476.3px;width:1734px;height:2px;background:#1b1b1b;"></div><div style="left:1613px;top:1517.0px;width:1734px;height:2px;background:#1b1b1b;"></div><div style="left:1613px;top:1557.4px;width:1734px;height:2px;background:#1b1b1b;"></div><div style="left:1613px;top:1597.9px;width:1734px;height:2px;background:#1b1b1b;"></div><div style="left:1613px;top:1638.3px;width:1734px;height:2px;background:#1b1b1b;"></div><div style="left:1613px;top:1678.8px;width:1734px;height:2px;background:#1b1b1b;"></div><div style="left:1613px;top:1719.1px;width:1734px;height:2px;background:#1b1b1b;"></div><div style="left:2489px;top:273px;width:1px;height:1446.6px;background:#1e1e1e;"></div><div class="t" style="left:1646.00px;top:285.96px;font-size:16px;color:#c8c8c8;font-weight:400;transform:scaleY(1.1);transform-origin:0 12.34px;">Name</div><div class="t" style="left:1646.00px;top:326.56px;font-size:16px;color:#c8c8c8;font-weight:400;transform:scaleY(1.1);transform-origin:0 12.34px;">Description</div><div class="t" style="left:1646.00px;top:367.16px;font-size:16px;color:#c8c8c8;font-weight:400;transform:scaleY(1.1);transform-origin:0 12.34px;">Weight</div><div class="t" style="left:1646.00px;top:407.76px;font-size:16px;color:#c8c8c8;font-weight:400;transform:scaleY(1.1);transform-origin:0 12.34px;">Category</div><div class="t" style="left:1646.00px;top:448.31px;font-size:16px;color:#c8c8c8;font-weight:400;transform:scaleY(1.1);transform-origin:0 12.34px;">EquipmentSlot</div><div class="t" style="left:1646.00px;top:488.81px;font-size:16px;color:#c8c8c8;font-weight:400;transform:scaleY(1.1);transform-origin:0 12.34px;">Holdable</div><div class="t" style="left:1646.00px;top:529.36px;font-size:16px;color:#c8c8c8;font-weight:400;transform:scaleY(1.1);transform-origin:0 12.34px;">Holdable Class</div><div class="t" style="left:1646.00px;top:570.01px;font-size:16px;color:#c8c8c8;font-weight:400;transform:scaleY(1.1);transform-origin:0 12.34px;">Attachment Class</div><div class="t" style="left:1646.00px;top:633.81px;font-size:16px;color:#c8c8c8;font-weight:400;transform:scaleY(1.1);transform-origin:0 12.34px;">TP Equip Montage</div><div class="t" style="left:1646.00px;top:720.71px;font-size:16px;color:#c8c8c8;font-weight:400;transform:scaleY(1.1);transform-origin:0 12.34px;">FP Equip Montage</div><div class="t" style="left:1646.00px;top:784.51px;font-size:16px;color:#c8c8c8;font-weight:400;transform:scaleY(1.1);transform-origin:0 12.34px;">Droppable</div><div class="t" style="left:1646.00px;top:825.21px;font-size:16px;color:#c8c8c8;font-weight:400;transform:scaleY(1.1);transform-origin:0 12.34px;">Stackable</div><div class="t" style="left:1646.00px;top:865.81px;font-size:16px;color:#c8c8c8;font-weight:400;transform:scaleY(1.1);transform-origin:0 12.34px;">MaxStack</div><div class="t" style="left:1646.00px;top:906.31px;font-size:16px;color:#c8c8c8;font-weight:400;transform:scaleY(1.1);transform-origin:0 12.34px;">InventorySlots</div><div class="t" style="left:1646.00px;top:946.81px;font-size:16px;color:#c8c8c8;font-weight:400;transform:scaleY(1.1);transform-origin:0 12.34px;">UseText</div><div class="t" style="left:1646.00px;top:987.26px;font-size:16px;color:#c8c8c8;font-weight:400;transform:scaleY(1.1);transform-origin:0 12.34px;">Armor</div><div class="t" style="left:1646.00px;top:1027.66px;font-size:16px;color:#c8c8c8;font-weight:400;transform:scaleY(1.1);transform-origin:0 12.34px;">Hunger</div><div class="t" style="left:1646.00px;top:1068.06px;font-size:16px;color:#c8c8c8;font-weight:400;transform:scaleY(1.1);transform-origin:0 12.34px;">Thirst</div><div class="t" style="left:1646.00px;top:1108.51px;font-size:16px;color:#c8c8c8;font-weight:400;transform:scaleY(1.1);transform-origin:0 12.34px;">Health</div><div class="t" style="left:1646.00px;top:1149.01px;font-size:16px;color:#c8c8c8;font-weight:400;transform:scaleY(1.1);transform-origin:0 12.34px;">Stamina</div><div class="t" style="left:1646.00px;top:1189.66px;font-size:16px;color:#c8c8c8;font-weight:400;transform:scaleY(1.1);transform-origin:0 12.34px;">Fuel Time</div><div class="t" style="left:1646.00px;top:1253.31px;font-size:16px;color:#c8c8c8;font-weight:400;transform:scaleY(1.1);transform-origin:0 12.34px;">Icon</div><div class="t" style="left:1646.00px;top:1339.91px;font-size:16px;color:#c8c8c8;font-weight:400;transform:scaleY(1.1);transform-origin:0 12.34px;">WorldMesh</div><div class="t" style="left:1646.00px;top:1426.86px;font-size:16px;color:#c8c8c8;font-weight:400;transform:scaleY(1.1);transform-origin:0 12.34px;">EquippedMesh</div><div class="t" style="left:1646.00px;top:1490.81px;font-size:16px;color:#c8c8c8;font-weight:400;transform:scaleY(1.1);transform-origin:0 12.34px;">Mesh World Offset</div><svg style="left:1623px;top:1492.45px;" width="10" height="12" viewBox="0 0 10 12"><path d="M0 0 L10 6 L0 12 Z" fill="#8a8a8a"/></svg><div class="t" style="left:1646.00px;top:1531.36px;font-size:16px;color:#c8c8c8;font-weight:400;transform:scaleY(1.1);transform-origin:0 12.34px;">Contains</div><svg style="left:1623px;top:1533.0px;" width="10" height="12" viewBox="0 0 10 12"><path d="M0 0 L10 6 L0 12 Z" fill="#8a8a8a"/></svg><div class="t" style="left:1646.00px;top:1571.81px;font-size:16px;color:#c8c8c8;font-weight:400;transform:scaleY(1.1);transform-origin:0 12.34px;">Sounds</div><svg style="left:1623px;top:1573.45px;" width="10" height="12" viewBox="0 0 10 12"><path d="M0 0 L10 6 L0 12 Z" fill="#8a8a8a"/></svg><div class="t" style="left:1646.00px;top:1612.26px;font-size:16px;color:#c8c8c8;font-weight:400;transform:scaleY(1.1);transform-origin:0 12.34px;">Pick Up Time</div><div class="t" style="left:1646.00px;top:1652.71px;font-size:16px;color:#c8c8c8;font-weight:400;transform:scaleY(1.1);transform-origin:0 12.34px;">Max Weight Addition</div><div class="t" style="left:1646.00px;top:1693.11px;font-size:16px;color:#c8c8c8;font-weight:400;transform:scaleY(1.1);transform-origin:0 12.34px;">Stops Bleeding</div><div style="left:2508.5px;top:279px;width:140.5px;height:23.7px;background:#0e0e0e;border:2px solid #2d2d2d;border-radius:5px;"></div><div class="t" style="left:2521.20px;top:285.11px;font-size:16px;color:#c8c8c8;font-weight:400;transform:scaleY(1.1);transform-origin:0 12.34px;">Large Battery</div><svg style="left:2665.5px;top:282px;" width="22" height="25" viewBox="0 0 22 25"><path d="M1.4 2 V23" stroke="#c8c8c8" stroke-width="1.8"/><path d="M3.5 2.6 C5 0.8 6.8 0.3 8.4 0.3 C11 0.3 13.5 4.9 16.5 4.9 C18 4.9 19.3 4.2 20.4 3.7 V16.9 C19.3 17.6 18 18.4 16.5 18.4 C13.5 18.4 11 14.1 8.1 14.1 C6.5 14.1 5 14.9 3.5 16.4 Z" fill="#777"/></svg><div style="left:2508.5px;top:319.3px;width:140.5px;height:23.7px;background:#0e0e0e;border:2px solid #2d2d2d;border-radius:5px;"></div><svg style="left:2665.5px;top:322.5px;" width="22" height="25" viewBox="0 0 22 25"><path d="M1.4 2 V23" stroke="#c8c8c8" stroke-width="1.8"/><path d="M3.5 2.6 C5 0.8 6.8 0.3 8.4 0.3 C11 0.3 13.5 4.9 16.5 4.9 C18 4.9 19.3 4.2 20.4 3.7 V16.9 C19.3 17.6 18 18.4 16.5 18.4 C13.5 18.4 11 14.1 8.1 14.1 C6.5 14.1 5 14.9 3.5 16.4 Z" fill="#777"/></svg><div style="left:2508.5px;top:360px;width:183px;height:23px;background:#0e0e0e;border:2px solid #2d2d2d;border-radius:5px;"></div><div class="t" style="left:2521.20px;top:365.76px;font-size:16px;color:#f0f0f0;font-weight:400;transform:scaleY(1.1);transform-origin:0 12.34px;">0.1</div><div style="left:2508.5px;top:399.3px;width:183px;height:26.3px;background:#0e0e0e;border:2px solid #2d2d2d;border-radius:5px;"></div><div class="t" style="left:2518.70px;top:407.11px;font-size:16px;color:#c8c8c8;font-weight:400;transform:scaleY(1.1);transform-origin:0 12.34px;">Building</div><svg style="left:2662px;top:410.45px;" width="15" height="10" viewBox="0 0 15 10"><path d="M1.5 1.5 L7.5 7.5 L13.5 1.5" fill="none" stroke="#d0d0d0" stroke-width="2.2"/></svg><div style="left:2508.5px;top:439px;width:183px;height:26.3px;background:#0e0e0e;border:2px solid #2d2d2d;border-radius:5px;"></div><div class="t" style="left:2518.70px;top:446.81px;font-size:16px;color:#c8c8c8;font-weight:400;transform:scaleY(1.1);transform-origin:0 12.34px;">None</div><svg style="left:2662px;top:450.15px;" width="15" height="10" viewBox="0 0 15 10"><path d="M1.5 1.5 L7.5 7.5 L13.5 1.5" fill="none" stroke="#d0d0d0" stroke-width="2.2"/></svg><div style="left:2508.1px;top:482.1px;width:22.3px;height:22.5px;background:#0e0e0e;border:2px solid #2d2d2d;border-radius:5px;"></div><div style="left:2508.5px;top:520px;width:138.5px;height:27px;background:#0e0e0e;border:2px solid #2d2d2d;border-radius:5px;"></div><div class="t" style="left:2518.70px;top:528.16px;font-size:16px;color:#c8c8c8;font-weight:400;transform:scaleY(1.1);transform-origin:0 12.34px;">None</div><svg style="left:2618px;top:531.5px;" width="15" height="10" viewBox="0 0 15 10"><path d="M1.5 1.5 L7.5 7.5 L13.5 1.5" fill="none" stroke="#d0d0d0" stroke-width="2.2"/></svg><svg style="left:2662.5px;top:524px;" width="25" height="25" viewBox="0 0 25 25"><path d="M22.01 6.43 A10.8 10.8 0 1 0 22.01 17.87" fill="none" stroke="#c8c8c8" stroke-width="2.15"/><path d="M12.7 6.4 L7.2 11.9 L12.7 17.4" fill="none" stroke="#c8c8c8" stroke-width="3.1"/><path d="M7 11.9 H23.5" stroke="#c8c8c8" stroke-width="3.5"/></svg><svg style="left:2702px;top:524.5px;" width="25" height="25" viewBox="0 0 25 25"><path d="M0 1.5 Q0 -0.5 2 -0.5 H8.3 L12.3 3.8 H20.4 Q22.4 3.8 22.4 5.8 V20.5 H1.5 Q0 20.5 0 19 Z" fill="#c8c8c8"/><circle cx="18.2" cy="14.5" r="7.1" fill="#232323"/><path d="M13.7 19.1 L9.7 22.9" stroke="#232323" stroke-width="5.5"/><circle cx="18.2" cy="14.5" r="4.8" fill="none" stroke="#c8c8c8" stroke-width="2.15"/><path d="M14.6 18.2 L9.7 22.9" stroke="#c8c8c8" stroke-width="2.5"/></svg><svg style="left:2741px;top:524px;" width="24" height="24" viewBox="0 0 24 24"><circle cx="12" cy="12" r="10.3" fill="none" stroke="#c8c8c8" stroke-width="2"/><path d="M12 7 V17 M7 12 H17" stroke="#c8c8c8" stroke-width="2.6"/></svg><svg style="left:2782px;top:525.5px;" width="20" height="20" viewBox="0 0 20 20"><path d="M2.3 2.3 L17.7 17.7 M17.7 2.3 L2.3 17.7" stroke="#c8c8c8" stroke-width="2.8" stroke-linecap="round"/></svg><div style="left:2508.5px;top:561px;width:138.5px;height:27px;background:#0e0e0e;border:2px solid #2d2d2d;border-radius:5px;"></div><div class="t" style="left:2518.70px;top:569.16px;font-size:16px;color:#c8c8c8;font-weight:400;transform:scaleY(1.1);transform-origin:0 12.34px;">None</div><svg style="left:2618px;top:572.5px;" width="15" height="10" viewBox="0 0 15 10"><path d="M1.5 1.5 L7.5 7.5 L13.5 1.5" fill="none" stroke="#d0d0d0" stroke-width="2.2"/></svg><svg style="left:2662.5px;top:565px;" width="25" height="25" viewBox="0 0 25 25"><path d="M22.01 6.43 A10.8 10.8 0 1 0 22.01 17.87" fill="none" stroke="#c8c8c8" stroke-width="2.15"/><path d="M12.7 6.4 L7.2 11.9 L12.7 17.4" fill="none" stroke="#c8c8c8" stroke-width="3.1"/><path d="M7 11.9 H23.5" stroke="#c8c8c8" stroke-width="3.5"/></svg><svg style="left:2702px;top:565.5px;" width="25" height="25" viewBox="0 0 25 25"><path d="M0 1.5 Q0 -0.5 2 -0.5 H8.3 L12.3 3.8 H20.4 Q22.4 3.8 22.4 5.8 V20.5 H1.5 Q0 20.5 0 19 Z" fill="#c8c8c8"/><circle cx="18.2" cy="14.5" r="7.1" fill="#232323"/><path d="M13.7 19.1 L9.7 22.9" stroke="#232323" stroke-width="5.5"/><circle cx="18.2" cy="14.5" r="4.8" fill="none" stroke="#c8c8c8" stroke-width="2.15"/><path d="M14.6 18.2 L9.7 22.9" stroke="#c8c8c8" stroke-width="2.5"/></svg><svg style="left:2741px;top:565px;" width="24" height="24" viewBox="0 0 24 24"><circle cx="12" cy="12" r="10.3" fill="none" stroke="#c8c8c8" stroke-width="2"/><path d="M12 7 V17 M7 12 H17" stroke="#c8c8c8" stroke-width="2.6"/></svg><svg style="left:2782px;top:566.5px;" width="20" height="20" viewBox="0 0 20 20"><path d="M2.3 2.3 L17.7 17.7 M17.7 2.3 L2.3 17.7" stroke="#c8c8c8" stroke-width="2.8" stroke-linecap="round"/></svg><div style="left:2509px;top:604.3000000000001px;width:69.4px;height:70.4px;background:#1a1a1a;border:2px solid #2c2c2c;border-radius:5px;overflow:hidden;box-shadow:1px 2px 3px rgba(0,0,0,0.5);"><div class="t" style="left:0;top:28px;width:100%;text-align:center;font-size:14.5px;color:#f0f0f0;transform:scaleY(1.08);">None</div><div style="left:0;bottom:0;width:100%;height:3.5px;background:#6a64f0;"></div></div><div style="left:2598px;top:604.6px;width:280px;height:27px;background:#0e0e0e;border:2px solid #2d2d2d;border-radius:5px;"></div><div class="t" style="left:2608.20px;top:612.76px;font-size:16px;color:#c8c8c8;font-weight:400;transform:scaleY(1.1);transform-origin:0 12.34px;">None</div><svg style="left:2849px;top:616.1px;" width="15" height="10" viewBox="0 0 15 10"><path d="M1.5 1.5 L7.5 7.5 L13.5 1.5" fill="none" stroke="#d0d0d0" stroke-width="2.2"/></svg><svg style="left:2603.5px;top:644.7px;" width="25" height="25" viewBox="0 0 25 25"><path d="M22.01 6.43 A10.8 10.8 0 1 0 22.01 17.87" fill="none" stroke="#c8c8c8" stroke-width="2.15"/><path d="M12.7 6.4 L7.2 11.9 L12.7 17.4" fill="none" stroke="#c8c8c8" stroke-width="3.1"/><path d="M7 11.9 H23.5" stroke="#c8c8c8" stroke-width="3.5"/></svg><svg style="left:2642.5px;top:644.2px;" width="25" height="25" viewBox="0 0 25 25"><path d="M0 1.5 Q0 -0.5 2 -0.5 H8.3 L12.3 3.8 H20.4 Q22.4 3.8 22.4 5.8 V20.5 H1.5 Q0 20.5 0 19 Z" fill="#c8c8c8"/><circle cx="18.2" cy="14.5" r="7.1" fill="#232323"/><path d="M13.7 19.1 L9.7 22.9" stroke="#232323" stroke-width="5.5"/><circle cx="18.2" cy="14.5" r="4.8" fill="none" stroke="#c8c8c8" stroke-width="2.15"/><path d="M14.6 18.2 L9.7 22.9" stroke="#c8c8c8" stroke-width="2.5"/></svg><div style="left:2509px;top:691.2px;width:69.4px;height:70.4px;background:#1a1a1a;border:2px solid #2c2c2c;border-radius:5px;overflow:hidden;box-shadow:1px 2px 3px rgba(0,0,0,0.5);"><div class="t" style="left:0;top:28px;width:100%;text-align:center;font-size:14.5px;color:#f0f0f0;transform:scaleY(1.08);">None</div><div style="left:0;bottom:0;width:100%;height:3.5px;background:#6a64f0;"></div></div><div style="left:2598px;top:691.5px;width:280px;height:27px;background:#0e0e0e;border:2px solid #2d2d2d;border-radius:5px;"></div><div class="t" style="left:2608.20px;top:699.66px;font-size:16px;color:#c8c8c8;font-weight:400;transform:scaleY(1.1);transform-origin:0 12.34px;">None</div><svg style="left:2849px;top:703.0px;" width="15" height="10" viewBox="0 0 15 10"><path d="M1.5 1.5 L7.5 7.5 L13.5 1.5" fill="none" stroke="#d0d0d0" stroke-width="2.2"/></svg><svg style="left:2603.5px;top:731.6px;" width="25" height="25" viewBox="0 0 25 25"><path d="M22.01 6.43 A10.8 10.8 0 1 0 22.01 17.87" fill="none" stroke="#c8c8c8" stroke-width="2.15"/><path d="M12.7 6.4 L7.2 11.9 L12.7 17.4" fill="none" stroke="#c8c8c8" stroke-width="3.1"/><path d="M7 11.9 H23.5" stroke="#c8c8c8" stroke-width="3.5"/></svg><svg style="left:2642.5px;top:731.1px;" width="25" height="25" viewBox="0 0 25 25"><path d="M0 1.5 Q0 -0.5 2 -0.5 H8.3 L12.3 3.8 H20.4 Q22.4 3.8 22.4 5.8 V20.5 H1.5 Q0 20.5 0 19 Z" fill="#c8c8c8"/><circle cx="18.2" cy="14.5" r="7.1" fill="#232323"/><path d="M13.7 19.1 L9.7 22.9" stroke="#232323" stroke-width="5.5"/><circle cx="18.2" cy="14.5" r="4.8" fill="none" stroke="#c8c8c8" stroke-width="2.15"/><path d="M14.6 18.2 L9.7 22.9" stroke="#c8c8c8" stroke-width="2.5"/></svg><div style="left:2508.1px;top:777.1999999999999px;width:22.3px;height:22.5px;background:#0e0e0e;border:2px solid #2d2d2d;border-radius:5px;"></div><svg style="left:2513.5px;top:784.9px;" width="16" height="12" viewBox="0 0 16 12"><path d="M2.6 5.6 L6.3 9.4 L13.4 2" fill="none" stroke="#1480f0" stroke-width="3.1" stroke-linecap="round" stroke-linejoin="round"/></svg><div style="left:2508.1px;top:818.3px;width:22.3px;height:22.5px;background:#0e0e0e;border:2px solid #2d2d2d;border-radius:5px;"></div><svg style="left:2513.5px;top:826px;" width="16" height="12" viewBox="0 0 16 12"><path d="M2.6 5.6 L6.3 9.4 L13.4 2" fill="none" stroke="#1480f0" stroke-width="3.1" stroke-linecap="round" stroke-linejoin="round"/></svg><div style="left:2508.5px;top:859.65px;width:183px;height:23px;background:#0e0e0e;border:2px solid #2d2d2d;border-radius:5px;"></div><div class="t" style="left:2521.20px;top:865.41px;font-size:16px;color:#f0f0f0;font-weight:400;transform:scaleY(1.1);transform-origin:0 12.34px;">99</div><div style="left:2508.5px;top:900.15px;width:183px;height:23px;background:#0e0e0e;border:2px solid #2d2d2d;border-radius:5px;"></div><div class="t" style="left:2521.20px;top:905.91px;font-size:16px;color:#f0f0f0;font-weight:400;transform:scaleY(1.1);transform-origin:0 12.34px;">0</div><div style="left:2508.5px;top:940.65px;width:183px;height:23px;background:#0e0e0e;border:2px solid #2d2d2d;border-radius:5px;"></div><div class="t" style="left:2521.20px;top:946.41px;font-size:16px;color:#a8a8a8;font-weight:400;transform:scaleY(1.1);transform-origin:0 12.34px;">Place</div><div style="left:2508.5px;top:981.0999999999999px;width:183px;height:23px;background:#0e0e0e;border:2px solid #2d2d2d;border-radius:5px;"></div><div class="t" style="left:2521.20px;top:986.86px;font-size:16px;color:#f0f0f0;font-weight:400;transform:scaleY(1.1);transform-origin:0 12.34px;">0</div><div style="left:2508.5px;top:1021.5px;width:183px;height:23px;background:#0e0e0e;border:2px solid #2d2d2d;border-radius:5px;"></div><div class="t" style="left:2521.20px;top:1027.26px;font-size:16px;color:#f0f0f0;font-weight:400;transform:scaleY(1.1);transform-origin:0 12.34px;">0.0</div><div style="left:2508.5px;top:1061.9px;width:183px;height:23px;background:#0e0e0e;border:2px solid #2d2d2d;border-radius:5px;"></div><div class="t" style="left:2521.20px;top:1067.66px;font-size:16px;color:#f0f0f0;font-weight:400;transform:scaleY(1.1);transform-origin:0 12.34px;">0.0</div><div style="left:2508.5px;top:1102.35px;width:183px;height:23px;background:#0e0e0e;border:2px solid #2d2d2d;border-radius:5px;"></div><div class="t" style="left:2521.20px;top:1108.11px;font-size:16px;color:#f0f0f0;font-weight:400;transform:scaleY(1.1);transform-origin:0 12.34px;">0</div><div style="left:2508.5px;top:1142.85px;width:183px;height:23px;background:#0e0e0e;border:2px solid #2d2d2d;border-radius:5px;"></div><div class="t" style="left:2521.20px;top:1148.61px;font-size:16px;color:#f0f0f0;font-weight:400;transform:scaleY(1.1);transform-origin:0 12.34px;">0.0</div><div style="left:2508.5px;top:1183.5px;width:183px;height:23px;background:#0e0e0e;border:2px solid #2d2d2d;border-radius:5px;"></div><div class="t" style="left:2521.20px;top:1189.26px;font-size:16px;color:#f0f0f0;font-weight:400;transform:scaleY(1.1);transform-origin:0 12.34px;">0.0</div><div style="left:2509px;top:1224.0px;width:69.4px;height:70.4px;background:#1a1a1a;border:2px solid #2c2c2c;border-radius:5px;overflow:hidden;box-shadow:1px 2px 3px rgba(0,0,0,0.5);"><div style="left:0;top:0;width:100%;height:100%;background:conic-gradient(#6a6a6a 25%, #444 0 50%, #6a6a6a 0 75%, #444 0);background-size:8.9px 8.9px;"></div><svg style="left:0;top:0;filter:blur(0.35px)" width="70" height="70" viewBox="0 0 70 70"><path d="M10.5 24 L14 21.5 L57 21.5 L60 25 L59.5 46 L55 49 L15 49 L10.3 45 Z" fill="#343b46" opacity="0.85"/><rect x="17.3" y="25.8" width="16" height="9" fill="#dfe2e8"/><rect x="35.3" y="25.8" width="16" height="9" fill="#e6e8ec"/><rect x="17.3" y="36.8" width="16" height="8" fill="#d2d6dc"/><rect x="35.3" y="36.8" width="16" height="8" fill="#d6d9de"/><path d="M33.3 22 V49 M12 30 L16 30 M54 30 L58 30" stroke="#1c222a" stroke-width="2"/><path d="M11 26 L11 44 M59 26 L59 44" stroke="#5c6470" stroke-width="1.5"/></svg><div style="left:0;bottom:0;width:100%;height:3.5px;background:#c8323c;"></div></div><div style="left:2598px;top:1224.3000000000002px;width:280px;height:27px;background:#0e0e0e;border:2px solid #2d2d2d;border-radius:5px;"></div><div class="t" style="left:2608.20px;top:1232.46px;font-size:16px;color:#c8c8c8;font-weight:400;transform:scaleY(1.1);transform-origin:0 12.34px;">T_WallLight</div><svg style="left:2849px;top:1235.8000000000002px;" width="15" height="10" viewBox="0 0 15 10"><path d="M1.5 1.5 L7.5 7.5 L13.5 1.5" fill="none" stroke="#d0d0d0" stroke-width="2.2"/></svg><svg style="left:2603.5px;top:1264.4px;" width="25" height="25" viewBox="0 0 25 25"><path d="M22.01 6.43 A10.8 10.8 0 1 0 22.01 17.87" fill="none" stroke="#c8c8c8" stroke-width="2.15"/><path d="M12.7 6.4 L7.2 11.9 L12.7 17.4" fill="none" stroke="#c8c8c8" stroke-width="3.1"/><path d="M7 11.9 H23.5" stroke="#c8c8c8" stroke-width="3.5"/></svg><svg style="left:2642.5px;top:1263.9px;" width="25" height="25" viewBox="0 0 25 25"><path d="M0 1.5 Q0 -0.5 2 -0.5 H8.3 L12.3 3.8 H20.4 Q22.4 3.8 22.4 5.8 V20.5 H1.5 Q0 20.5 0 19 Z" fill="#c8c8c8"/><circle cx="18.2" cy="14.5" r="7.1" fill="#232323"/><path d="M13.7 19.1 L9.7 22.9" stroke="#232323" stroke-width="5.5"/><circle cx="18.2" cy="14.5" r="4.8" fill="none" stroke="#c8c8c8" stroke-width="2.15"/><path d="M14.6 18.2 L9.7 22.9" stroke="#c8c8c8" stroke-width="2.5"/></svg><div style="left:2509px;top:1310.5px;width:69.4px;height:70.4px;background:#0a0a0a;border:2px solid #2c2c2c;border-radius:5px;overflow:hidden;box-shadow:1px 2px 3px rgba(0,0,0,0.5);"><div style="left:0;top:0;width:100%;height:100%;background:conic-gradient(#111 25%, #090909 0 50%, #111 0 75%, #090909 0);background-size:8.9px 8.9px;"></div><svg style="left:0;top:0;filter:blur(0.4px)" width="70" height="70" viewBox="0 0 70 70"><defs><radialGradient id="bg1" cx="0.62" cy="0.45" r="0.65"><stop offset="0" stop-color="#8a6c58"/><stop offset="0.55" stop-color="#554034"/><stop offset="1" stop-color="#18110c"/></radialGradient><linearGradient id="bg2" x1="0" y1="0" x2="1" y2="0"><stop offset="0" stop-color="#4a382a"/><stop offset="0.6" stop-color="#806652"/><stop offset="1" stop-color="#3a2a20"/></linearGradient></defs><path d="M20.5 50 C19 42 21 35 25 31 L48 31 C52 35 53.5 42 52.5 50 C51.5 57 46 63.4 37 63.4 C27 63.4 22 57 20.5 50 Z" fill="url(#bg1)"/><path d="M20 8.4 C30 7 43 7 53.3 8.4 L47.5 24.5 L25.5 24.5 Z" fill="url(#bg2)"/><rect x="25" y="24.5" width="23" height="6.5" fill="#4e3c30"/><path d="M30 34 C28 44 29 55 32 62 M40 34 C42 44 42 55 40 62" stroke="#2e221a" stroke-width="1.6" fill="none" opacity="0.45"/></svg><div style="left:0;bottom:0;width:100%;height:3.5px;background:#14e4f4;"></div></div><div style="left:2598px;top:1310.8000000000002px;width:280px;height:27px;background:#0e0e0e;border:2px solid #2d2d2d;border-radius:5px;"></div><div class="t" style="left:2608.20px;top:1318.96px;font-size:16px;color:#c8c8c8;font-weight:400;transform:scaleY(1.1);transform-origin:0 12.34px;">SM_Loot_Bag_01</div><svg style="left:2849px;top:1322.3000000000002px;" width="15" height="10" viewBox="0 0 15 10"><path d="M1.5 1.5 L7.5 7.5 L13.5 1.5" fill="none" stroke="#d0d0d0" stroke-width="2.2"/></svg><svg style="left:2603.5px;top:1350.9px;" width="25" height="25" viewBox="0 0 25 25"><path d="M22.01 6.43 A10.8 10.8 0 1 0 22.01 17.87" fill="none" stroke="#c8c8c8" stroke-width="2.15"/><path d="M12.7 6.4 L7.2 11.9 L12.7 17.4" fill="none" stroke="#c8c8c8" stroke-width="3.1"/><path d="M7 11.9 H23.5" stroke="#c8c8c8" stroke-width="3.5"/></svg><svg style="left:2642.5px;top:1350.4px;" width="25" height="25" viewBox="0 0 25 25"><path d="M0 1.5 Q0 -0.5 2 -0.5 H8.3 L12.3 3.8 H20.4 Q22.4 3.8 22.4 5.8 V20.5 H1.5 Q0 20.5 0 19 Z" fill="#c8c8c8"/><circle cx="18.2" cy="14.5" r="7.1" fill="#232323"/><path d="M13.7 19.1 L9.7 22.9" stroke="#232323" stroke-width="5.5"/><circle cx="18.2" cy="14.5" r="4.8" fill="none" stroke="#c8c8c8" stroke-width="2.15"/><path d="M14.6 18.2 L9.7 22.9" stroke="#c8c8c8" stroke-width="2.5"/></svg><div style="left:2509px;top:1397.1999999999998px;width:69.4px;height:70.4px;background:#1a1a1a;border:2px solid #2c2c2c;border-radius:5px;overflow:hidden;box-shadow:1px 2px 3px rgba(0,0,0,0.5);"><div class="t" style="left:0;top:28px;width:100%;text-align:center;font-size:14.5px;color:#f0f0f0;transform:scaleY(1.08);">None</div><div style="left:0;bottom:0;width:100%;height:3.5px;background:#e690e6;"></div></div><div style="left:2598px;top:1397.5px;width:280px;height:27px;background:#0e0e0e;border:2px solid #2d2d2d;border-radius:5px;"></div><div class="t" style="left:2608.20px;top:1405.66px;font-size:16px;color:#c8c8c8;font-weight:400;transform:scaleY(1.1);transform-origin:0 12.34px;">None</div><svg style="left:2849px;top:1409.0px;" width="15" height="10" viewBox="0 0 15 10"><path d="M1.5 1.5 L7.5 7.5 L13.5 1.5" fill="none" stroke="#d0d0d0" stroke-width="2.2"/></svg><svg style="left:2603.5px;top:1437.6px;" width="25" height="25" viewBox="0 0 25 25"><path d="M22.01 6.43 A10.8 10.8 0 1 0 22.01 17.87" fill="none" stroke="#c8c8c8" stroke-width="2.15"/><path d="M12.7 6.4 L7.2 11.9 L12.7 17.4" fill="none" stroke="#c8c8c8" stroke-width="3.1"/><path d="M7 11.9 H23.5" stroke="#c8c8c8" stroke-width="3.5"/></svg><svg style="left:2642.5px;top:1437.1px;" width="25" height="25" viewBox="0 0 25 25"><path d="M0 1.5 Q0 -0.5 2 -0.5 H8.3 L12.3 3.8 H20.4 Q22.4 3.8 22.4 5.8 V20.5 H1.5 Q0 20.5 0 19 Z" fill="#c8c8c8"/><circle cx="18.2" cy="14.5" r="7.1" fill="#232323"/><path d="M13.7 19.1 L9.7 22.9" stroke="#232323" stroke-width="5.5"/><circle cx="18.2" cy="14.5" r="4.8" fill="none" stroke="#c8c8c8" stroke-width="2.15"/><path d="M14.6 18.2 L9.7 22.9" stroke="#c8c8c8" stroke-width="2.5"/></svg><div class="t" style="left:2507.70px;top:1531.76px;font-size:16px;color:#c8c8c8;font-weight:400;transform:scaleY(1.1);transform-origin:0 12.34px;">1 Array elements</div><svg style="left:2696.5px;top:1526.7px;" width="24" height="24" viewBox="0 0 24 24"><circle cx="12" cy="12" r="10.3" fill="none" stroke="#c8c8c8" stroke-width="2"/><path d="M12 7 V17 M7 12 H17" stroke="#c8c8c8" stroke-width="2.6"/></svg><svg style="left:2736px;top:1525.7px;" width="22" height="24" viewBox="0 0 22 24"><path d="M7 4 Q7.3 1 10 1 H12 Q14.7 1 15 4 Z" fill="#c8c8c8"/><path d="M2 6.2 H20" stroke="#c8c8c8" stroke-width="3" stroke-linecap="round"/><path d="M4.8 9.5 L6 20.5 Q6.2 22.5 8.2 22.5 H13.8 Q15.8 22.5 16 20.5 L17.2 9.5" fill="none" stroke="#c8c8c8" stroke-width="3" stroke-linejoin="round"/></svg><div class="t" style="left:2507.70px;top:1572.21px;font-size:16px;color:#c8c8c8;font-weight:400;transform:scaleY(1.1);transform-origin:0 12.34px;">10 Map elements</div><svg style="left:2696.5px;top:1567.15px;" width="24" height="24" viewBox="0 0 24 24"><circle cx="12" cy="12" r="10.3" fill="none" stroke="#c8c8c8" stroke-width="2"/><path d="M12 7 V17 M7 12 H17" stroke="#c8c8c8" stroke-width="2.6"/></svg><svg style="left:2736px;top:1566.15px;" width="22" height="24" viewBox="0 0 22 24"><path d="M7 4 Q7.3 1 10 1 H12 Q14.7 1 15 4 Z" fill="#c8c8c8"/><path d="M2 6.2 H20" stroke="#c8c8c8" stroke-width="3" stroke-linecap="round"/><path d="M4.8 9.5 L6 20.5 Q6.2 22.5 8.2 22.5 H13.8 Q15.8 22.5 16 20.5 L17.2 9.5" fill="none" stroke="#c8c8c8" stroke-width="3" stroke-linejoin="round"/></svg><div style="left:2509px;top:1605px;width:182px;height:23px;background:#0e0e0e;border:2px solid #2d2d2d;border-radius:5px;"></div><div class="t" style="left:2521.70px;top:1610.76px;font-size:16px;color:#f0f0f0;font-weight:400;transform:scaleY(1.1);transform-origin:0 12.34px;">0.0</div><div style="left:2509px;top:1645.5px;width:182px;height:23px;background:#0e0e0e;border:2px solid #2d2d2d;border-radius:5px;"></div><div class="t" style="left:2521.70px;top:1651.26px;font-size:16px;color:#f0f0f0;font-weight:400;transform:scaleY(1.1);transform-origin:0 12.34px;">0.0</div><div style="left:2508.6px;top:1686.0px;width:22.3px;height:22.5px;background:#0e0e0e;border:2px solid #2d2d2d;border-radius:5px;"></div><svg style="left:0;top:0" width="3347" height="1888" viewBox="0 0 3347 1888"><path d="M2736.4 290.2 L2772.0 272.0 L2769.2 282.5 L2909.7 285.2 L2909.7 288.0 L2769.5 296.5 L2772.8 306.9 Z" fill="#e51b12"/><path d="M2496.7 369.5 L2467.5 396.9 L2467.3 386.0 L2199.4 463.3 L2198.6 460.7 L2463.1 372.6 L2457.1 363.5 Z" fill="#e51b12"/><path d="M2721.6 419.7 L2760.6 410.8 L2755.3 420.4 L3049.0 494.6 L3048.4 497.4 L2752.1 434.0 L2752.7 444.9 Z" fill="#e51b12"/><path d="M2472.7 1347.5 L2455.1 1383.4 L2451.0 1373.3 L2319.9 1468.6 L2318.1 1466.4 L2442.4 1362.3 L2433.6 1355.9 Z" fill="#e51b12"/><path d="M202.1 1556.3 L226.6 1587.9 L215.7 1587.2 L249.1 1773.3 L246.3 1773.9 L202.0 1590.0 L192.4 1595.1 Z" fill="#e51b12"/></svg>
</body></html>
